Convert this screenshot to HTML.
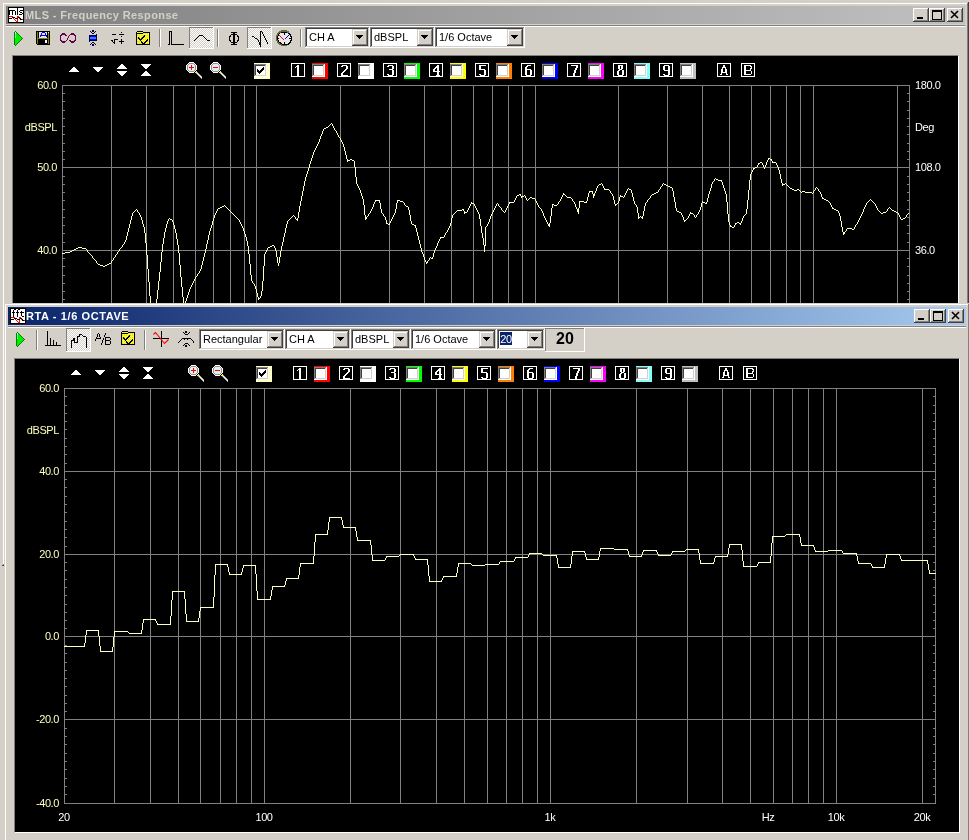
<!DOCTYPE html>
<html><head><meta charset="utf-8">
<style>
*{box-sizing:border-box}
html,body{margin:0;padding:0}
body{width:969px;height:840px;background:#d4d0c8;position:relative;overflow:hidden;font-family:"Liberation Sans",sans-serif;font-size:11px}
.a{position:absolute}
svg.a{overflow:visible}
.title{font-weight:bold;font-size:11px;line-height:18px;white-space:nowrap;transform:translateZ(0)}
.ctext{font-size:11px;color:#000;white-space:nowrap;transform:translateZ(0)}
.dither{background-color:#fff;background-image:linear-gradient(45deg,#d4d0c8 25%,transparent 25%,transparent 75%,#d4d0c8 75%),linear-gradient(45deg,#d4d0c8 25%,transparent 25%,transparent 75%,#d4d0c8 75%);background-size:2px 2px;background-position:0 0,1px 1px}
.lbl{font-size:12px;line-height:12px;white-space:nowrap;letter-spacing:-0.4px;transform:translateZ(0)}
</style></head><body>
<div class="a" style="left:3px;top:3px;width:964px;height:1px;background:#fff;"></div>
<div class="a" style="left:3px;top:3px;width:1px;height:561px;background:#fff;"></div>
<div class="a" style="left:3px;top:564px;width:1px;height:1px;background:#808080;"></div>
<div class="a" style="left:2px;top:565px;width:3px;height:1px;background:#404040;"></div>
<div class="a" style="left:967px;top:3px;width:1px;height:300px;background:#808080;"></div>
<div class="a" style="left:968px;top:2px;width:1px;height:301px;background:#404040;"></div>
<div class="a" style="left:6px;top:6px;width:959px;height:18px;background:linear-gradient(to right,#808080,#c0c0c0);"></div>
<div class="a title" style="left:26px;top:6px;color:#d4d0c8;letter-spacing:0.38px;margin-left:-1px">MLS - Frequency Response</div>
<svg class="a" style="left:8px;top:7px" width="16" height="16" shape-rendering="crispEdges"><rect x="0" y="0" width="16" height="1" fill="#000"/><rect x="0" y="1" width="1" height="1" fill="#000"/><rect x="1" y="1" width="8" height="1" fill="#fff"/><rect x="9" y="1" width="1" height="1" fill="#000"/><rect x="10" y="1" width="5" height="1" fill="#fff"/><rect x="15" y="1" width="1" height="1" fill="#000"/><rect x="0" y="2" width="1" height="1" fill="#000"/><rect x="1" y="2" width="8" height="1" fill="#fff"/><rect x="9" y="2" width="1" height="1" fill="#000"/><rect x="10" y="2" width="5" height="1" fill="#fff"/><rect x="15" y="2" width="1" height="1" fill="#000"/><rect x="0" y="3" width="7" height="1" fill="#000"/><rect x="7" y="3" width="2" height="1" fill="#fff"/><rect x="9" y="3" width="1" height="1" fill="#000"/><rect x="10" y="3" width="2" height="1" fill="#fff"/><rect x="12" y="3" width="4" height="1" fill="#000"/><rect x="0" y="4" width="2" height="1" fill="#000"/><rect x="2" y="4" width="2" height="1" fill="#fff"/><rect x="4" y="4" width="1" height="1" fill="#000"/><rect x="5" y="4" width="2" height="1" fill="#fff"/><rect x="7" y="4" width="1" height="1" fill="#000"/><rect x="8" y="4" width="1" height="1" fill="#fff"/><rect x="9" y="4" width="1" height="1" fill="#000"/><rect x="10" y="4" width="1" height="1" fill="#fff"/><rect x="11" y="4" width="1" height="1" fill="#000"/><rect x="12" y="4" width="3" height="1" fill="#fff"/><rect x="15" y="4" width="1" height="1" fill="#000"/><rect x="0" y="5" width="2" height="1" fill="#000"/><rect x="2" y="5" width="2" height="1" fill="#fff"/><rect x="4" y="5" width="1" height="1" fill="#000"/><rect x="5" y="5" width="2" height="1" fill="#fff"/><rect x="7" y="5" width="1" height="1" fill="#000"/><rect x="8" y="5" width="1" height="1" fill="#fff"/><rect x="9" y="5" width="1" height="1" fill="#000"/><rect x="10" y="5" width="2" height="1" fill="#fff"/><rect x="12" y="5" width="2" height="1" fill="#000"/><rect x="14" y="5" width="1" height="1" fill="#fff"/><rect x="15" y="5" width="1" height="1" fill="#000"/><rect x="0" y="6" width="2" height="1" fill="#000"/><rect x="2" y="6" width="2" height="1" fill="#fff"/><rect x="4" y="6" width="1" height="1" fill="#000"/><rect x="5" y="6" width="2" height="1" fill="#fff"/><rect x="7" y="6" width="1" height="1" fill="#000"/><rect x="8" y="6" width="1" height="1" fill="#fff"/><rect x="9" y="6" width="1" height="1" fill="#000"/><rect x="10" y="6" width="4" height="1" fill="#fff"/><rect x="14" y="6" width="2" height="1" fill="#000"/><rect x="0" y="7" width="2" height="1" fill="#000"/><rect x="2" y="7" width="2" height="1" fill="#fff"/><rect x="4" y="7" width="1" height="1" fill="#000"/><rect x="5" y="7" width="2" height="1" fill="#fff"/><rect x="7" y="7" width="1" height="1" fill="#000"/><rect x="8" y="7" width="1" height="1" fill="#fff"/><rect x="9" y="7" width="1" height="1" fill="#000"/><rect x="10" y="7" width="1" height="1" fill="#fff"/><rect x="11" y="7" width="3" height="1" fill="#000"/><rect x="14" y="7" width="1" height="1" fill="#fff"/><rect x="15" y="7" width="1" height="1" fill="#000"/><rect x="0" y="8" width="1" height="1" fill="#000"/><rect x="1" y="8" width="14" height="1" fill="#fff"/><rect x="15" y="8" width="1" height="1" fill="#000"/><rect x="0" y="9" width="1" height="1" fill="#000"/><rect x="1" y="9" width="4" height="1" fill="#ff0000"/><rect x="5" y="9" width="4" height="1" fill="#fff"/><rect x="9" y="9" width="2" height="1" fill="#ff0000"/><rect x="11" y="9" width="4" height="1" fill="#fff"/><rect x="15" y="9" width="1" height="1" fill="#000"/><rect x="0" y="10" width="1" height="1" fill="#000"/><rect x="1" y="10" width="3" height="1" fill="#fff"/><rect x="4" y="10" width="3" height="1" fill="#000"/><rect x="7" y="10" width="2" height="1" fill="#fff"/><rect x="9" y="10" width="1" height="1" fill="#ff0000"/><rect x="10" y="10" width="2" height="1" fill="#000"/><rect x="12" y="10" width="3" height="1" fill="#fff"/><rect x="15" y="10" width="1" height="1" fill="#000"/><rect x="0" y="11" width="4" height="1" fill="#000"/><rect x="4" y="11" width="1" height="1" fill="#fff"/><rect x="5" y="11" width="1" height="1" fill="#ff0000"/><rect x="6" y="11" width="1" height="1" fill="#fff"/><rect x="7" y="11" width="3" height="1" fill="#000"/><rect x="10" y="11" width="1" height="1" fill="#fff"/><rect x="11" y="11" width="1" height="1" fill="#ff0000"/><rect x="12" y="11" width="1" height="1" fill="#000"/><rect x="13" y="11" width="2" height="1" fill="#fff"/><rect x="15" y="11" width="1" height="1" fill="#000"/><rect x="0" y="12" width="1" height="1" fill="#000"/><rect x="1" y="12" width="5" height="1" fill="#fff"/><rect x="6" y="12" width="1" height="1" fill="#ff0000"/><rect x="7" y="12" width="2" height="1" fill="#fff"/><rect x="9" y="12" width="1" height="1" fill="#ff0000"/><rect x="10" y="12" width="2" height="1" fill="#fff"/><rect x="12" y="12" width="2" height="1" fill="#000"/><rect x="14" y="12" width="1" height="1" fill="#ff0000"/><rect x="15" y="12" width="1" height="1" fill="#000"/><rect x="0" y="13" width="1" height="1" fill="#000"/><rect x="1" y="13" width="6" height="1" fill="#fff"/><rect x="7" y="13" width="1" height="1" fill="#ff0000"/><rect x="8" y="13" width="1" height="1" fill="#fff"/><rect x="9" y="13" width="1" height="1" fill="#ff0000"/><rect x="10" y="13" width="5" height="1" fill="#fff"/><rect x="15" y="13" width="1" height="1" fill="#000"/><rect x="0" y="14" width="1" height="1" fill="#000"/><rect x="1" y="14" width="7" height="1" fill="#fff"/><rect x="8" y="14" width="2" height="1" fill="#ff0000"/><rect x="10" y="14" width="5" height="1" fill="#fff"/><rect x="15" y="14" width="1" height="1" fill="#000"/><rect x="0" y="15" width="16" height="1" fill="#000"/></svg>
<div class="a" style="left:913px;top:8px;width:16px;height:14px;background:#404040;"></div>
<div class="a" style="left:913px;top:8px;width:15px;height:13px;background:#fff;"></div>
<div class="a" style="left:914px;top:9px;width:14px;height:12px;background:#808080;"></div>
<div class="a" style="left:914px;top:9px;width:13px;height:11px;background:#d4d0c8;"></div>
<div class="a" style="left:929px;top:8px;width:16px;height:14px;background:#404040;"></div>
<div class="a" style="left:929px;top:8px;width:15px;height:13px;background:#fff;"></div>
<div class="a" style="left:930px;top:9px;width:14px;height:12px;background:#808080;"></div>
<div class="a" style="left:930px;top:9px;width:13px;height:11px;background:#d4d0c8;"></div>
<div class="a" style="left:947px;top:8px;width:16px;height:14px;background:#404040;"></div>
<div class="a" style="left:947px;top:8px;width:15px;height:13px;background:#fff;"></div>
<div class="a" style="left:948px;top:9px;width:14px;height:12px;background:#808080;"></div>
<div class="a" style="left:948px;top:9px;width:13px;height:11px;background:#d4d0c8;"></div>
<svg class="a" style="left:913px;top:8px" width="50" height="14" shape-rendering="crispEdges"><rect x="4" y="9" width="6" height="2" fill="#000"/><rect x="19" y="2" width="9" height="9" fill="none" stroke="#000" stroke-width="1" transform="translate(0.5 0.5)"/><rect x="19" y="3" width="9" height="1" fill="#000" transform="translate(0.5 0)"/></svg>
<svg class="a" style="left:947px;top:8px" width="16" height="14"><path d="M4 3 L11 10 M11 3 L4 10" stroke="#000" stroke-width="1.6" fill="none"/></svg>
<div class="a" style="left:6px;top:25px;width:959px;height:1px;background:#808080;"></div>
<div class="a" style="left:6px;top:26px;width:959px;height:1px;background:#fff;"></div>
<svg class="a" style="left:14px;top:31px" width="9" height="15" shape-rendering="crispEdges"><rect x="1" y="0" width="1" height="1" fill="#008000"/><rect x="0" y="1" width="1" height="1" fill="#008000"/><rect x="1" y="1" width="1" height="1" fill="#c0ffc0"/><rect x="2" y="1" width="1" height="1" fill="#008000"/><rect x="0" y="2" width="1" height="1" fill="#008000"/><rect x="1" y="2" width="1" height="1" fill="#c0ffc0"/><rect x="2" y="2" width="1" height="1" fill="#00f000"/><rect x="3" y="2" width="1" height="1" fill="#008000"/><rect x="0" y="3" width="1" height="1" fill="#008000"/><rect x="1" y="3" width="1" height="1" fill="#40ffb0"/><rect x="2" y="3" width="2" height="1" fill="#00f000"/><rect x="4" y="3" width="1" height="1" fill="#008000"/><rect x="0" y="4" width="1" height="1" fill="#008000"/><rect x="1" y="4" width="1" height="1" fill="#40ffb0"/><rect x="2" y="4" width="3" height="1" fill="#00f000"/><rect x="5" y="4" width="1" height="1" fill="#008000"/><rect x="0" y="5" width="1" height="1" fill="#008000"/><rect x="1" y="5" width="1" height="1" fill="#40ffb0"/><rect x="2" y="5" width="4" height="1" fill="#00f000"/><rect x="6" y="5" width="1" height="1" fill="#008000"/><rect x="0" y="6" width="1" height="1" fill="#008000"/><rect x="1" y="6" width="1" height="1" fill="#b0ff40"/><rect x="2" y="6" width="5" height="1" fill="#00f000"/><rect x="7" y="6" width="1" height="1" fill="#008000"/><rect x="0" y="7" width="1" height="1" fill="#008000"/><rect x="1" y="7" width="7" height="1" fill="#00f000"/><rect x="8" y="7" width="1" height="1" fill="#008000"/><rect x="0" y="8" width="1" height="1" fill="#008000"/><rect x="1" y="8" width="6" height="1" fill="#00f000"/><rect x="7" y="8" width="1" height="1" fill="#008000"/><rect x="0" y="9" width="1" height="1" fill="#008000"/><rect x="1" y="9" width="5" height="1" fill="#00f000"/><rect x="6" y="9" width="1" height="1" fill="#008000"/><rect x="0" y="10" width="1" height="1" fill="#008000"/><rect x="1" y="10" width="4" height="1" fill="#00f000"/><rect x="5" y="10" width="1" height="1" fill="#008000"/><rect x="0" y="11" width="1" height="1" fill="#008000"/><rect x="1" y="11" width="3" height="1" fill="#00f000"/><rect x="4" y="11" width="1" height="1" fill="#008000"/><rect x="0" y="12" width="1" height="1" fill="#008000"/><rect x="1" y="12" width="2" height="1" fill="#00f000"/><rect x="3" y="12" width="1" height="1" fill="#008000"/><rect x="0" y="13" width="1" height="1" fill="#008000"/><rect x="1" y="13" width="1" height="1" fill="#00f000"/><rect x="2" y="13" width="1" height="1" fill="#008000"/><rect x="1" y="14" width="1" height="1" fill="#008000"/></svg>
<svg class="a" style="left:36px;top:31px" width="14" height="14" shape-rendering="crispEdges"><rect x="0" y="0" width="14" height="1" fill="#000"/><rect x="0" y="1" width="1" height="1" fill="#000"/><rect x="1" y="1" width="1" height="1" fill="#808000"/><rect x="2" y="1" width="1" height="1" fill="#000"/><rect x="3" y="1" width="3" height="1" fill="#e8e8e0"/><rect x="6" y="1" width="3" height="1" fill="#0000ff"/><rect x="9" y="1" width="2" height="1" fill="#e8e8e0"/><rect x="11" y="1" width="1" height="1" fill="#000"/><rect x="12" y="1" width="1" height="1" fill="#fff"/><rect x="13" y="1" width="1" height="1" fill="#000"/><rect x="0" y="2" width="1" height="1" fill="#000"/><rect x="1" y="2" width="1" height="1" fill="#808000"/><rect x="2" y="2" width="1" height="1" fill="#000"/><rect x="3" y="2" width="2" height="1" fill="#e8e8e0"/><rect x="5" y="2" width="1" height="1" fill="#0000ff"/><rect x="6" y="2" width="3" height="1" fill="#e8e8e0"/><rect x="9" y="2" width="1" height="1" fill="#0000ff"/><rect x="10" y="2" width="1" height="1" fill="#e8e8e0"/><rect x="11" y="2" width="1" height="1" fill="#000"/><rect x="12" y="2" width="1" height="1" fill="#808000"/><rect x="13" y="2" width="1" height="1" fill="#000"/><rect x="0" y="3" width="1" height="1" fill="#000"/><rect x="1" y="3" width="1" height="1" fill="#808000"/><rect x="2" y="3" width="1" height="1" fill="#000"/><rect x="3" y="3" width="2" height="1" fill="#e8e8e0"/><rect x="5" y="3" width="1" height="1" fill="#0000ff"/><rect x="6" y="3" width="3" height="1" fill="#e8e8e0"/><rect x="9" y="3" width="1" height="1" fill="#0000ff"/><rect x="10" y="3" width="1" height="1" fill="#e8e8e0"/><rect x="11" y="3" width="1" height="1" fill="#000"/><rect x="12" y="3" width="1" height="1" fill="#808000"/><rect x="13" y="3" width="1" height="1" fill="#000"/><rect x="0" y="4" width="1" height="1" fill="#000"/><rect x="1" y="4" width="1" height="1" fill="#808000"/><rect x="2" y="4" width="1" height="1" fill="#000"/><rect x="3" y="4" width="1" height="1" fill="#e8e8e0"/><rect x="4" y="4" width="7" height="1" fill="#0000ff"/><rect x="11" y="4" width="1" height="1" fill="#000"/><rect x="12" y="4" width="1" height="1" fill="#808000"/><rect x="13" y="4" width="1" height="1" fill="#000"/><rect x="0" y="5" width="1" height="1" fill="#000"/><rect x="1" y="5" width="1" height="1" fill="#808000"/><rect x="2" y="5" width="1" height="1" fill="#000"/><rect x="3" y="5" width="1" height="1" fill="#e8e8e0"/><rect x="4" y="5" width="1" height="1" fill="#0000ff"/><rect x="5" y="5" width="5" height="1" fill="#e8e8e0"/><rect x="10" y="5" width="1" height="1" fill="#0000ff"/><rect x="11" y="5" width="1" height="1" fill="#000"/><rect x="12" y="5" width="1" height="1" fill="#808000"/><rect x="13" y="5" width="1" height="1" fill="#000"/><rect x="0" y="6" width="1" height="1" fill="#000"/><rect x="1" y="6" width="1" height="1" fill="#808000"/><rect x="2" y="6" width="1" height="1" fill="#000"/><rect x="3" y="6" width="8" height="1" fill="#e8e8e0"/><rect x="11" y="6" width="1" height="1" fill="#000"/><rect x="12" y="6" width="1" height="1" fill="#808000"/><rect x="13" y="6" width="1" height="1" fill="#000"/><rect x="0" y="7" width="1" height="1" fill="#000"/><rect x="1" y="7" width="12" height="1" fill="#808000"/><rect x="13" y="7" width="1" height="1" fill="#000"/><rect x="0" y="8" width="1" height="1" fill="#000"/><rect x="1" y="8" width="1" height="1" fill="#808000"/><rect x="2" y="8" width="10" height="1" fill="#000"/><rect x="12" y="8" width="1" height="1" fill="#808000"/><rect x="13" y="8" width="1" height="1" fill="#000"/><rect x="0" y="9" width="1" height="1" fill="#000"/><rect x="1" y="9" width="1" height="1" fill="#808000"/><rect x="2" y="9" width="7" height="1" fill="#000"/><rect x="9" y="9" width="2" height="1" fill="#fff"/><rect x="11" y="9" width="1" height="1" fill="#000"/><rect x="12" y="9" width="1" height="1" fill="#808000"/><rect x="13" y="9" width="1" height="1" fill="#000"/><rect x="0" y="10" width="1" height="1" fill="#000"/><rect x="1" y="10" width="1" height="1" fill="#808000"/><rect x="2" y="10" width="7" height="1" fill="#000"/><rect x="9" y="10" width="2" height="1" fill="#fff"/><rect x="11" y="10" width="1" height="1" fill="#000"/><rect x="12" y="10" width="1" height="1" fill="#808000"/><rect x="13" y="10" width="1" height="1" fill="#000"/><rect x="0" y="11" width="1" height="1" fill="#000"/><rect x="1" y="11" width="1" height="1" fill="#808000"/><rect x="2" y="11" width="7" height="1" fill="#000"/><rect x="9" y="11" width="2" height="1" fill="#fff"/><rect x="11" y="11" width="1" height="1" fill="#000"/><rect x="12" y="11" width="1" height="1" fill="#808000"/><rect x="13" y="11" width="1" height="1" fill="#000"/><rect x="0" y="12" width="1" height="1" fill="#000"/><rect x="1" y="12" width="1" height="1" fill="#808000"/><rect x="2" y="12" width="10" height="1" fill="#000"/><rect x="12" y="12" width="1" height="1" fill="#808000"/><rect x="13" y="12" width="1" height="1" fill="#000"/><rect x="1" y="13" width="13" height="1" fill="#000"/></svg>
<svg class="a" style="left:0;top:0" width="969" height="840" shape-rendering="crispEdges"><rect x="62" y="33" width="1" height="1" fill="#600050"/><rect x="63" y="33" width="1" height="1" fill="#600050"/><rect x="64" y="33" width="1" height="1" fill="#600050"/><rect x="61" y="34" width="1" height="1" fill="#600050"/><rect x="62" y="34" width="1" height="1" fill="#600050"/><rect x="63" y="34" width="1" height="1" fill="#600050"/><rect x="64" y="34" width="1" height="1" fill="#600050"/><rect x="65" y="34" width="1" height="1" fill="#600050"/><rect x="60" y="35" width="1" height="1" fill="#600050"/><rect x="61" y="35" width="1" height="1" fill="#600050"/><rect x="65" y="35" width="1" height="1" fill="#600050"/><rect x="66" y="35" width="1" height="1" fill="#600050"/><rect x="60" y="36" width="1" height="1" fill="#600050"/><rect x="60" y="37" width="1" height="1" fill="#600050"/><rect x="60" y="38" width="1" height="1" fill="#600050"/><rect x="60" y="39" width="1" height="1" fill="#600050"/><rect x="60" y="40" width="1" height="1" fill="#600050"/><rect x="61" y="40" width="1" height="1" fill="#600050"/><rect x="61" y="41" width="1" height="1" fill="#600050"/><rect x="62" y="41" width="1" height="1" fill="#600050"/><rect x="63" y="41" width="1" height="1" fill="#600050"/><rect x="64" y="41" width="1" height="1" fill="#600050"/><rect x="65" y="41" width="1" height="1" fill="#600050"/><rect x="62" y="42" width="1" height="1" fill="#600050"/><rect x="63" y="42" width="1" height="1" fill="#600050"/><rect x="64" y="42" width="1" height="1" fill="#600050"/><rect x="73" y="42" width="1" height="1" fill="#600050"/><rect x="72" y="42" width="1" height="1" fill="#600050"/><rect x="71" y="42" width="1" height="1" fill="#600050"/><rect x="74" y="41" width="1" height="1" fill="#600050"/><rect x="73" y="41" width="1" height="1" fill="#600050"/><rect x="72" y="41" width="1" height="1" fill="#600050"/><rect x="71" y="41" width="1" height="1" fill="#600050"/><rect x="70" y="41" width="1" height="1" fill="#600050"/><rect x="75" y="40" width="1" height="1" fill="#600050"/><rect x="74" y="40" width="1" height="1" fill="#600050"/><rect x="70" y="40" width="1" height="1" fill="#600050"/><rect x="69" y="40" width="1" height="1" fill="#600050"/><rect x="75" y="39" width="1" height="1" fill="#600050"/><rect x="75" y="38" width="1" height="1" fill="#600050"/><rect x="75" y="37" width="1" height="1" fill="#600050"/><rect x="75" y="36" width="1" height="1" fill="#600050"/><rect x="75" y="35" width="1" height="1" fill="#600050"/><rect x="74" y="35" width="1" height="1" fill="#600050"/><rect x="74" y="34" width="1" height="1" fill="#600050"/><rect x="73" y="34" width="1" height="1" fill="#600050"/><rect x="72" y="34" width="1" height="1" fill="#600050"/><rect x="71" y="34" width="1" height="1" fill="#600050"/><rect x="70" y="34" width="1" height="1" fill="#600050"/><rect x="73" y="33" width="1" height="1" fill="#600050"/><rect x="72" y="33" width="1" height="1" fill="#600050"/><rect x="71" y="33" width="1" height="1" fill="#600050"/></svg>
<svg class="a" style="left:0;top:0" width="969" height="840" shape-rendering="crispEdges"><rect x="66" y="40" width="1" height="1" fill="#700030"/><rect x="67" y="39" width="1" height="1" fill="#700030"/><rect x="67" y="38" width="1" height="1" fill="#700030"/><rect x="68" y="37" width="1" height="1" fill="#700030"/><rect x="68" y="36" width="1" height="1" fill="#700030"/><rect x="69" y="35" width="1" height="1" fill="#700030"/></svg>
<svg class="a" style="left:89px;top:30px" width="8" height="16" shape-rendering="crispEdges"><rect x="3" y="0" width="2" height="1" fill="#000040"/><rect x="1" y="1" width="1" height="1" fill="#000040"/><rect x="3" y="1" width="2" height="1" fill="#000040"/><rect x="6" y="1" width="1" height="1" fill="#000040"/><rect x="2" y="2" width="1" height="1" fill="#000040"/><rect x="5" y="2" width="1" height="1" fill="#000040"/><rect x="3" y="3" width="2" height="1" fill="#000040"/><rect x="7" y="4" width="1" height="1" fill="#000040"/><rect x="0" y="5" width="8" height="1" fill="#000040"/><rect x="0" y="6" width="1" height="1" fill="#000040"/><rect x="1" y="6" width="6" height="1" fill="#0000ff"/><rect x="7" y="6" width="1" height="1" fill="#000040"/><rect x="0" y="7" width="1" height="1" fill="#000040"/><rect x="1" y="7" width="6" height="1" fill="#3080ff"/><rect x="7" y="7" width="1" height="1" fill="#000040"/><rect x="0" y="8" width="1" height="1" fill="#000040"/><rect x="1" y="8" width="6" height="1" fill="#3080ff"/><rect x="7" y="8" width="1" height="1" fill="#000040"/><rect x="0" y="9" width="1" height="1" fill="#000040"/><rect x="1" y="9" width="6" height="1" fill="#0000ff"/><rect x="7" y="9" width="1" height="1" fill="#000040"/><rect x="0" y="10" width="8" height="1" fill="#000040"/><rect x="0" y="11" width="1" height="1" fill="#000040"/><rect x="3" y="12" width="2" height="1" fill="#000040"/><rect x="2" y="13" width="1" height="1" fill="#000040"/><rect x="5" y="13" width="1" height="1" fill="#000040"/><rect x="1" y="14" width="1" height="1" fill="#000040"/><rect x="3" y="14" width="2" height="1" fill="#000040"/><rect x="6" y="14" width="1" height="1" fill="#000040"/><rect x="3" y="15" width="2" height="1" fill="#000040"/></svg>
<svg class="a" style="left:111px;top:31px" width="14" height="14" shape-rendering="crispEdges" fill="#000">
<rect x="1" y="3" width="4" height="1"/>
<rect x="8" y="3" width="5" height="1"/><rect x="10" y="1" width="1" height="1"/><rect x="10" y="5" width="1" height="1"/>
<rect x="10" y="8" width="1" height="5"/><rect x="8" y="10" width="5" height="1"/>
<rect x="3" y="8" width="4" height="1"/><rect x="3" y="8" width="1" height="5"/><rect x="2" y="11" width="1" height="1"/><rect x="0" y="9" width="2" height="1"/><rect x="1" y="10" width="1" height="1"/>
</svg>
<svg class="a" style="left:136px;top:31px" width="14" height="14" shape-rendering="crispEdges"><rect x="1" y="0" width="6" height="1" fill="#000"/><rect x="0" y="1" width="1" height="1" fill="#000"/><rect x="1" y="1" width="6" height="1" fill="#ffff00"/><rect x="7" y="1" width="7" height="1" fill="#000"/><rect x="0" y="2" width="7" height="1" fill="#000"/><rect x="7" y="2" width="1" height="1" fill="#c8c8c0"/><rect x="8" y="2" width="1" height="1" fill="#ffff00"/><rect x="9" y="2" width="1" height="1" fill="#c8c8c0"/><rect x="10" y="2" width="1" height="1" fill="#ffff00"/><rect x="11" y="2" width="1" height="1" fill="#c8c8c0"/><rect x="12" y="2" width="1" height="1" fill="#ffff00"/><rect x="13" y="2" width="1" height="1" fill="#000"/><rect x="0" y="3" width="1" height="1" fill="#000"/><rect x="1" y="3" width="12" height="1" fill="#ffff00"/><rect x="13" y="3" width="1" height="1" fill="#000"/><rect x="0" y="4" width="1" height="1" fill="#000"/><rect x="1" y="4" width="1" height="1" fill="#c8c8c0"/><rect x="2" y="4" width="1" height="1" fill="#ffff00"/><rect x="3" y="4" width="1" height="1" fill="#c8c8c0"/><rect x="4" y="4" width="1" height="1" fill="#ffff00"/><rect x="5" y="4" width="1" height="1" fill="#c8c8c0"/><rect x="6" y="4" width="1" height="1" fill="#ffff00"/><rect x="7" y="4" width="1" height="1" fill="#c8c8c0"/><rect x="8" y="4" width="1" height="1" fill="#000"/><rect x="9" y="4" width="1" height="1" fill="#c8c8c0"/><rect x="10" y="4" width="1" height="1" fill="#ffff00"/><rect x="11" y="4" width="1" height="1" fill="#c8c8c0"/><rect x="12" y="4" width="1" height="1" fill="#ffff00"/><rect x="13" y="4" width="1" height="1" fill="#000"/><rect x="0" y="5" width="1" height="1" fill="#000"/><rect x="1" y="5" width="6" height="1" fill="#ffff00"/><rect x="7" y="5" width="2" height="1" fill="#000"/><rect x="9" y="5" width="4" height="1" fill="#ffff00"/><rect x="13" y="5" width="1" height="1" fill="#000"/><rect x="0" y="6" width="1" height="1" fill="#000"/><rect x="1" y="6" width="1" height="1" fill="#c8c8c0"/><rect x="2" y="6" width="1" height="1" fill="#000"/><rect x="3" y="6" width="1" height="1" fill="#c8c8c0"/><rect x="4" y="6" width="1" height="1" fill="#ffff00"/><rect x="5" y="6" width="1" height="1" fill="#c8c8c0"/><rect x="6" y="6" width="2" height="1" fill="#000"/><rect x="8" y="6" width="1" height="1" fill="#ffff00"/><rect x="9" y="6" width="1" height="1" fill="#c8c8c0"/><rect x="10" y="6" width="1" height="1" fill="#ffff00"/><rect x="11" y="6" width="1" height="1" fill="#c8c8c0"/><rect x="12" y="6" width="1" height="1" fill="#ffff00"/><rect x="13" y="6" width="1" height="1" fill="#000"/><rect x="0" y="7" width="1" height="1" fill="#000"/><rect x="1" y="7" width="1" height="1" fill="#ffff00"/><rect x="2" y="7" width="2" height="1" fill="#000"/><rect x="4" y="7" width="1" height="1" fill="#ffff00"/><rect x="5" y="7" width="2" height="1" fill="#000"/><rect x="7" y="7" width="6" height="1" fill="#ffff00"/><rect x="13" y="7" width="1" height="1" fill="#000"/><rect x="0" y="8" width="1" height="1" fill="#000"/><rect x="1" y="8" width="1" height="1" fill="#c8c8c0"/><rect x="2" y="8" width="1" height="1" fill="#ffff00"/><rect x="3" y="8" width="3" height="1" fill="#000"/><rect x="6" y="8" width="1" height="1" fill="#ffff00"/><rect x="7" y="8" width="1" height="1" fill="#c8c8c0"/><rect x="8" y="8" width="1" height="1" fill="#ffff00"/><rect x="9" y="8" width="1" height="1" fill="#c8c8c0"/><rect x="10" y="8" width="1" height="1" fill="#ffff00"/><rect x="11" y="8" width="1" height="1" fill="#000"/><rect x="12" y="8" width="1" height="1" fill="#ffff00"/><rect x="13" y="8" width="1" height="1" fill="#000"/><rect x="0" y="9" width="1" height="1" fill="#000"/><rect x="1" y="9" width="3" height="1" fill="#ffff00"/><rect x="4" y="9" width="1" height="1" fill="#000"/><rect x="5" y="9" width="5" height="1" fill="#ffff00"/><rect x="10" y="9" width="2" height="1" fill="#000"/><rect x="12" y="9" width="1" height="1" fill="#ffff00"/><rect x="13" y="9" width="1" height="1" fill="#000"/><rect x="0" y="10" width="1" height="1" fill="#000"/><rect x="1" y="10" width="1" height="1" fill="#c8c8c0"/><rect x="2" y="10" width="1" height="1" fill="#ffff00"/><rect x="3" y="10" width="1" height="1" fill="#c8c8c0"/><rect x="4" y="10" width="1" height="1" fill="#ffff00"/><rect x="5" y="10" width="1" height="1" fill="#000"/><rect x="6" y="10" width="1" height="1" fill="#ffff00"/><rect x="7" y="10" width="1" height="1" fill="#c8c8c0"/><rect x="8" y="10" width="1" height="1" fill="#ffff00"/><rect x="9" y="10" width="2" height="1" fill="#000"/><rect x="11" y="10" width="1" height="1" fill="#c8c8c0"/><rect x="12" y="10" width="1" height="1" fill="#ffff00"/><rect x="13" y="10" width="1" height="1" fill="#000"/><rect x="0" y="11" width="1" height="1" fill="#000"/><rect x="1" y="11" width="4" height="1" fill="#ffff00"/><rect x="5" y="11" width="2" height="1" fill="#000"/><rect x="7" y="11" width="1" height="1" fill="#ffff00"/><rect x="8" y="11" width="2" height="1" fill="#000"/><rect x="10" y="11" width="3" height="1" fill="#ffff00"/><rect x="13" y="11" width="1" height="1" fill="#000"/><rect x="0" y="12" width="1" height="1" fill="#000"/><rect x="1" y="12" width="1" height="1" fill="#c8c8c0"/><rect x="2" y="12" width="1" height="1" fill="#ffff00"/><rect x="3" y="12" width="1" height="1" fill="#c8c8c0"/><rect x="4" y="12" width="1" height="1" fill="#ffff00"/><rect x="5" y="12" width="1" height="1" fill="#c8c8c0"/><rect x="6" y="12" width="3" height="1" fill="#000"/><rect x="9" y="12" width="1" height="1" fill="#c8c8c0"/><rect x="10" y="12" width="1" height="1" fill="#ffff00"/><rect x="11" y="12" width="1" height="1" fill="#c8c8c0"/><rect x="12" y="12" width="1" height="1" fill="#ffff00"/><rect x="13" y="12" width="1" height="1" fill="#000"/><rect x="0" y="13" width="14" height="1" fill="#000"/></svg>
<div class="a" style="left:159px;top:29px;width:1px;height:18px;background:#808080;"></div>
<div class="a" style="left:160px;top:29px;width:1px;height:18px;background:#fff;"></div>
<svg class="a" style="left:0;top:0" width="969" height="840" shape-rendering="crispEdges"><rect x="168" y="44" width="1" height="1" fill="#000"/><rect x="169" y="31" width="1" height="1" fill="#000"/><rect x="169" y="32" width="1" height="1" fill="#000"/><rect x="169" y="33" width="1" height="1" fill="#000"/><rect x="169" y="34" width="1" height="1" fill="#000"/><rect x="169" y="35" width="1" height="1" fill="#000"/><rect x="169" y="36" width="1" height="1" fill="#000"/><rect x="169" y="37" width="1" height="1" fill="#000"/><rect x="169" y="38" width="1" height="1" fill="#000"/><rect x="169" y="39" width="1" height="1" fill="#000"/><rect x="169" y="40" width="1" height="1" fill="#000"/><rect x="169" y="41" width="1" height="1" fill="#000"/><rect x="169" y="42" width="1" height="1" fill="#000"/><rect x="169" y="43" width="1" height="1" fill="#000"/><rect x="169" y="44" width="1" height="1" fill="#000"/><rect x="170" y="31" width="1" height="1" fill="#000"/><rect x="171" y="31" width="1" height="1" fill="#000"/><rect x="171" y="32" width="1" height="1" fill="#000"/><rect x="171" y="33" width="1" height="1" fill="#000"/><rect x="171" y="34" width="1" height="1" fill="#000"/><rect x="171" y="35" width="1" height="1" fill="#000"/><rect x="171" y="36" width="1" height="1" fill="#000"/><rect x="171" y="37" width="1" height="1" fill="#000"/><rect x="171" y="38" width="1" height="1" fill="#000"/><rect x="171" y="39" width="1" height="1" fill="#000"/><rect x="171" y="40" width="1" height="1" fill="#000"/><rect x="171" y="41" width="1" height="1" fill="#000"/><rect x="171" y="42" width="1" height="1" fill="#000"/><rect x="171" y="43" width="1" height="1" fill="#000"/><rect x="171" y="44" width="1" height="1" fill="#000"/><rect x="171" y="44" width="1" height="1" fill="#000"/><rect x="172" y="44" width="1" height="1" fill="#000"/><rect x="173" y="44" width="1" height="1" fill="#000"/><rect x="174" y="44" width="1" height="1" fill="#000"/><rect x="175" y="44" width="1" height="1" fill="#000"/><rect x="176" y="44" width="1" height="1" fill="#000"/><rect x="177" y="44" width="1" height="1" fill="#000"/><rect x="178" y="44" width="1" height="1" fill="#000"/><rect x="179" y="44" width="1" height="1" fill="#000"/><rect x="180" y="44" width="1" height="1" fill="#000"/><rect x="181" y="44" width="1" height="1" fill="#000"/><rect x="182" y="44" width="1" height="1" fill="#000"/><rect x="183" y="44" width="1" height="1" fill="#000"/></svg>
<div class="a" style="left:189px;top:27px;width:25px;height:22px;background:#fff;"></div>
<div class="a" style="left:189px;top:27px;width:24px;height:21px;background:#808080;"></div>
<div class="a dither" style="left:190px;top:28px;width:23px;height:20px"></div>
<svg class="a" style="left:0;top:0" width="969" height="840" shape-rendering="crispEdges"><rect x="194" y="40" width="1" height="1" fill="#000"/><rect x="195" y="39" width="1" height="1" fill="#000"/><rect x="196" y="38" width="1" height="1" fill="#000"/><rect x="197" y="37" width="1" height="1" fill="#000"/><rect x="198" y="36" width="1" height="1" fill="#000"/><rect x="199" y="35" width="1" height="1" fill="#000"/><rect x="200" y="35" width="1" height="1" fill="#000"/><rect x="201" y="35" width="1" height="1" fill="#000"/><rect x="202" y="35" width="1" height="1" fill="#000"/><rect x="203" y="36" width="1" height="1" fill="#000"/><rect x="204" y="37" width="1" height="1" fill="#000"/><rect x="205" y="38" width="1" height="1" fill="#000"/><rect x="206" y="39" width="1" height="1" fill="#000"/><rect x="207" y="40" width="1" height="1" fill="#000"/><rect x="208" y="40" width="1" height="1" fill="#000"/><rect x="209" y="40" width="1" height="1" fill="#000"/></svg>
<div class="a" style="left:217px;top:29px;width:1px;height:18px;background:#808080;"></div>
<div class="a" style="left:218px;top:29px;width:1px;height:18px;background:#fff;"></div>
<svg class="a" style="left:229px;top:32px" width="10" height="14" shape-rendering="crispEdges" fill="#000">
<rect x="2" y="0" width="6" height="1"/><rect x="2" y="12" width="6" height="1"/>
<rect x="4" y="0" width="2" height="13"/>
<rect x="2" y="2" width="2" height="1"/><rect x="6" y="2" width="2" height="1"/>
<rect x="2" y="10" width="2" height="1"/><rect x="6" y="10" width="2" height="1"/>
<rect x="1" y="3" width="1" height="2"/><rect x="8" y="3" width="1" height="2"/>
<rect x="0" y="4" width="1" height="5"/><rect x="9" y="4" width="1" height="5"/>
<rect x="1" y="8" width="1" height="2"/><rect x="8" y="8" width="1" height="2"/>
</svg>
<div class="a" style="left:247px;top:27px;width:25px;height:22px;background:#fff;"></div>
<div class="a" style="left:247px;top:27px;width:24px;height:21px;background:#808080;"></div>
<div class="a dither" style="left:248px;top:28px;width:23px;height:20px"></div>
<svg class="a" style="left:0;top:0" width="969" height="840" shape-rendering="crispEdges"><rect x="252" y="36" width="1" height="1" fill="#000"/><rect x="253" y="36" width="1" height="1" fill="#000"/><rect x="254" y="37" width="1" height="1" fill="#000"/><rect x="255" y="38" width="1" height="1" fill="#000"/><rect x="256" y="38" width="1" height="1" fill="#000"/><rect x="257" y="39" width="1" height="1" fill="#000"/><rect x="258" y="40" width="1" height="1" fill="#000"/><rect x="258" y="41" width="1" height="1" fill="#000"/><rect x="259" y="42" width="1" height="1" fill="#000"/><rect x="259" y="43" width="1" height="1" fill="#000"/><rect x="259" y="44" width="1" height="1" fill="#000"/><rect x="260" y="31" width="1" height="1" fill="#000"/><rect x="260" y="32" width="1" height="1" fill="#000"/><rect x="260" y="33" width="1" height="1" fill="#000"/><rect x="260" y="34" width="1" height="1" fill="#000"/><rect x="260" y="35" width="1" height="1" fill="#000"/><rect x="260" y="36" width="1" height="1" fill="#000"/><rect x="260" y="37" width="1" height="1" fill="#000"/><rect x="260" y="38" width="1" height="1" fill="#000"/><rect x="260" y="39" width="1" height="1" fill="#000"/><rect x="260" y="40" width="1" height="1" fill="#000"/><rect x="260" y="41" width="1" height="1" fill="#000"/><rect x="260" y="42" width="1" height="1" fill="#000"/><rect x="260" y="43" width="1" height="1" fill="#000"/><rect x="260" y="44" width="1" height="1" fill="#000"/><rect x="260" y="45" width="1" height="1" fill="#000"/><rect x="260" y="46" width="1" height="1" fill="#000"/><rect x="261" y="31" width="1" height="1" fill="#000"/><rect x="262" y="32" width="1" height="1" fill="#000"/><rect x="262" y="33" width="1" height="1" fill="#000"/><rect x="263" y="34" width="1" height="1" fill="#000"/><rect x="263" y="35" width="1" height="1" fill="#000"/><rect x="264" y="36" width="1" height="1" fill="#000"/><rect x="264" y="37" width="1" height="1" fill="#000"/><rect x="265" y="38" width="1" height="1" fill="#000"/><rect x="265" y="39" width="1" height="1" fill="#000"/><rect x="266" y="40" width="1" height="1" fill="#000"/><rect x="266" y="41" width="1" height="1" fill="#000"/><rect x="267" y="42" width="1" height="1" fill="#000"/><rect x="267" y="43" width="1" height="1" fill="#000"/></svg>
<svg class="a" style="left:276px;top:30px" width="16" height="16" shape-rendering="crispEdges"><rect x="5" y="0" width="6" height="1" fill="#686848"/><rect x="3" y="1" width="10" height="1" fill="#686848"/><rect x="2" y="2" width="3" height="1" fill="#686848"/><rect x="5" y="2" width="6" height="1" fill="#000"/><rect x="11" y="2" width="2" height="1" fill="#686848"/><rect x="1" y="3" width="2" height="1" fill="#686848"/><rect x="3" y="3" width="1" height="1" fill="#000"/><rect x="4" y="3" width="4" height="1" fill="#e8e8e8"/><rect x="8" y="3" width="1" height="1" fill="#000"/><rect x="9" y="3" width="3" height="1" fill="#e8e8e8"/><rect x="12" y="3" width="2" height="1" fill="#000"/><rect x="1" y="4" width="1" height="1" fill="#686848"/><rect x="2" y="4" width="1" height="1" fill="#000"/><rect x="3" y="4" width="5" height="1" fill="#e8e8e8"/><rect x="8" y="4" width="1" height="1" fill="#000"/><rect x="9" y="4" width="4" height="1" fill="#e8e8e8"/><rect x="13" y="4" width="2" height="1" fill="#000"/><rect x="0" y="5" width="2" height="1" fill="#686848"/><rect x="2" y="5" width="1" height="1" fill="#000"/><rect x="3" y="5" width="1" height="1" fill="#ff0000"/><rect x="4" y="5" width="8" height="1" fill="#e8e8e8"/><rect x="12" y="5" width="1" height="1" fill="#0000ff"/><rect x="13" y="5" width="1" height="1" fill="#e8e8e8"/><rect x="14" y="5" width="1" height="1" fill="#000"/><rect x="0" y="6" width="1" height="1" fill="#686848"/><rect x="1" y="6" width="1" height="1" fill="#000"/><rect x="2" y="6" width="2" height="1" fill="#e8e8e8"/><rect x="4" y="6" width="1" height="1" fill="#ff0000"/><rect x="5" y="6" width="6" height="1" fill="#e8e8e8"/><rect x="11" y="6" width="1" height="1" fill="#0000ff"/><rect x="12" y="6" width="2" height="1" fill="#e8e8e8"/><rect x="14" y="6" width="2" height="1" fill="#000"/><rect x="0" y="7" width="1" height="1" fill="#686848"/><rect x="1" y="7" width="1" height="1" fill="#000"/><rect x="2" y="7" width="3" height="1" fill="#e8e8e8"/><rect x="5" y="7" width="1" height="1" fill="#ff0000"/><rect x="6" y="7" width="4" height="1" fill="#e8e8e8"/><rect x="10" y="7" width="1" height="1" fill="#0000ff"/><rect x="11" y="7" width="4" height="1" fill="#e8e8e8"/><rect x="15" y="7" width="1" height="1" fill="#000"/><rect x="0" y="8" width="1" height="1" fill="#686848"/><rect x="1" y="8" width="2" height="1" fill="#000"/><rect x="3" y="8" width="3" height="1" fill="#e8e8e8"/><rect x="6" y="8" width="1" height="1" fill="#ff0000"/><rect x="7" y="8" width="2" height="1" fill="#e8e8e8"/><rect x="9" y="8" width="1" height="1" fill="#0000ff"/><rect x="10" y="8" width="3" height="1" fill="#e8e8e8"/><rect x="13" y="8" width="3" height="1" fill="#000"/><rect x="0" y="9" width="1" height="1" fill="#686848"/><rect x="1" y="9" width="1" height="1" fill="#000"/><rect x="2" y="9" width="5" height="1" fill="#e8e8e8"/><rect x="7" y="9" width="1" height="1" fill="#ff0000"/><rect x="8" y="9" width="7" height="1" fill="#e8e8e8"/><rect x="15" y="9" width="1" height="1" fill="#000"/><rect x="0" y="10" width="2" height="1" fill="#686848"/><rect x="2" y="10" width="1" height="1" fill="#000"/><rect x="3" y="10" width="11" height="1" fill="#e8e8e8"/><rect x="14" y="10" width="2" height="1" fill="#000"/><rect x="1" y="11" width="1" height="1" fill="#686848"/><rect x="2" y="11" width="1" height="1" fill="#000"/><rect x="3" y="11" width="11" height="1" fill="#e8e8e8"/><rect x="14" y="11" width="1" height="1" fill="#000"/><rect x="1" y="12" width="2" height="1" fill="#686848"/><rect x="3" y="12" width="2" height="1" fill="#000"/><rect x="5" y="12" width="3" height="1" fill="#e8e8e8"/><rect x="8" y="12" width="1" height="1" fill="#000"/><rect x="9" y="12" width="4" height="1" fill="#e8e8e8"/><rect x="13" y="12" width="2" height="1" fill="#000"/><rect x="2" y="13" width="2" height="1" fill="#686848"/><rect x="4" y="13" width="2" height="1" fill="#000"/><rect x="6" y="13" width="2" height="1" fill="#e8e8e8"/><rect x="8" y="13" width="1" height="1" fill="#000"/><rect x="9" y="13" width="3" height="1" fill="#e8e8e8"/><rect x="12" y="13" width="2" height="1" fill="#000"/><rect x="3" y="14" width="3" height="1" fill="#686848"/><rect x="6" y="14" width="7" height="1" fill="#000"/><rect x="5" y="15" width="6" height="1" fill="#686848"/></svg>
<div class="a" style="left:300px;top:29px;width:1px;height:18px;background:#808080;"></div>
<div class="a" style="left:301px;top:29px;width:1px;height:18px;background:#fff;"></div>
<div class="a" style="left:305px;top:27px;width:65px;height:21px;background:#fff;"></div>
<div class="a" style="left:305px;top:27px;width:64px;height:20px;background:#808080;"></div>
<div class="a" style="left:306px;top:28px;width:63px;height:19px;background:#d4d0c8;"></div>
<div class="a" style="left:306px;top:28px;width:62px;height:18px;background:#404040;"></div>
<div class="a" style="left:307px;top:29px;width:61px;height:17px;background:#fff;"></div>
<div class="a" style="left:352px;top:29px;width:16px;height:17px;background:#404040;"></div>
<div class="a" style="left:352px;top:29px;width:15px;height:16px;background:#d4d0c8;"></div>
<div class="a" style="left:353px;top:30px;width:14px;height:15px;background:#808080;"></div>
<div class="a" style="left:353px;top:30px;width:13px;height:14px;background:#fff;"></div>
<div class="a" style="left:354px;top:31px;width:12px;height:13px;background:#d4d0c8;"></div>
<svg class="a" style="left:356px;top:35px" width="7" height="4" shape-rendering="crispEdges"><rect x="0" y="0" width="7" height="1"/><rect x="1" y="1" width="5" height="1"/><rect x="2" y="2" width="3" height="1"/><rect x="3" y="3" width="1" height="1"/></svg>
<div class="a ctext" style="left:309px;top:29px;line-height:17px">CH A</div>
<div class="a" style="left:370px;top:27px;width:65px;height:21px;background:#fff;"></div>
<div class="a" style="left:370px;top:27px;width:64px;height:20px;background:#808080;"></div>
<div class="a" style="left:371px;top:28px;width:63px;height:19px;background:#d4d0c8;"></div>
<div class="a" style="left:371px;top:28px;width:62px;height:18px;background:#404040;"></div>
<div class="a" style="left:372px;top:29px;width:61px;height:17px;background:#fff;"></div>
<div class="a" style="left:417px;top:29px;width:16px;height:17px;background:#404040;"></div>
<div class="a" style="left:417px;top:29px;width:15px;height:16px;background:#d4d0c8;"></div>
<div class="a" style="left:418px;top:30px;width:14px;height:15px;background:#808080;"></div>
<div class="a" style="left:418px;top:30px;width:13px;height:14px;background:#fff;"></div>
<div class="a" style="left:419px;top:31px;width:12px;height:13px;background:#d4d0c8;"></div>
<svg class="a" style="left:421px;top:35px" width="7" height="4" shape-rendering="crispEdges"><rect x="0" y="0" width="7" height="1"/><rect x="1" y="1" width="5" height="1"/><rect x="2" y="2" width="3" height="1"/><rect x="3" y="3" width="1" height="1"/></svg>
<div class="a ctext" style="left:374px;top:29px;line-height:17px">dBSPL</div>
<div class="a" style="left:435px;top:27px;width:90px;height:21px;background:#fff;"></div>
<div class="a" style="left:435px;top:27px;width:89px;height:20px;background:#808080;"></div>
<div class="a" style="left:436px;top:28px;width:88px;height:19px;background:#d4d0c8;"></div>
<div class="a" style="left:436px;top:28px;width:87px;height:18px;background:#404040;"></div>
<div class="a" style="left:437px;top:29px;width:86px;height:17px;background:#fff;"></div>
<div class="a" style="left:507px;top:29px;width:16px;height:17px;background:#404040;"></div>
<div class="a" style="left:507px;top:29px;width:15px;height:16px;background:#d4d0c8;"></div>
<div class="a" style="left:508px;top:30px;width:14px;height:15px;background:#808080;"></div>
<div class="a" style="left:508px;top:30px;width:13px;height:14px;background:#fff;"></div>
<div class="a" style="left:509px;top:31px;width:12px;height:13px;background:#d4d0c8;"></div>
<svg class="a" style="left:511px;top:35px" width="7" height="4" shape-rendering="crispEdges"><rect x="0" y="0" width="7" height="1"/><rect x="1" y="1" width="5" height="1"/><rect x="2" y="2" width="3" height="1"/><rect x="3" y="3" width="1" height="1"/></svg>
<div class="a ctext" style="left:439px;top:29px;line-height:17px">1/6 Octave</div>
<div class="a" style="left:12px;top:55px;width:947px;height:260px;background:#000;border-top:1px solid #808080;border-left:1px solid #808080;border-right:1px solid #fff;box-sizing:border-box"></div>
<svg class="a" style="left:0;top:0" width="969" height="840" shape-rendering="crispEdges"><defs><clipPath id="c56"><rect x="13" y="56" width="945" height="247"/></clipPath></defs><g clip-path="url(#c56)"><rect x="73" y="67" width="2" height="1" fill="#fff"/><rect x="72" y="68" width="4" height="1" fill="#fff"/><rect x="71" y="69" width="6" height="1" fill="#fff"/><rect x="70" y="70" width="8" height="1" fill="#fff"/><rect x="69" y="71" width="10" height="1" fill="#fff"/><rect x="93" y="67" width="10" height="1" fill="#fff"/><rect x="94" y="68" width="8" height="1" fill="#fff"/><rect x="95" y="69" width="6" height="1" fill="#fff"/><rect x="96" y="70" width="4" height="1" fill="#fff"/><rect x="97" y="71" width="2" height="1" fill="#fff"/><rect x="121" y="64" width="2" height="1" fill="#fff"/><rect x="120" y="65" width="4" height="1" fill="#fff"/><rect x="119" y="66" width="6" height="1" fill="#fff"/><rect x="118" y="67" width="8" height="1" fill="#fff"/><rect x="117" y="68" width="10" height="1" fill="#fff"/><rect x="117" y="71" width="10" height="1" fill="#fff"/><rect x="118" y="72" width="8" height="1" fill="#fff"/><rect x="119" y="73" width="6" height="1" fill="#fff"/><rect x="120" y="74" width="4" height="1" fill="#fff"/><rect x="121" y="75" width="2" height="1" fill="#fff"/><rect x="141" y="64" width="10" height="1" fill="#fff"/><rect x="142" y="65" width="8" height="1" fill="#fff"/><rect x="143" y="66" width="6" height="1" fill="#fff"/><rect x="144" y="67" width="4" height="1" fill="#fff"/><rect x="145" y="68" width="2" height="1" fill="#fff"/><rect x="145" y="71" width="2" height="1" fill="#fff"/><rect x="144" y="72" width="4" height="1" fill="#fff"/><rect x="143" y="73" width="6" height="1" fill="#fff"/><rect x="142" y="74" width="8" height="1" fill="#fff"/><rect x="141" y="75" width="10" height="1" fill="#fff"/><g transform="translate(184 60)"><path d="M5.5 2.5 L9.5 2.5 L12.5 5.5 L12.5 9.5 L9.5 12.5 L5.5 12.5 L2.5 9.5 L2.5 5.5 Z" fill="#e0f0f0" stroke="#fff" stroke-width="1"/><path d="M5.5 3.5 L9.5 3.5 L11.5 5.5 L11.5 9.5 L9.5 11.5 L5.5 11.5 L3.5 9.5 L3.5 5.5 Z" fill="none" stroke="#909090" stroke-width="1"/><rect x="5" y="7" width="5" height="1" fill="#ff0000"/><rect x="7" y="5" width="1" height="5" fill="#ff0000"/><rect x="12" y="12" width="1" height="1" fill="#ffffff"/><rect x="12" y="13" width="1" height="1" fill="#a0a0a0"/><rect x="13" y="12" width="1" height="1" fill="#a0a0a0"/><rect x="13" y="13" width="1" height="1" fill="#ffffff"/><rect x="13" y="14" width="1" height="1" fill="#a0a0a0"/><rect x="14" y="13" width="1" height="1" fill="#a0a0a0"/><rect x="14" y="14" width="1" height="1" fill="#ffffff"/><rect x="14" y="15" width="1" height="1" fill="#a0a0a0"/><rect x="15" y="14" width="1" height="1" fill="#a0a0a0"/><rect x="15" y="15" width="1" height="1" fill="#ffffff"/><rect x="15" y="16" width="1" height="1" fill="#a0a0a0"/><rect x="16" y="15" width="1" height="1" fill="#a0a0a0"/><rect x="16" y="16" width="1" height="1" fill="#ffffff"/><rect x="16" y="17" width="1" height="1" fill="#a0a0a0"/><rect x="17" y="16" width="1" height="1" fill="#a0a0a0"/><rect x="17" y="17" width="1" height="1" fill="#ffffff"/><rect x="17" y="18" width="1" height="1" fill="#a0a0a0"/><rect x="11" y="12" width="2" height="1" fill="#ffff00"/><rect x="12" y="11" width="1" height="2" fill="#ffff00"/></g><g transform="translate(208 60)"><path d="M5.5 2.5 L9.5 2.5 L12.5 5.5 L12.5 9.5 L9.5 12.5 L5.5 12.5 L2.5 9.5 L2.5 5.5 Z" fill="#e0f0f0" stroke="#fff" stroke-width="1"/><path d="M5.5 3.5 L9.5 3.5 L11.5 5.5 L11.5 9.5 L9.5 11.5 L5.5 11.5 L3.5 9.5 L3.5 5.5 Z" fill="none" stroke="#909090" stroke-width="1"/><rect x="5" y="7" width="5" height="1" fill="#ff0000"/><rect x="12" y="12" width="1" height="1" fill="#ffffff"/><rect x="12" y="13" width="1" height="1" fill="#a0a0a0"/><rect x="13" y="12" width="1" height="1" fill="#a0a0a0"/><rect x="13" y="13" width="1" height="1" fill="#ffffff"/><rect x="13" y="14" width="1" height="1" fill="#a0a0a0"/><rect x="14" y="13" width="1" height="1" fill="#a0a0a0"/><rect x="14" y="14" width="1" height="1" fill="#ffffff"/><rect x="14" y="15" width="1" height="1" fill="#a0a0a0"/><rect x="15" y="14" width="1" height="1" fill="#a0a0a0"/><rect x="15" y="15" width="1" height="1" fill="#ffffff"/><rect x="15" y="16" width="1" height="1" fill="#a0a0a0"/><rect x="16" y="15" width="1" height="1" fill="#a0a0a0"/><rect x="16" y="16" width="1" height="1" fill="#ffffff"/><rect x="16" y="17" width="1" height="1" fill="#a0a0a0"/><rect x="17" y="16" width="1" height="1" fill="#a0a0a0"/><rect x="17" y="17" width="1" height="1" fill="#ffffff"/><rect x="17" y="18" width="1" height="1" fill="#a0a0a0"/><rect x="11" y="12" width="2" height="1" fill="#ffff00"/><rect x="12" y="11" width="1" height="2" fill="#ffff00"/></g><rect x="254" y="63" width="16" height="16" fill="#ffffc0"/><rect x="254" y="64" width="13" height="13" fill="#fff"/><rect x="254" y="64" width="12" height="12" fill="#808080"/><rect x="255" y="65" width="11" height="11" fill="#d4d0c8"/><rect x="255" y="65" width="10" height="10" fill="#404040"/><rect x="256" y="66" width="9" height="9" fill="#fff"/><rect x="263" y="67" width="1" height="1" fill="#000"/><rect x="262" y="68" width="1" height="1" fill="#000"/><rect x="263" y="68" width="1" height="1" fill="#000"/><rect x="257" y="69" width="1" height="1" fill="#000"/><rect x="261" y="69" width="1" height="1" fill="#000"/><rect x="262" y="69" width="1" height="1" fill="#000"/><rect x="263" y="69" width="1" height="1" fill="#000"/><rect x="257" y="70" width="1" height="1" fill="#000"/><rect x="258" y="70" width="1" height="1" fill="#000"/><rect x="260" y="70" width="1" height="1" fill="#000"/><rect x="261" y="70" width="1" height="1" fill="#000"/><rect x="262" y="70" width="1" height="1" fill="#000"/><rect x="257" y="71" width="1" height="1" fill="#000"/><rect x="258" y="71" width="1" height="1" fill="#000"/><rect x="259" y="71" width="1" height="1" fill="#000"/><rect x="260" y="71" width="1" height="1" fill="#000"/><rect x="261" y="71" width="1" height="1" fill="#000"/><rect x="258" y="72" width="1" height="1" fill="#000"/><rect x="259" y="72" width="1" height="1" fill="#000"/><rect x="260" y="72" width="1" height="1" fill="#000"/><rect x="259" y="73" width="1" height="1" fill="#000"/><rect x="291.5" y="63.5" width="13" height="13" fill="none" stroke="#fff" stroke-width="1"/><path d="M297 65h2v1h-2zM296 66h3v1h-3zM295 67h1v1h-1zM297 67h2v1h-2zM297 68h2v1h-2zM297 69h2v1h-2zM297 70h2v1h-2zM297 71h2v1h-2zM297 72h2v1h-2zM297 73h2v1h-2zM297 74h2v1h-2zM297 75h2v1h-2z" fill="#fff"/><rect x="312" y="63" width="16" height="16" fill="#ff0000"/><rect x="312" y="64" width="13" height="13" fill="#fff"/><rect x="312" y="64" width="12" height="12" fill="#808080"/><rect x="313" y="65" width="11" height="11" fill="#d4d0c8"/><rect x="313" y="65" width="10" height="10" fill="#404040"/><rect x="314" y="66" width="9" height="9" fill="#fff"/><rect x="337.5" y="63.5" width="13" height="13" fill="none" stroke="#fff" stroke-width="1"/><path d="M342 65h5v1h-5zM341 66h2v1h-2zM346 66h2v1h-2zM346 67h2v1h-2zM346 68h2v1h-2zM345 69h2v1h-2zM344 70h2v1h-2zM343 71h2v1h-2zM342 72h2v1h-2zM341 73h2v1h-2zM341 74h2v1h-2zM341 75h7v1h-7z" fill="#fff"/><rect x="358" y="63" width="16" height="16" fill="#ffffff"/><rect x="358" y="64" width="13" height="13" fill="#fff"/><rect x="358" y="64" width="12" height="12" fill="#808080"/><rect x="359" y="65" width="11" height="11" fill="#d4d0c8"/><rect x="359" y="65" width="10" height="10" fill="#404040"/><rect x="360" y="66" width="9" height="9" fill="#fff"/><rect x="383.5" y="63.5" width="13" height="13" fill="none" stroke="#fff" stroke-width="1"/><path d="M388 65h5v1h-5zM387 66h2v1h-2zM392 66h2v1h-2zM392 67h2v1h-2zM392 68h2v1h-2zM389 69h4v1h-4zM392 70h2v1h-2zM392 71h2v1h-2zM392 72h2v1h-2zM392 73h2v1h-2zM387 74h2v1h-2zM392 74h2v1h-2zM388 75h5v1h-5z" fill="#fff"/><rect x="404" y="63" width="16" height="16" fill="#00ff00"/><rect x="404" y="64" width="13" height="13" fill="#fff"/><rect x="404" y="64" width="12" height="12" fill="#808080"/><rect x="405" y="65" width="11" height="11" fill="#d4d0c8"/><rect x="405" y="65" width="10" height="10" fill="#404040"/><rect x="406" y="66" width="9" height="9" fill="#fff"/><rect x="429.5" y="63.5" width="13" height="13" fill="none" stroke="#fff" stroke-width="1"/><path d="M437 65h2v1h-2zM436 66h3v1h-3zM435 67h4v1h-4zM434 68h2v1h-2zM437 68h2v1h-2zM433 69h2v1h-2zM437 69h2v1h-2zM433 70h2v1h-2zM437 70h2v1h-2zM433 71h7v1h-7zM437 72h2v1h-2zM437 73h2v1h-2zM437 74h2v1h-2zM436 75h4v1h-4z" fill="#fff"/><rect x="450" y="63" width="16" height="16" fill="#ffff00"/><rect x="450" y="64" width="13" height="13" fill="#fff"/><rect x="450" y="64" width="12" height="12" fill="#808080"/><rect x="451" y="65" width="11" height="11" fill="#d4d0c8"/><rect x="451" y="65" width="10" height="10" fill="#404040"/><rect x="452" y="66" width="9" height="9" fill="#fff"/><rect x="475.5" y="63.5" width="13" height="13" fill="none" stroke="#fff" stroke-width="1"/><path d="M479 65h7v1h-7zM479 66h2v1h-2zM479 67h2v1h-2zM479 68h2v1h-2zM479 69h6v1h-6zM484 70h2v1h-2zM484 71h2v1h-2zM484 72h2v1h-2zM484 73h2v1h-2zM479 74h2v1h-2zM484 74h2v1h-2zM480 75h5v1h-5z" fill="#fff"/><rect x="496" y="63" width="16" height="16" fill="#ff8000"/><rect x="496" y="64" width="13" height="13" fill="#fff"/><rect x="496" y="64" width="12" height="12" fill="#808080"/><rect x="497" y="65" width="11" height="11" fill="#d4d0c8"/><rect x="497" y="65" width="10" height="10" fill="#404040"/><rect x="498" y="66" width="9" height="9" fill="#fff"/><rect x="521.5" y="63.5" width="13" height="13" fill="none" stroke="#fff" stroke-width="1"/><path d="M527 65h4v1h-4zM526 66h2v1h-2zM525 67h2v1h-2zM525 68h2v1h-2zM525 69h6v1h-6zM525 70h2v1h-2zM530 70h2v1h-2zM525 71h2v1h-2zM530 71h2v1h-2zM525 72h2v1h-2zM530 72h2v1h-2zM525 73h2v1h-2zM530 73h2v1h-2zM525 74h2v1h-2zM530 74h2v1h-2zM526 75h5v1h-5z" fill="#fff"/><rect x="542" y="63" width="16" height="16" fill="#0000ff"/><rect x="542" y="64" width="13" height="13" fill="#fff"/><rect x="542" y="64" width="12" height="12" fill="#808080"/><rect x="543" y="65" width="11" height="11" fill="#d4d0c8"/><rect x="543" y="65" width="10" height="10" fill="#404040"/><rect x="544" y="66" width="9" height="9" fill="#fff"/><rect x="567.5" y="63.5" width="13" height="13" fill="none" stroke="#fff" stroke-width="1"/><path d="M571 65h7v1h-7zM576 66h2v1h-2zM576 67h2v1h-2zM575 68h2v1h-2zM575 69h2v1h-2zM574 70h2v1h-2zM574 71h2v1h-2zM574 72h2v1h-2zM573 73h2v1h-2zM573 74h2v1h-2zM573 75h2v1h-2z" fill="#fff"/><rect x="588" y="63" width="16" height="16" fill="#ff00ff"/><rect x="588" y="64" width="13" height="13" fill="#fff"/><rect x="588" y="64" width="12" height="12" fill="#808080"/><rect x="589" y="65" width="11" height="11" fill="#d4d0c8"/><rect x="589" y="65" width="10" height="10" fill="#404040"/><rect x="590" y="66" width="9" height="9" fill="#fff"/><rect x="613.5" y="63.5" width="13" height="13" fill="none" stroke="#fff" stroke-width="1"/><path d="M618 65h5v1h-5zM618 66h2v1h-2zM621 66h2v1h-2zM618 67h2v1h-2zM621 67h2v1h-2zM618 68h2v1h-2zM621 68h2v1h-2zM619 69h3v1h-3zM618 70h2v1h-2zM622 70h2v1h-2zM617 71h2v1h-2zM622 71h2v1h-2zM617 72h2v1h-2zM622 72h2v1h-2zM617 73h2v1h-2zM622 73h2v1h-2zM617 74h2v1h-2zM622 74h2v1h-2zM618 75h5v1h-5z" fill="#fff"/><rect x="634" y="63" width="16" height="16" fill="#80ffff"/><rect x="634" y="64" width="13" height="13" fill="#fff"/><rect x="634" y="64" width="12" height="12" fill="#808080"/><rect x="635" y="65" width="11" height="11" fill="#d4d0c8"/><rect x="635" y="65" width="10" height="10" fill="#404040"/><rect x="636" y="66" width="9" height="9" fill="#fff"/><rect x="659.5" y="63.5" width="13" height="13" fill="none" stroke="#fff" stroke-width="1"/><path d="M664 65h5v1h-5zM663 66h2v1h-2zM668 66h2v1h-2zM663 67h2v1h-2zM668 67h2v1h-2zM663 68h2v1h-2zM668 68h2v1h-2zM663 69h2v1h-2zM668 69h2v1h-2zM664 70h6v1h-6zM668 71h2v1h-2zM668 72h2v1h-2zM668 73h2v1h-2zM663 74h2v1h-2zM668 74h2v1h-2zM664 75h5v1h-5z" fill="#fff"/><rect x="680" y="63" width="16" height="16" fill="#c0c0c0"/><rect x="680" y="64" width="13" height="13" fill="#fff"/><rect x="680" y="64" width="12" height="12" fill="#808080"/><rect x="681" y="65" width="11" height="11" fill="#d4d0c8"/><rect x="681" y="65" width="10" height="10" fill="#404040"/><rect x="682" y="66" width="9" height="9" fill="#fff"/><rect x="717.5" y="63.5" width="13" height="13" fill="none" stroke="#fff" stroke-width="1"/><path d="M723 65h2v1h-2zM723 66h2v1h-2zM722 67h4v1h-4zM722 68h1v1h-1zM725 68h1v1h-1zM721 69h2v1h-2zM725 69h2v1h-2zM721 70h2v1h-2zM725 70h2v1h-2zM721 71h2v1h-2zM725 71h2v1h-2zM721 72h6v1h-6zM721 73h1v1h-1zM726 73h1v1h-1zM720 74h2v1h-2zM726 74h2v1h-2z" fill="#fff"/><rect x="741.5" y="63.5" width="13" height="13" fill="none" stroke="#fff" stroke-width="1"/><path d="M744 65h7v1h-7zM744 66h2v1h-2zM750 66h2v1h-2zM744 67h2v1h-2zM751 67h1v1h-1zM744 68h2v1h-2zM750 68h2v1h-2zM744 69h2v1h-2zM750 69h1v1h-1zM744 70h7v1h-7zM744 71h2v1h-2zM751 71h1v1h-1zM744 72h2v1h-2zM751 72h1v1h-1zM744 73h2v1h-2zM751 73h1v1h-1zM744 74h7v1h-7z" fill="#fff"/><rect x="62" y="85" width="1" height="248" fill="#808080"/><rect x="909" y="85" width="1" height="248" fill="#808080"/><rect x="62" y="85" width="848" height="1" fill="#808080"/><rect x="62" y="167" width="848" height="1" fill="#808080"/><rect x="62" y="250" width="848" height="1" fill="#808080"/><rect x="62" y="332" width="848" height="1" fill="#808080"/><rect x="111" y="85" width="1" height="248" fill="#808080"/><rect x="146" y="85" width="1" height="248" fill="#808080"/><rect x="173" y="85" width="1" height="248" fill="#808080"/><rect x="195" y="85" width="1" height="248" fill="#808080"/><rect x="213" y="85" width="1" height="248" fill="#808080"/><rect x="230" y="85" width="1" height="248" fill="#808080"/><rect x="244" y="85" width="1" height="248" fill="#808080"/><rect x="256" y="85" width="1" height="248" fill="#808080"/><rect x="340" y="85" width="1" height="248" fill="#808080"/><rect x="389" y="85" width="1" height="248" fill="#808080"/><rect x="424" y="85" width="1" height="248" fill="#808080"/><rect x="451" y="85" width="1" height="248" fill="#808080"/><rect x="473" y="85" width="1" height="248" fill="#808080"/><rect x="492" y="85" width="1" height="248" fill="#808080"/><rect x="508" y="85" width="1" height="248" fill="#808080"/><rect x="522" y="85" width="1" height="248" fill="#808080"/><rect x="535" y="85" width="1" height="248" fill="#808080"/><rect x="618" y="85" width="1" height="248" fill="#808080"/><rect x="667" y="85" width="1" height="248" fill="#808080"/><rect x="702" y="85" width="1" height="248" fill="#808080"/><rect x="729" y="85" width="1" height="248" fill="#808080"/><rect x="751" y="85" width="1" height="248" fill="#808080"/><rect x="770" y="85" width="1" height="248" fill="#808080"/><rect x="786" y="85" width="1" height="248" fill="#808080"/><rect x="800" y="85" width="1" height="248" fill="#808080"/><rect x="813" y="85" width="1" height="248" fill="#808080"/><rect x="897" y="85" width="1" height="248" fill="#808080"/><rect x="62" y="93" width="3" height="1" fill="#808080"/><rect x="907" y="93" width="3" height="1" fill="#808080"/><rect x="62" y="101" width="3" height="1" fill="#808080"/><rect x="907" y="101" width="3" height="1" fill="#808080"/><rect x="62" y="110" width="3" height="1" fill="#808080"/><rect x="907" y="110" width="3" height="1" fill="#808080"/><rect x="62" y="118" width="3" height="1" fill="#808080"/><rect x="907" y="118" width="3" height="1" fill="#808080"/><rect x="62" y="126" width="3" height="1" fill="#808080"/><rect x="907" y="126" width="3" height="1" fill="#808080"/><rect x="62" y="134" width="3" height="1" fill="#808080"/><rect x="907" y="134" width="3" height="1" fill="#808080"/><rect x="62" y="143" width="3" height="1" fill="#808080"/><rect x="907" y="143" width="3" height="1" fill="#808080"/><rect x="62" y="151" width="3" height="1" fill="#808080"/><rect x="907" y="151" width="3" height="1" fill="#808080"/><rect x="62" y="159" width="3" height="1" fill="#808080"/><rect x="907" y="159" width="3" height="1" fill="#808080"/><rect x="62" y="176" width="3" height="1" fill="#808080"/><rect x="907" y="176" width="3" height="1" fill="#808080"/><rect x="62" y="184" width="3" height="1" fill="#808080"/><rect x="907" y="184" width="3" height="1" fill="#808080"/><rect x="62" y="192" width="3" height="1" fill="#808080"/><rect x="907" y="192" width="3" height="1" fill="#808080"/><rect x="62" y="200" width="3" height="1" fill="#808080"/><rect x="907" y="200" width="3" height="1" fill="#808080"/><rect x="62" y="209" width="3" height="1" fill="#808080"/><rect x="907" y="209" width="3" height="1" fill="#808080"/><rect x="62" y="217" width="3" height="1" fill="#808080"/><rect x="907" y="217" width="3" height="1" fill="#808080"/><rect x="62" y="225" width="3" height="1" fill="#808080"/><rect x="907" y="225" width="3" height="1" fill="#808080"/><rect x="62" y="233" width="3" height="1" fill="#808080"/><rect x="907" y="233" width="3" height="1" fill="#808080"/><rect x="62" y="242" width="3" height="1" fill="#808080"/><rect x="907" y="242" width="3" height="1" fill="#808080"/><rect x="62" y="258" width="3" height="1" fill="#808080"/><rect x="907" y="258" width="3" height="1" fill="#808080"/><rect x="62" y="266" width="3" height="1" fill="#808080"/><rect x="907" y="266" width="3" height="1" fill="#808080"/><rect x="62" y="275" width="3" height="1" fill="#808080"/><rect x="907" y="275" width="3" height="1" fill="#808080"/><rect x="62" y="283" width="3" height="1" fill="#808080"/><rect x="907" y="283" width="3" height="1" fill="#808080"/><rect x="62" y="291" width="3" height="1" fill="#808080"/><rect x="907" y="291" width="3" height="1" fill="#808080"/><rect x="62" y="299" width="3" height="1" fill="#808080"/><rect x="907" y="299" width="3" height="1" fill="#808080"/><rect x="62" y="308" width="3" height="1" fill="#808080"/><rect x="907" y="308" width="3" height="1" fill="#808080"/><rect x="62" y="316" width="3" height="1" fill="#808080"/><rect x="907" y="316" width="3" height="1" fill="#808080"/><rect x="62" y="324" width="3" height="1" fill="#808080"/><rect x="907" y="324" width="3" height="1" fill="#808080"/><rect x="62" y="341" width="3" height="1" fill="#808080"/><rect x="907" y="341" width="3" height="1" fill="#808080"/><rect x="62" y="349" width="3" height="1" fill="#808080"/><rect x="907" y="349" width="3" height="1" fill="#808080"/><rect x="62" y="357" width="3" height="1" fill="#808080"/><rect x="907" y="357" width="3" height="1" fill="#808080"/><rect x="62" y="365" width="3" height="1" fill="#808080"/><rect x="907" y="365" width="3" height="1" fill="#808080"/><rect x="62" y="374" width="3" height="1" fill="#808080"/><rect x="907" y="374" width="3" height="1" fill="#808080"/><rect x="62" y="382" width="3" height="1" fill="#808080"/><rect x="907" y="382" width="3" height="1" fill="#808080"/><rect x="62" y="390" width="3" height="1" fill="#808080"/><rect x="907" y="390" width="3" height="1" fill="#808080"/><rect x="62" y="398" width="3" height="1" fill="#808080"/><rect x="907" y="398" width="3" height="1" fill="#808080"/><rect x="62" y="407" width="3" height="1" fill="#808080"/><rect x="907" y="407" width="3" height="1" fill="#808080"/><path d="M331 123h1v1h-1zM330 124h1v1h-1zM332 124h1v1h-1zM329 125h1v1h-1zM332 125h1v1h-1zM328 126h1v1h-1zM333 126h1v1h-1zM326 127h2v1h-2zM333 127h1v1h-1zM324 128h2v1h-2zM334 128h1v1h-1zM323 129h1v1h-1zM334 129h1v1h-1zM323 130h1v1h-1zM335 130h1v1h-1zM322 131h1v1h-1zM336 131h1v1h-1zM322 132h1v1h-1zM336 132h1v1h-1zM322 133h1v1h-1zM337 133h1v1h-1zM321 134h1v1h-1zM337 134h1v1h-1zM321 135h1v1h-1zM338 135h1v1h-1zM320 136h1v1h-1zM338 136h1v1h-1zM320 137h1v1h-1zM339 137h1v1h-1zM320 138h1v1h-1zM340 138h1v1h-1zM319 139h1v1h-1zM340 139h1v1h-1zM319 140h1v1h-1zM341 140h1v1h-1zM319 141h1v1h-1zM341 141h1v1h-1zM318 142h1v1h-1zM342 142h1v1h-1zM318 143h1v1h-1zM342 143h1v1h-1zM317 144h1v1h-1zM343 144h1v1h-1zM317 145h1v1h-1zM343 145h1v1h-1zM316 146h1v1h-1zM343 146h1v1h-1zM316 147h1v1h-1zM344 147h1v1h-1zM315 148h1v1h-1zM344 148h1v1h-1zM315 149h1v1h-1zM344 149h1v1h-1zM314 150h1v1h-1zM344 150h1v1h-1zM314 151h1v1h-1zM345 151h1v1h-1zM313 152h1v1h-1zM345 152h1v1h-1zM313 153h1v1h-1zM345 153h1v1h-1zM313 154h1v1h-1zM345 154h1v1h-1zM312 155h1v1h-1zM346 155h1v1h-1zM312 156h1v1h-1zM346 156h1v1h-1zM312 157h1v1h-1zM346 157h1v1h-1zM311 158h1v1h-1zM346 158h1v1h-1zM768 158h2v1h-2zM311 159h1v1h-1zM347 159h1v1h-1zM350 159h2v1h-2zM768 159h1v1h-1zM770 159h2v1h-2zM311 160h1v1h-1zM347 160h3v1h-3zM352 160h2v1h-2zM767 160h1v1h-1zM771 160h1v1h-1zM310 161h1v1h-1zM347 161h1v1h-1zM354 161h1v1h-1zM767 161h1v1h-1zM772 161h1v1h-1zM310 162h1v1h-1zM354 162h1v1h-1zM760 162h2v1h-2zM766 162h1v1h-1zM772 162h4v1h-4zM310 163h1v1h-1zM354 163h1v1h-1zM758 163h2v1h-2zM762 163h1v1h-1zM766 163h1v1h-1zM776 163h1v1h-1zM309 164h1v1h-1zM354 164h1v1h-1zM758 164h1v1h-1zM762 164h1v1h-1zM766 164h1v1h-1zM776 164h1v1h-1zM309 165h1v1h-1zM354 165h1v1h-1zM757 165h1v1h-1zM763 165h1v1h-1zM765 165h1v1h-1zM777 165h1v1h-1zM309 166h1v1h-1zM354 166h1v1h-1zM757 166h1v1h-1zM763 166h1v1h-1zM765 166h1v1h-1zM777 166h1v1h-1zM309 167h1v1h-1zM355 167h1v1h-1zM755 167h2v1h-2zM764 167h1v1h-1zM778 167h1v1h-1zM308 168h1v1h-1zM355 168h1v1h-1zM753 168h2v1h-2zM764 168h1v1h-1zM778 168h1v1h-1zM308 169h1v1h-1zM355 169h1v1h-1zM753 169h1v1h-1zM778 169h1v1h-1zM308 170h1v1h-1zM355 170h1v1h-1zM752 170h1v1h-1zM779 170h1v1h-1zM307 171h1v1h-1zM355 171h1v1h-1zM752 171h1v1h-1zM779 171h1v1h-1zM307 172h1v1h-1zM355 172h1v1h-1zM751 172h1v1h-1zM779 172h1v1h-1zM307 173h1v1h-1zM355 173h1v1h-1zM751 173h1v1h-1zM779 173h1v1h-1zM306 174h1v1h-1zM355 174h1v1h-1zM750 174h1v1h-1zM780 174h1v1h-1zM306 175h1v1h-1zM355 175h1v1h-1zM750 175h1v1h-1zM780 175h1v1h-1zM306 176h1v1h-1zM355 176h1v1h-1zM750 176h1v1h-1zM780 176h1v1h-1zM305 177h1v1h-1zM356 177h1v1h-1zM750 177h1v1h-1zM780 177h1v1h-1zM305 178h1v1h-1zM356 178h1v1h-1zM715 178h1v1h-1zM750 178h1v1h-1zM780 178h1v1h-1zM305 179h1v1h-1zM356 179h1v1h-1zM714 179h1v1h-1zM716 179h2v1h-2zM750 179h1v1h-1zM781 179h1v1h-1zM305 180h1v1h-1zM356 180h1v1h-1zM714 180h1v1h-1zM718 180h4v1h-4zM749 180h1v1h-1zM781 180h1v1h-1zM304 181h1v1h-1zM356 181h1v1h-1zM713 181h1v1h-1zM721 181h1v1h-1zM749 181h1v1h-1zM781 181h1v1h-1zM304 182h1v1h-1zM356 182h1v1h-1zM712 182h1v1h-1zM722 182h1v1h-1zM749 182h1v1h-1zM781 182h1v1h-1zM304 183h1v1h-1zM356 183h1v1h-1zM601 183h1v1h-1zM663 183h1v1h-1zM712 183h1v1h-1zM722 183h1v1h-1zM749 183h1v1h-1zM782 183h1v1h-1zM785 183h1v1h-1zM304 184h1v1h-1zM357 184h1v1h-1zM599 184h2v1h-2zM602 184h1v1h-1zM662 184h1v1h-1zM664 184h2v1h-2zM711 184h1v1h-1zM722 184h1v1h-1zM749 184h1v1h-1zM782 184h3v1h-3zM786 184h1v1h-1zM304 185h1v1h-1zM357 185h1v1h-1zM598 185h1v1h-1zM602 185h1v1h-1zM662 185h1v1h-1zM666 185h2v1h-2zM711 185h1v1h-1zM723 185h1v1h-1zM749 185h1v1h-1zM782 185h1v1h-1zM787 185h1v1h-1zM303 186h1v1h-1zM358 186h1v1h-1zM597 186h1v1h-1zM603 186h1v1h-1zM661 186h1v1h-1zM668 186h2v1h-2zM711 186h1v1h-1zM723 186h1v1h-1zM749 186h1v1h-1zM788 186h1v1h-1zM303 187h1v1h-1zM358 187h1v1h-1zM597 187h1v1h-1zM603 187h1v1h-1zM660 187h1v1h-1zM670 187h2v1h-2zM711 187h1v1h-1zM723 187h1v1h-1zM749 187h1v1h-1zM789 187h1v1h-1zM816 187h1v1h-1zM303 188h1v1h-1zM359 188h1v1h-1zM596 188h1v1h-1zM604 188h1v1h-1zM628 188h1v1h-1zM660 188h1v1h-1zM672 188h1v1h-1zM710 188h1v1h-1zM724 188h1v1h-1zM749 188h1v1h-1zM790 188h2v1h-2zM815 188h1v1h-1zM817 188h1v1h-1zM303 189h1v1h-1zM359 189h1v1h-1zM596 189h1v1h-1zM604 189h5v1h-5zM627 189h1v1h-1zM629 189h2v1h-2zM659 189h1v1h-1zM672 189h1v1h-1zM710 189h1v1h-1zM724 189h1v1h-1zM749 189h1v1h-1zM792 189h2v1h-2zM797 189h2v1h-2zM815 189h1v1h-1zM818 189h1v1h-1zM303 190h1v1h-1zM360 190h1v1h-1zM596 190h1v1h-1zM609 190h1v1h-1zM627 190h1v1h-1zM631 190h1v1h-1zM658 190h1v1h-1zM672 190h1v1h-1zM710 190h1v1h-1zM724 190h1v1h-1zM748 190h1v1h-1zM794 190h3v1h-3zM799 190h1v1h-1zM814 190h1v1h-1zM818 190h1v1h-1zM302 191h1v1h-1zM360 191h1v1h-1zM589 191h4v1h-4zM595 191h1v1h-1zM610 191h1v1h-1zM626 191h1v1h-1zM631 191h1v1h-1zM658 191h1v1h-1zM673 191h1v1h-1zM709 191h1v1h-1zM725 191h1v1h-1zM748 191h1v1h-1zM800 191h1v1h-1zM802 191h3v1h-3zM813 191h1v1h-1zM819 191h1v1h-1zM302 192h1v1h-1zM360 192h1v1h-1zM589 192h1v1h-1zM592 192h1v1h-1zM595 192h1v1h-1zM610 192h1v1h-1zM626 192h1v1h-1zM631 192h1v1h-1zM656 192h2v1h-2zM673 192h1v1h-1zM709 192h1v1h-1zM725 192h1v1h-1zM748 192h1v1h-1zM801 192h1v1h-1zM805 192h7v1h-7zM813 192h1v1h-1zM820 192h1v1h-1zM302 193h1v1h-1zM361 193h1v1h-1zM563 193h1v1h-1zM588 193h1v1h-1zM592 193h1v1h-1zM594 193h1v1h-1zM611 193h1v1h-1zM625 193h1v1h-1zM632 193h1v1h-1zM654 193h2v1h-2zM673 193h1v1h-1zM709 193h1v1h-1zM725 193h1v1h-1zM748 193h1v1h-1zM812 193h1v1h-1zM820 193h1v1h-1zM302 194h1v1h-1zM361 194h1v1h-1zM519 194h2v1h-2zM563 194h2v1h-2zM588 194h1v1h-1zM593 194h2v1h-2zM612 194h1v1h-1zM625 194h1v1h-1zM632 194h1v1h-1zM652 194h2v1h-2zM673 194h1v1h-1zM708 194h1v1h-1zM726 194h1v1h-1zM748 194h1v1h-1zM821 194h1v1h-1zM302 195h1v1h-1zM361 195h1v1h-1zM517 195h2v1h-2zM520 195h1v1h-1zM524 195h1v1h-1zM562 195h1v1h-1zM565 195h1v1h-1zM588 195h1v1h-1zM593 195h2v1h-2zM612 195h1v1h-1zM620 195h1v1h-1zM624 195h1v1h-1zM632 195h1v1h-1zM651 195h1v1h-1zM673 195h1v1h-1zM708 195h1v1h-1zM726 195h1v1h-1zM748 195h1v1h-1zM821 195h1v1h-1zM301 196h1v1h-1zM362 196h1v1h-1zM516 196h1v1h-1zM521 196h3v1h-3zM525 196h1v1h-1zM562 196h1v1h-1zM566 196h1v1h-1zM588 196h1v1h-1zM593 196h1v1h-1zM613 196h1v1h-1zM620 196h3v1h-3zM624 196h1v1h-1zM632 196h1v1h-1zM650 196h1v1h-1zM673 196h1v1h-1zM708 196h1v1h-1zM726 196h1v1h-1zM748 196h1v1h-1zM821 196h1v1h-1zM301 197h1v1h-1zM362 197h1v1h-1zM516 197h1v1h-1zM521 197h1v1h-1zM525 197h1v1h-1zM530 197h2v1h-2zM561 197h1v1h-1zM567 197h4v1h-4zM587 197h1v1h-1zM593 197h1v1h-1zM613 197h1v1h-1zM619 197h1v1h-1zM623 197h1v1h-1zM633 197h1v1h-1zM650 197h1v1h-1zM674 197h1v1h-1zM708 197h1v1h-1zM726 197h1v1h-1zM748 197h1v1h-1zM822 197h1v1h-1zM301 198h1v1h-1zM362 198h1v1h-1zM515 198h1v1h-1zM526 198h1v1h-1zM529 198h1v1h-1zM532 198h3v1h-3zM561 198h1v1h-1zM571 198h1v1h-1zM587 198h1v1h-1zM613 198h1v1h-1zM619 198h1v1h-1zM633 198h1v1h-1zM649 198h1v1h-1zM674 198h1v1h-1zM707 198h1v1h-1zM726 198h1v1h-1zM748 198h1v1h-1zM822 198h2v1h-2zM301 199h1v1h-1zM363 199h1v1h-1zM515 199h1v1h-1zM526 199h1v1h-1zM528 199h1v1h-1zM535 199h1v1h-1zM560 199h1v1h-1zM572 199h1v1h-1zM587 199h1v1h-1zM613 199h1v1h-1zM619 199h1v1h-1zM633 199h1v1h-1zM648 199h1v1h-1zM674 199h1v1h-1zM707 199h1v1h-1zM726 199h1v1h-1zM748 199h1v1h-1zM824 199h2v1h-2zM870 199h1v1h-1zM301 200h1v1h-1zM363 200h1v1h-1zM375 200h5v1h-5zM397 200h3v1h-3zM514 200h1v1h-1zM527 200h1v1h-1zM535 200h1v1h-1zM560 200h1v1h-1zM572 200h1v1h-1zM587 200h1v1h-1zM614 200h1v1h-1zM619 200h1v1h-1zM633 200h1v1h-1zM647 200h1v1h-1zM674 200h1v1h-1zM707 200h1v1h-1zM726 200h1v1h-1zM747 200h1v1h-1zM826 200h2v1h-2zM869 200h1v1h-1zM871 200h1v1h-1zM300 201h1v1h-1zM363 201h1v1h-1zM375 201h1v1h-1zM379 201h1v1h-1zM397 201h1v1h-1zM400 201h3v1h-3zM514 201h1v1h-1zM536 201h1v1h-1zM559 201h1v1h-1zM573 201h1v1h-1zM579 201h5v1h-5zM586 201h1v1h-1zM614 201h1v1h-1zM618 201h1v1h-1zM634 201h1v1h-1zM647 201h1v1h-1zM674 201h1v1h-1zM702 201h1v1h-1zM707 201h1v1h-1zM726 201h1v1h-1zM747 201h1v1h-1zM828 201h1v1h-1zM868 201h1v1h-1zM872 201h1v1h-1zM300 202h1v1h-1zM363 202h1v1h-1zM374 202h1v1h-1zM379 202h1v1h-1zM397 202h1v1h-1zM403 202h1v1h-1zM471 202h1v1h-1zM509 202h5v1h-5zM536 202h1v1h-1zM558 202h1v1h-1zM574 202h1v1h-1zM579 202h1v1h-1zM584 202h3v1h-3zM614 202h1v1h-1zM618 202h1v1h-1zM634 202h1v1h-1zM646 202h1v1h-1zM675 202h1v1h-1zM702 202h3v1h-3zM706 202h1v1h-1zM727 202h1v1h-1zM747 202h1v1h-1zM829 202h1v1h-1zM867 202h1v1h-1zM873 202h1v1h-1zM300 203h1v1h-1zM363 203h1v1h-1zM374 203h1v1h-1zM380 203h1v1h-1zM396 203h1v1h-1zM404 203h1v1h-1zM471 203h3v1h-3zM497 203h1v1h-1zM509 203h1v1h-1zM537 203h1v1h-1zM558 203h1v1h-1zM574 203h1v1h-1zM579 203h1v1h-1zM614 203h1v1h-1zM617 203h1v1h-1zM634 203h1v1h-1zM645 203h1v1h-1zM675 203h1v1h-1zM701 203h1v1h-1zM705 203h2v1h-2zM727 203h1v1h-1zM747 203h1v1h-1zM830 203h1v1h-1zM866 203h1v1h-1zM874 203h1v1h-1zM300 204h1v1h-1zM363 204h1v1h-1zM373 204h1v1h-1zM380 204h1v1h-1zM396 204h1v1h-1zM404 204h1v1h-1zM470 204h1v1h-1zM474 204h1v1h-1zM496 204h1v1h-1zM498 204h1v1h-1zM508 204h1v1h-1zM537 204h1v1h-1zM552 204h2v1h-2zM557 204h1v1h-1zM575 204h1v1h-1zM579 204h1v1h-1zM615 204h2v1h-2zM635 204h1v1h-1zM645 204h1v1h-1zM675 204h1v1h-1zM701 204h1v1h-1zM727 204h1v1h-1zM747 204h1v1h-1zM830 204h1v1h-1zM866 204h1v1h-1zM875 204h1v1h-1zM224 205h1v1h-1zM300 205h1v1h-1zM364 205h1v1h-1zM373 205h1v1h-1zM380 205h1v1h-1zM396 205h1v1h-1zM405 205h1v1h-1zM470 205h1v1h-1zM474 205h1v1h-1zM496 205h1v1h-1zM498 205h1v1h-1zM508 205h1v1h-1zM538 205h1v1h-1zM552 205h1v1h-1zM554 205h3v1h-3zM575 205h1v1h-1zM579 205h1v1h-1zM615 205h1v1h-1zM636 205h1v1h-1zM645 205h1v1h-1zM675 205h1v1h-1zM701 205h1v1h-1zM727 205h1v1h-1zM747 205h1v1h-1zM831 205h1v1h-1zM865 205h1v1h-1zM875 205h1v1h-1zM222 206h2v1h-2zM225 206h1v1h-1zM299 206h1v1h-1zM364 206h1v1h-1zM373 206h1v1h-1zM380 206h1v1h-1zM396 206h1v1h-1zM406 206h2v1h-2zM469 206h1v1h-1zM475 206h1v1h-1zM495 206h1v1h-1zM499 206h1v1h-1zM507 206h1v1h-1zM538 206h1v1h-1zM552 206h1v1h-1zM575 206h1v1h-1zM579 206h1v1h-1zM636 206h1v1h-1zM644 206h1v1h-1zM675 206h1v1h-1zM701 206h1v1h-1zM727 206h1v1h-1zM747 206h1v1h-1zM831 206h1v1h-1zM865 206h1v1h-1zM876 206h1v1h-1zM220 207h2v1h-2zM226 207h1v1h-1zM299 207h1v1h-1zM364 207h1v1h-1zM372 207h1v1h-1zM380 207h1v1h-1zM396 207h1v1h-1zM408 207h1v1h-1zM469 207h1v1h-1zM475 207h1v1h-1zM495 207h1v1h-1zM500 207h1v1h-1zM507 207h1v1h-1zM539 207h1v1h-1zM552 207h1v1h-1zM576 207h1v1h-1zM579 207h1v1h-1zM637 207h1v1h-1zM644 207h1v1h-1zM675 207h1v1h-1zM700 207h1v1h-1zM727 207h1v1h-1zM747 207h1v1h-1zM832 207h1v1h-1zM864 207h1v1h-1zM876 207h1v1h-1zM889 207h1v1h-1zM218 208h2v1h-2zM227 208h1v1h-1zM299 208h1v1h-1zM364 208h1v1h-1zM372 208h1v1h-1zM380 208h1v1h-1zM396 208h1v1h-1zM408 208h1v1h-1zM468 208h1v1h-1zM476 208h1v1h-1zM494 208h1v1h-1zM501 208h1v1h-1zM506 208h1v1h-1zM540 208h1v1h-1zM551 208h1v1h-1zM576 208h1v1h-1zM578 208h1v1h-1zM637 208h1v1h-1zM644 208h1v1h-1zM676 208h1v1h-1zM700 208h1v1h-1zM727 208h1v1h-1zM747 208h1v1h-1zM832 208h2v1h-2zM864 208h1v1h-1zM877 208h1v1h-1zM888 208h1v1h-1zM890 208h1v1h-1zM136 209h1v1h-1zM217 209h1v1h-1zM228 209h1v1h-1zM299 209h1v1h-1zM364 209h1v1h-1zM371 209h1v1h-1zM381 209h1v1h-1zM395 209h1v1h-1zM408 209h1v1h-1zM462 209h2v1h-2zM468 209h1v1h-1zM476 209h1v1h-1zM494 209h1v1h-1zM501 209h1v1h-1zM506 209h1v1h-1zM541 209h1v1h-1zM551 209h1v1h-1zM577 209h2v1h-2zM637 209h1v1h-1zM644 209h1v1h-1zM676 209h1v1h-1zM700 209h1v1h-1zM727 209h1v1h-1zM746 209h1v1h-1zM834 209h2v1h-2zM863 209h1v1h-1zM877 209h1v1h-1zM887 209h1v1h-1zM891 209h1v1h-1zM135 210h1v1h-1zM137 210h1v1h-1zM217 210h1v1h-1zM229 210h1v1h-1zM299 210h1v1h-1zM364 210h1v1h-1zM371 210h1v1h-1zM381 210h1v1h-1zM395 210h1v1h-1zM409 210h1v1h-1zM457 210h5v1h-5zM463 210h1v1h-1zM467 210h1v1h-1zM477 210h1v1h-1zM493 210h1v1h-1zM502 210h1v1h-1zM505 210h1v1h-1zM541 210h1v1h-1zM551 210h1v1h-1zM577 210h2v1h-2zM637 210h1v1h-1zM644 210h1v1h-1zM676 210h1v1h-1zM699 210h1v1h-1zM727 210h1v1h-1zM746 210h1v1h-1zM836 210h2v1h-2zM863 210h1v1h-1zM878 210h1v1h-1zM887 210h1v1h-1zM892 210h2v1h-2zM134 211h1v1h-1zM137 211h1v1h-1zM216 211h1v1h-1zM230 211h1v1h-1zM299 211h1v1h-1zM364 211h1v1h-1zM370 211h1v1h-1zM381 211h1v1h-1zM395 211h1v1h-1zM409 211h1v1h-1zM456 211h1v1h-1zM464 211h1v1h-1zM467 211h1v1h-1zM477 211h1v1h-1zM493 211h1v1h-1zM503 211h1v1h-1zM505 211h1v1h-1zM542 211h1v1h-1zM551 211h1v1h-1zM577 211h2v1h-2zM637 211h1v1h-1zM643 211h1v1h-1zM677 211h2v1h-2zM699 211h1v1h-1zM727 211h1v1h-1zM746 211h1v1h-1zM838 211h1v1h-1zM863 211h1v1h-1zM879 211h1v1h-1zM886 211h1v1h-1zM894 211h2v1h-2zM133 212h1v1h-1zM138 212h1v1h-1zM216 212h1v1h-1zM231 212h1v1h-1zM298 212h1v1h-1zM364 212h1v1h-1zM370 212h1v1h-1zM381 212h1v1h-1zM395 212h1v1h-1zM409 212h1v1h-1zM455 212h1v1h-1zM464 212h3v1h-3zM478 212h1v1h-1zM492 212h1v1h-1zM504 212h1v1h-1zM542 212h1v1h-1zM551 212h1v1h-1zM578 212h1v1h-1zM637 212h1v1h-1zM643 212h1v1h-1zM679 212h2v1h-2zM690 212h1v1h-1zM698 212h1v1h-1zM727 212h1v1h-1zM746 212h1v1h-1zM838 212h1v1h-1zM862 212h1v1h-1zM880 212h1v1h-1zM883 212h3v1h-3zM896 212h2v1h-2zM132 213h1v1h-1zM139 213h1v1h-1zM215 213h1v1h-1zM232 213h1v1h-1zM298 213h1v1h-1zM364 213h1v1h-1zM369 213h1v1h-1zM382 213h1v1h-1zM394 213h1v1h-1zM409 213h1v1h-1zM454 213h1v1h-1zM464 213h1v1h-1zM478 213h1v1h-1zM492 213h1v1h-1zM543 213h1v1h-1zM551 213h1v1h-1zM578 213h1v1h-1zM638 213h1v1h-1zM643 213h1v1h-1zM681 213h1v1h-1zM690 213h3v1h-3zM698 213h1v1h-1zM727 213h1v1h-1zM746 213h1v1h-1zM839 213h1v1h-1zM862 213h1v1h-1zM881 213h2v1h-2zM898 213h1v1h-1zM908 213h1v1h-1zM132 214h1v1h-1zM139 214h1v1h-1zM215 214h1v1h-1zM233 214h1v1h-1zM298 214h1v1h-1zM364 214h1v1h-1zM368 214h1v1h-1zM383 214h1v1h-1zM394 214h1v1h-1zM409 214h1v1h-1zM453 214h1v1h-1zM479 214h1v1h-1zM491 214h1v1h-1zM543 214h1v1h-1zM551 214h1v1h-1zM638 214h1v1h-1zM643 214h1v1h-1zM681 214h1v1h-1zM689 214h1v1h-1zM693 214h1v1h-1zM697 214h1v1h-1zM728 214h1v1h-1zM745 214h1v1h-1zM839 214h1v1h-1zM861 214h1v1h-1zM898 214h1v1h-1zM907 214h1v1h-1zM132 215h1v1h-1zM140 215h1v1h-1zM214 215h1v1h-1zM234 215h1v1h-1zM293 215h1v1h-1zM298 215h1v1h-1zM365 215h1v1h-1zM368 215h1v1h-1zM383 215h1v1h-1zM393 215h1v1h-1zM410 215h1v1h-1zM452 215h1v1h-1zM479 215h1v1h-1zM491 215h1v1h-1zM543 215h1v1h-1zM551 215h1v1h-1zM638 215h1v1h-1zM643 215h1v1h-1zM682 215h1v1h-1zM689 215h1v1h-1zM694 215h1v1h-1zM696 215h1v1h-1zM728 215h1v1h-1zM744 215h1v1h-1zM839 215h1v1h-1zM861 215h1v1h-1zM899 215h1v1h-1zM906 215h1v1h-1zM131 216h1v1h-1zM140 216h1v1h-1zM214 216h1v1h-1zM235 216h1v1h-1zM292 216h1v1h-1zM294 216h1v1h-1zM298 216h1v1h-1zM365 216h1v1h-1zM367 216h1v1h-1zM384 216h1v1h-1zM393 216h1v1h-1zM410 216h1v1h-1zM452 216h1v1h-1zM479 216h1v1h-1zM490 216h1v1h-1zM544 216h1v1h-1zM550 216h1v1h-1zM638 216h1v1h-1zM640 216h1v1h-1zM642 216h1v1h-1zM682 216h1v1h-1zM688 216h1v1h-1zM694 216h1v1h-1zM696 216h1v1h-1zM728 216h1v1h-1zM743 216h1v1h-1zM840 216h1v1h-1zM860 216h1v1h-1zM899 216h1v1h-1zM906 216h1v1h-1zM131 217h1v1h-1zM141 217h1v1h-1zM214 217h1v1h-1zM236 217h1v1h-1zM291 217h1v1h-1zM295 217h1v1h-1zM298 217h1v1h-1zM365 217h2v1h-2zM385 217h1v1h-1zM392 217h1v1h-1zM410 217h1v1h-1zM452 217h1v1h-1zM479 217h1v1h-1zM490 217h1v1h-1zM544 217h1v1h-1zM550 217h1v1h-1zM638 217h2v1h-2zM641 217h2v1h-2zM683 217h1v1h-1zM688 217h1v1h-1zM695 217h1v1h-1zM728 217h1v1h-1zM743 217h1v1h-1zM840 217h1v1h-1zM860 217h1v1h-1zM900 217h1v1h-1zM905 217h1v1h-1zM131 218h1v1h-1zM141 218h1v1h-1zM169 218h1v1h-1zM213 218h1v1h-1zM237 218h1v1h-1zM290 218h1v1h-1zM295 218h1v1h-1zM297 218h1v1h-1zM365 218h2v1h-2zM385 218h1v1h-1zM392 218h1v1h-1zM410 218h1v1h-1zM451 218h1v1h-1zM479 218h1v1h-1zM490 218h1v1h-1zM545 218h1v1h-1zM550 218h1v1h-1zM638 218h1v1h-1zM642 218h1v1h-1zM683 218h1v1h-1zM687 218h1v1h-1zM728 218h1v1h-1zM742 218h1v1h-1zM840 218h1v1h-1zM859 218h1v1h-1zM900 218h1v1h-1zM903 218h2v1h-2zM131 219h1v1h-1zM141 219h1v1h-1zM168 219h1v1h-1zM170 219h2v1h-2zM213 219h1v1h-1zM238 219h1v1h-1zM289 219h1v1h-1zM296 219h2v1h-2zM365 219h1v1h-1zM385 219h1v1h-1zM391 219h1v1h-1zM410 219h1v1h-1zM451 219h1v1h-1zM480 219h1v1h-1zM489 219h1v1h-1zM545 219h1v1h-1zM550 219h1v1h-1zM683 219h1v1h-1zM686 219h1v1h-1zM728 219h1v1h-1zM742 219h1v1h-1zM840 219h1v1h-1zM859 219h1v1h-1zM901 219h2v1h-2zM130 220h1v1h-1zM142 220h1v1h-1zM168 220h1v1h-1zM172 220h1v1h-1zM213 220h1v1h-1zM239 220h1v1h-1zM288 220h1v1h-1zM297 220h1v1h-1zM386 220h1v1h-1zM391 220h1v1h-1zM410 220h1v1h-1zM451 220h1v1h-1zM480 220h1v1h-1zM489 220h1v1h-1zM546 220h1v1h-1zM550 220h1v1h-1zM684 220h2v1h-2zM728 220h1v1h-1zM742 220h1v1h-1zM840 220h1v1h-1zM858 220h1v1h-1zM130 221h1v1h-1zM142 221h1v1h-1zM167 221h1v1h-1zM172 221h1v1h-1zM212 221h1v1h-1zM239 221h1v1h-1zM287 221h1v1h-1zM386 221h1v1h-1zM390 221h1v1h-1zM411 221h1v1h-1zM451 221h1v1h-1zM480 221h1v1h-1zM489 221h1v1h-1zM546 221h1v1h-1zM550 221h1v1h-1zM684 221h1v1h-1zM728 221h1v1h-1zM741 221h1v1h-1zM841 221h1v1h-1zM858 221h1v1h-1zM130 222h1v1h-1zM142 222h1v1h-1zM167 222h1v1h-1zM173 222h1v1h-1zM212 222h1v1h-1zM240 222h1v1h-1zM287 222h1v1h-1zM386 222h1v1h-1zM390 222h1v1h-1zM411 222h1v1h-1zM451 222h1v1h-1zM480 222h1v1h-1zM488 222h1v1h-1zM547 222h1v1h-1zM550 222h1v1h-1zM729 222h1v1h-1zM737 222h2v1h-2zM741 222h1v1h-1zM841 222h1v1h-1zM857 222h1v1h-1zM130 223h1v1h-1zM142 223h1v1h-1zM167 223h1v1h-1zM173 223h1v1h-1zM212 223h1v1h-1zM240 223h1v1h-1zM287 223h1v1h-1zM386 223h2v1h-2zM389 223h1v1h-1zM411 223h1v1h-1zM450 223h1v1h-1zM480 223h1v1h-1zM488 223h1v1h-1zM547 223h1v1h-1zM549 223h1v1h-1zM729 223h1v1h-1zM735 223h2v1h-2zM739 223h2v1h-2zM841 223h1v1h-1zM857 223h1v1h-1zM129 224h1v1h-1zM143 224h1v1h-1zM166 224h1v1h-1zM173 224h1v1h-1zM212 224h1v1h-1zM241 224h1v1h-1zM286 224h1v1h-1zM388 224h2v1h-2zM412 224h2v1h-2zM450 224h1v1h-1zM480 224h1v1h-1zM487 224h1v1h-1zM548 224h2v1h-2zM729 224h1v1h-1zM735 224h1v1h-1zM740 224h1v1h-1zM841 224h1v1h-1zM856 224h1v1h-1zM129 225h1v1h-1zM143 225h1v1h-1zM166 225h1v1h-1zM174 225h1v1h-1zM211 225h1v1h-1zM241 225h1v1h-1zM286 225h1v1h-1zM414 225h2v1h-2zM450 225h1v1h-1zM480 225h1v1h-1zM487 225h1v1h-1zM548 225h2v1h-2zM730 225h1v1h-1zM734 225h1v1h-1zM841 225h1v1h-1zM855 225h1v1h-1zM129 226h1v1h-1zM143 226h1v1h-1zM166 226h1v1h-1zM174 226h1v1h-1zM211 226h1v1h-1zM242 226h1v1h-1zM286 226h1v1h-1zM415 226h1v1h-1zM449 226h1v1h-1zM481 226h1v1h-1zM486 226h1v1h-1zM549 226h1v1h-1zM730 226h2v1h-2zM734 226h1v1h-1zM841 226h1v1h-1zM855 226h1v1h-1zM129 227h1v1h-1zM144 227h1v1h-1zM166 227h1v1h-1zM174 227h1v1h-1zM211 227h1v1h-1zM242 227h1v1h-1zM286 227h1v1h-1zM415 227h1v1h-1zM449 227h1v1h-1zM481 227h1v1h-1zM485 227h1v1h-1zM732 227h2v1h-2zM842 227h1v1h-1zM854 227h1v1h-1zM128 228h1v1h-1zM144 228h1v1h-1zM165 228h1v1h-1zM174 228h1v1h-1zM210 228h1v1h-1zM243 228h1v1h-1zM285 228h1v1h-1zM416 228h1v1h-1zM448 228h1v1h-1zM481 228h1v1h-1zM485 228h1v1h-1zM842 228h1v1h-1zM847 228h5v1h-5zM854 228h1v1h-1zM128 229h1v1h-1zM144 229h1v1h-1zM165 229h1v1h-1zM175 229h1v1h-1zM210 229h1v1h-1zM243 229h1v1h-1zM285 229h1v1h-1zM416 229h1v1h-1zM448 229h1v1h-1zM481 229h1v1h-1zM485 229h1v1h-1zM842 229h1v1h-1zM846 229h1v1h-1zM852 229h2v1h-2zM128 230h1v1h-1zM144 230h1v1h-1zM165 230h1v1h-1zM175 230h1v1h-1zM210 230h1v1h-1zM243 230h1v1h-1zM285 230h1v1h-1zM416 230h1v1h-1zM447 230h1v1h-1zM481 230h1v1h-1zM485 230h1v1h-1zM842 230h1v1h-1zM846 230h1v1h-1zM128 231h1v1h-1zM144 231h1v1h-1zM165 231h1v1h-1zM175 231h1v1h-1zM209 231h1v1h-1zM244 231h1v1h-1zM285 231h1v1h-1zM416 231h1v1h-1zM447 231h1v1h-1zM481 231h1v1h-1zM485 231h1v1h-1zM842 231h1v1h-1zM845 231h1v1h-1zM127 232h1v1h-1zM144 232h1v1h-1zM164 232h1v1h-1zM175 232h1v1h-1zM209 232h1v1h-1zM244 232h1v1h-1zM285 232h1v1h-1zM417 232h1v1h-1zM446 232h1v1h-1zM481 232h1v1h-1zM485 232h1v1h-1zM843 232h2v1h-2zM127 233h1v1h-1zM145 233h1v1h-1zM164 233h1v1h-1zM176 233h1v1h-1zM209 233h1v1h-1zM244 233h1v1h-1zM284 233h1v1h-1zM417 233h1v1h-1zM445 233h1v1h-1zM482 233h1v1h-1zM485 233h1v1h-1zM843 233h2v1h-2zM127 234h1v1h-1zM145 234h1v1h-1zM164 234h1v1h-1zM176 234h1v1h-1zM209 234h1v1h-1zM245 234h1v1h-1zM284 234h1v1h-1zM417 234h1v1h-1zM445 234h1v1h-1zM482 234h1v1h-1zM485 234h1v1h-1zM843 234h1v1h-1zM127 235h1v1h-1zM145 235h1v1h-1zM164 235h1v1h-1zM176 235h1v1h-1zM208 235h1v1h-1zM245 235h1v1h-1zM284 235h1v1h-1zM417 235h1v1h-1zM444 235h1v1h-1zM482 235h1v1h-1zM485 235h1v1h-1zM126 236h1v1h-1zM145 236h1v1h-1zM164 236h1v1h-1zM176 236h1v1h-1zM208 236h1v1h-1zM245 236h1v1h-1zM284 236h1v1h-1zM418 236h1v1h-1zM444 236h1v1h-1zM482 236h1v1h-1zM485 236h1v1h-1zM126 237h1v1h-1zM145 237h1v1h-1zM164 237h1v1h-1zM176 237h1v1h-1zM208 237h1v1h-1zM246 237h1v1h-1zM283 237h1v1h-1zM418 237h1v1h-1zM440 237h4v1h-4zM482 237h1v1h-1zM485 237h1v1h-1zM126 238h1v1h-1zM145 238h1v1h-1zM163 238h1v1h-1zM176 238h1v1h-1zM208 238h1v1h-1zM246 238h1v1h-1zM283 238h1v1h-1zM418 238h1v1h-1zM440 238h1v1h-1zM483 238h1v1h-1zM485 238h1v1h-1zM126 239h1v1h-1zM145 239h1v1h-1zM163 239h1v1h-1zM177 239h1v1h-1zM208 239h1v1h-1zM246 239h1v1h-1zM283 239h1v1h-1zM418 239h1v1h-1zM439 239h1v1h-1zM483 239h1v1h-1zM485 239h1v1h-1zM125 240h1v1h-1zM145 240h1v1h-1zM163 240h1v1h-1zM177 240h1v1h-1zM207 240h1v1h-1zM246 240h1v1h-1zM283 240h1v1h-1zM419 240h1v1h-1zM439 240h1v1h-1zM483 240h1v1h-1zM485 240h1v1h-1zM125 241h1v1h-1zM145 241h1v1h-1zM163 241h1v1h-1zM177 241h1v1h-1zM207 241h1v1h-1zM247 241h1v1h-1zM283 241h1v1h-1zM419 241h1v1h-1zM438 241h1v1h-1zM483 241h1v1h-1zM485 241h1v1h-1zM124 242h1v1h-1zM145 242h1v1h-1zM163 242h1v1h-1zM177 242h1v1h-1zM207 242h1v1h-1zM247 242h1v1h-1zM282 242h1v1h-1zM419 242h1v1h-1zM438 242h1v1h-1zM483 242h1v1h-1zM485 242h1v1h-1zM124 243h1v1h-1zM146 243h1v1h-1zM163 243h1v1h-1zM177 243h1v1h-1zM207 243h1v1h-1zM247 243h1v1h-1zM282 243h1v1h-1zM419 243h1v1h-1zM437 243h1v1h-1zM483 243h1v1h-1zM485 243h1v1h-1zM123 244h1v1h-1zM146 244h1v1h-1zM162 244h1v1h-1zM177 244h1v1h-1zM206 244h1v1h-1zM247 244h1v1h-1zM282 244h1v1h-1zM420 244h1v1h-1zM437 244h1v1h-1zM483 244h1v1h-1zM485 244h1v1h-1zM122 245h1v1h-1zM146 245h1v1h-1zM162 245h1v1h-1zM178 245h1v1h-1zM206 245h1v1h-1zM247 245h1v1h-1zM272 245h2v1h-2zM282 245h1v1h-1zM420 245h1v1h-1zM437 245h1v1h-1zM484 245h2v1h-2zM122 246h1v1h-1zM146 246h1v1h-1zM162 246h1v1h-1zM178 246h1v1h-1zM206 246h1v1h-1zM248 246h1v1h-1zM270 246h2v1h-2zM274 246h1v1h-1zM281 246h1v1h-1zM420 246h1v1h-1zM436 246h1v1h-1zM484 246h1v1h-1zM78 247h4v1h-4zM121 247h1v1h-1zM146 247h1v1h-1zM162 247h1v1h-1zM178 247h1v1h-1zM206 247h1v1h-1zM248 247h1v1h-1zM268 247h2v1h-2zM274 247h1v1h-1zM281 247h1v1h-1zM420 247h1v1h-1zM436 247h1v1h-1zM484 247h1v1h-1zM76 248h2v1h-2zM82 248h4v1h-4zM120 248h1v1h-1zM146 248h1v1h-1zM162 248h1v1h-1zM178 248h1v1h-1zM206 248h1v1h-1zM248 248h1v1h-1zM267 248h1v1h-1zM275 248h1v1h-1zM281 248h1v1h-1zM421 248h1v1h-1zM435 248h1v1h-1zM484 248h1v1h-1zM74 249h2v1h-2zM86 249h1v1h-1zM119 249h1v1h-1zM146 249h1v1h-1zM162 249h1v1h-1zM178 249h1v1h-1zM205 249h1v1h-1zM248 249h1v1h-1zM267 249h1v1h-1zM275 249h1v1h-1zM281 249h1v1h-1zM421 249h1v1h-1zM435 249h1v1h-1zM484 249h1v1h-1zM72 250h2v1h-2zM87 250h1v1h-1zM119 250h1v1h-1zM146 250h1v1h-1zM162 250h1v1h-1zM178 250h1v1h-1zM205 250h1v1h-1zM248 250h1v1h-1zM266 250h1v1h-1zM275 250h1v1h-1zM281 250h1v1h-1zM421 250h1v1h-1zM434 250h1v1h-1zM484 250h1v1h-1zM70 251h2v1h-2zM87 251h1v1h-1zM118 251h1v1h-1zM146 251h1v1h-1zM162 251h1v1h-1zM178 251h1v1h-1zM205 251h1v1h-1zM248 251h1v1h-1zM266 251h1v1h-1zM276 251h1v1h-1zM280 251h1v1h-1zM421 251h1v1h-1zM434 251h1v1h-1zM484 251h1v1h-1zM65 252h5v1h-5zM88 252h1v1h-1zM117 252h1v1h-1zM146 252h1v1h-1zM161 252h1v1h-1zM178 252h1v1h-1zM205 252h1v1h-1zM248 252h1v1h-1zM265 252h1v1h-1zM276 252h1v1h-1zM280 252h1v1h-1zM422 252h1v1h-1zM434 252h1v1h-1zM62 253h3v1h-3zM89 253h1v1h-1zM117 253h1v1h-1zM146 253h1v1h-1zM161 253h1v1h-1zM179 253h1v1h-1zM204 253h1v1h-1zM248 253h1v1h-1zM265 253h1v1h-1zM276 253h1v1h-1zM280 253h1v1h-1zM422 253h1v1h-1zM433 253h1v1h-1zM90 254h1v1h-1zM116 254h1v1h-1zM146 254h1v1h-1zM161 254h1v1h-1zM179 254h1v1h-1zM204 254h1v1h-1zM249 254h1v1h-1zM264 254h1v1h-1zM276 254h1v1h-1zM280 254h1v1h-1zM423 254h1v1h-1zM433 254h1v1h-1zM91 255h1v1h-1zM115 255h1v1h-1zM147 255h1v1h-1zM161 255h1v1h-1zM179 255h1v1h-1zM204 255h1v1h-1zM249 255h1v1h-1zM264 255h1v1h-1zM276 255h1v1h-1zM280 255h1v1h-1zM423 255h1v1h-1zM433 255h1v1h-1zM92 256h1v1h-1zM115 256h1v1h-1zM147 256h1v1h-1zM161 256h1v1h-1zM179 256h1v1h-1zM204 256h1v1h-1zM249 256h1v1h-1zM264 256h1v1h-1zM276 256h1v1h-1zM280 256h1v1h-1zM423 256h1v1h-1zM433 256h1v1h-1zM92 257h1v1h-1zM114 257h1v1h-1zM147 257h1v1h-1zM161 257h1v1h-1zM179 257h1v1h-1zM203 257h1v1h-1zM249 257h1v1h-1zM264 257h1v1h-1zM277 257h1v1h-1zM279 257h1v1h-1zM424 257h1v1h-1zM430 257h1v1h-1zM432 257h1v1h-1zM93 258h1v1h-1zM113 258h1v1h-1zM147 258h1v1h-1zM161 258h1v1h-1zM179 258h1v1h-1zM203 258h1v1h-1zM249 258h1v1h-1zM264 258h1v1h-1zM277 258h1v1h-1zM279 258h1v1h-1zM424 258h1v1h-1zM429 258h1v1h-1zM431 258h2v1h-2zM94 259h1v1h-1zM113 259h1v1h-1zM147 259h1v1h-1zM161 259h1v1h-1zM179 259h1v1h-1zM203 259h1v1h-1zM249 259h1v1h-1zM264 259h1v1h-1zM277 259h1v1h-1zM279 259h1v1h-1zM424 259h1v1h-1zM429 259h1v1h-1zM95 260h1v1h-1zM112 260h1v1h-1zM147 260h1v1h-1zM161 260h1v1h-1zM179 260h1v1h-1zM203 260h1v1h-1zM249 260h1v1h-1zM264 260h1v1h-1zM277 260h1v1h-1zM279 260h1v1h-1zM425 260h1v1h-1zM428 260h1v1h-1zM96 261h1v1h-1zM111 261h1v1h-1zM147 261h1v1h-1zM161 261h1v1h-1zM179 261h1v1h-1zM202 261h1v1h-1zM249 261h1v1h-1zM264 261h1v1h-1zM277 261h1v1h-1zM279 261h1v1h-1zM425 261h1v1h-1zM427 261h1v1h-1zM96 262h1v1h-1zM111 262h1v1h-1zM147 262h1v1h-1zM160 262h1v1h-1zM179 262h1v1h-1zM202 262h1v1h-1zM249 262h1v1h-1zM264 262h1v1h-1zM277 262h1v1h-1zM279 262h1v1h-1zM426 262h2v1h-2zM97 263h1v1h-1zM109 263h2v1h-2zM147 263h1v1h-1zM160 263h1v1h-1zM179 263h1v1h-1zM202 263h1v1h-1zM249 263h1v1h-1zM264 263h1v1h-1zM278 263h1v1h-1zM426 263h1v1h-1zM98 264h2v1h-2zM107 264h2v1h-2zM147 264h1v1h-1zM160 264h1v1h-1zM179 264h1v1h-1zM202 264h1v1h-1zM250 264h1v1h-1zM264 264h1v1h-1zM278 264h1v1h-1zM100 265h3v1h-3zM105 265h2v1h-2zM147 265h1v1h-1zM160 265h1v1h-1zM180 265h1v1h-1zM201 265h1v1h-1zM250 265h1v1h-1zM264 265h1v1h-1zM278 265h1v1h-1zM103 266h2v1h-2zM147 266h1v1h-1zM160 266h1v1h-1zM180 266h1v1h-1zM201 266h1v1h-1zM250 266h1v1h-1zM263 266h1v1h-1zM147 267h1v1h-1zM160 267h1v1h-1zM180 267h1v1h-1zM201 267h1v1h-1zM250 267h1v1h-1zM263 267h1v1h-1zM147 268h1v1h-1zM160 268h1v1h-1zM180 268h1v1h-1zM201 268h1v1h-1zM250 268h1v1h-1zM263 268h1v1h-1zM148 269h1v1h-1zM160 269h1v1h-1zM180 269h1v1h-1zM200 269h1v1h-1zM250 269h1v1h-1zM263 269h1v1h-1zM148 270h1v1h-1zM160 270h1v1h-1zM180 270h1v1h-1zM200 270h1v1h-1zM250 270h1v1h-1zM263 270h1v1h-1zM148 271h1v1h-1zM160 271h1v1h-1zM180 271h1v1h-1zM199 271h1v1h-1zM250 271h1v1h-1zM263 271h1v1h-1zM148 272h1v1h-1zM159 272h1v1h-1zM180 272h1v1h-1zM199 272h1v1h-1zM250 272h1v1h-1zM263 272h1v1h-1zM148 273h1v1h-1zM159 273h1v1h-1zM180 273h1v1h-1zM198 273h1v1h-1zM250 273h1v1h-1zM263 273h1v1h-1zM148 274h1v1h-1zM159 274h1v1h-1zM180 274h1v1h-1zM197 274h1v1h-1zM250 274h1v1h-1zM263 274h1v1h-1zM148 275h1v1h-1zM159 275h1v1h-1zM180 275h1v1h-1zM197 275h1v1h-1zM251 275h1v1h-1zM263 275h1v1h-1zM148 276h1v1h-1zM159 276h1v1h-1zM180 276h1v1h-1zM196 276h1v1h-1zM251 276h1v1h-1zM263 276h1v1h-1zM148 277h1v1h-1zM159 277h1v1h-1zM181 277h1v1h-1zM195 277h1v1h-1zM251 277h1v1h-1zM263 277h1v1h-1zM148 278h1v1h-1zM159 278h1v1h-1zM181 278h1v1h-1zM195 278h1v1h-1zM251 278h1v1h-1zM263 278h1v1h-1zM148 279h1v1h-1zM159 279h1v1h-1zM181 279h1v1h-1zM194 279h1v1h-1zM251 279h1v1h-1zM263 279h1v1h-1zM148 280h1v1h-1zM159 280h1v1h-1zM181 280h1v1h-1zM194 280h1v1h-1zM251 280h1v1h-1zM263 280h1v1h-1zM148 281h1v1h-1zM158 281h1v1h-1zM181 281h1v1h-1zM193 281h1v1h-1zM252 281h1v1h-1zM262 281h1v1h-1zM149 282h1v1h-1zM158 282h1v1h-1zM181 282h1v1h-1zM193 282h1v1h-1zM252 282h1v1h-1zM262 282h1v1h-1zM149 283h1v1h-1zM158 283h1v1h-1zM181 283h1v1h-1zM192 283h1v1h-1zM253 283h1v1h-1zM262 283h1v1h-1zM149 284h1v1h-1zM158 284h1v1h-1zM181 284h1v1h-1zM192 284h1v1h-1zM254 284h1v1h-1zM262 284h1v1h-1zM149 285h1v1h-1zM158 285h1v1h-1zM181 285h1v1h-1zM191 285h1v1h-1zM254 285h1v1h-1zM262 285h1v1h-1zM149 286h1v1h-1zM158 286h1v1h-1zM181 286h1v1h-1zM191 286h1v1h-1zM255 286h1v1h-1zM262 286h1v1h-1zM149 287h1v1h-1zM158 287h1v1h-1zM182 287h1v1h-1zM190 287h1v1h-1zM255 287h1v1h-1zM262 287h1v1h-1zM149 288h1v1h-1zM158 288h1v1h-1zM182 288h1v1h-1zM190 288h1v1h-1zM255 288h1v1h-1zM262 288h1v1h-1zM149 289h1v1h-1zM158 289h1v1h-1zM182 289h1v1h-1zM189 289h1v1h-1zM256 289h1v1h-1zM262 289h1v1h-1zM149 290h1v1h-1zM157 290h1v1h-1zM182 290h1v1h-1zM189 290h1v1h-1zM256 290h1v1h-1zM262 290h1v1h-1zM149 291h1v1h-1zM157 291h1v1h-1zM182 291h1v1h-1zM189 291h1v1h-1zM256 291h1v1h-1zM261 291h1v1h-1zM149 292h1v1h-1zM157 292h1v1h-1zM182 292h1v1h-1zM188 292h1v1h-1zM256 292h1v1h-1zM261 292h1v1h-1zM149 293h1v1h-1zM157 293h1v1h-1zM182 293h1v1h-1zM188 293h1v1h-1zM257 293h1v1h-1zM261 293h1v1h-1zM149 294h1v1h-1zM157 294h1v1h-1zM182 294h1v1h-1zM188 294h1v1h-1zM257 294h1v1h-1zM261 294h1v1h-1zM149 295h1v1h-1zM157 295h1v1h-1zM182 295h1v1h-1zM187 295h1v1h-1zM257 295h1v1h-1zM261 295h1v1h-1zM150 296h1v1h-1zM157 296h1v1h-1zM182 296h1v1h-1zM187 296h1v1h-1zM257 296h1v1h-1zM260 296h1v1h-1zM150 297h1v1h-1zM157 297h1v1h-1zM183 297h1v1h-1zM187 297h1v1h-1zM258 297h1v1h-1zM260 297h1v1h-1zM150 298h1v1h-1zM157 298h1v1h-1zM183 298h1v1h-1zM186 298h1v1h-1zM258 298h2v1h-2zM150 299h1v1h-1zM156 299h1v1h-1zM183 299h1v1h-1zM186 299h1v1h-1zM258 299h1v1h-1zM150 300h1v1h-1zM156 300h1v1h-1zM183 300h1v1h-1zM186 300h1v1h-1zM150 301h1v1h-1zM156 301h1v1h-1zM183 301h1v1h-1zM185 301h1v1h-1zM150 302h1v1h-1zM156 302h1v1h-1zM183 302h1v1h-1zM185 302h1v1h-1zM150 303h1v1h-1zM156 303h1v1h-1zM183 303h1v1h-1zM185 303h1v1h-1zM150 304h1v1h-1zM156 304h1v1h-1zM183 304h1v1h-1zM185 304h1v1h-1zM150 305h1v1h-1zM156 305h1v1h-1zM183 305h1v1h-1zM185 305h1v1h-1zM150 306h1v1h-1zM156 306h1v1h-1zM184 306h2v1h-2zM151 307h1v1h-1zM156 307h1v1h-1zM184 307h1v1h-1zM151 308h1v1h-1zM156 308h1v1h-1zM184 308h1v1h-1zM151 309h1v1h-1zM156 309h1v1h-1zM184 309h1v1h-1zM151 310h1v1h-1zM156 310h1v1h-1zM184 310h1v1h-1zM151 311h1v1h-1zM156 311h1v1h-1zM151 312h1v1h-1zM155 312h1v1h-1zM151 313h1v1h-1zM155 313h1v1h-1zM151 314h1v1h-1zM155 314h1v1h-1zM151 315h1v1h-1zM155 315h1v1h-1zM152 316h1v1h-1zM155 316h1v1h-1zM152 317h1v1h-1zM155 317h1v1h-1zM152 318h1v1h-1zM155 318h1v1h-1zM152 319h1v1h-1zM155 319h1v1h-1zM152 320h4v1h-4z" fill="#ffffc0"/></g></svg>
<div class="a lbl" style="right:912px;top:79px;color:#ffffc0;font-size:11px;line-height:12px">60.0</div>
<div class="a lbl" style="right:912px;top:121px;color:#ffffc0;font-size:11px;line-height:12px">dBSPL</div>
<div class="a lbl" style="right:912px;top:161px;color:#ffffc0;font-size:11px;line-height:12px">50.0</div>
<div class="a lbl" style="right:912px;top:244px;color:#ffffc0;font-size:11px;line-height:12px">40.0</div>
<div class="a lbl" style="left:915px;top:79px;color:#fff;font-size:11px;line-height:12px">180.0</div>
<div class="a lbl" style="left:915px;top:121px;color:#fff;font-size:11px;line-height:12px">Deg</div>
<div class="a lbl" style="left:915px;top:161px;color:#fff;font-size:11px;line-height:12px">108.0</div>
<div class="a lbl" style="left:915px;top:244px;color:#fff;font-size:11px;line-height:12px">36.0</div>
<div class="a" style="left:4px;top:303px;width:965px;height:537px;background:#d4d0c8;"></div>
<div class="a" style="left:5px;top:304px;width:964px;height:1px;background:#fff;"></div>
<div class="a" style="left:5px;top:304px;width:1px;height:536px;background:#fff;"></div>
<div class="a" style="left:968px;top:304px;width:1px;height:536px;background:#808080;"></div>
<div class="a" style="left:8px;top:307px;width:958px;height:18px;background:linear-gradient(to right,#0a246a,#a6caf0);"></div>
<div class="a title" style="left:27px;top:307px;color:#fff;letter-spacing:0.6px;margin-left:-1px">RTA - 1/6 OCTAVE</div>
<svg class="a" style="left:10px;top:308px" width="16" height="16" shape-rendering="crispEdges"><rect x="0" y="0" width="16" height="1" fill="#000"/><rect x="0" y="1" width="1" height="1" fill="#000"/><rect x="1" y="1" width="3" height="1" fill="#fff"/><rect x="4" y="1" width="2" height="1" fill="#000"/><rect x="6" y="1" width="2" height="1" fill="#fff"/><rect x="8" y="1" width="2" height="1" fill="#000"/><rect x="10" y="1" width="5" height="1" fill="#fff"/><rect x="15" y="1" width="1" height="1" fill="#000"/><rect x="0" y="2" width="1" height="1" fill="#000"/><rect x="1" y="2" width="2" height="1" fill="#fff"/><rect x="3" y="2" width="1" height="1" fill="#000"/><rect x="4" y="2" width="3" height="1" fill="#fff"/><rect x="7" y="2" width="1" height="1" fill="#000"/><rect x="8" y="2" width="7" height="1" fill="#fff"/><rect x="15" y="2" width="1" height="1" fill="#000"/><rect x="0" y="3" width="1" height="1" fill="#000"/><rect x="1" y="3" width="2" height="1" fill="#fff"/><rect x="3" y="3" width="1" height="1" fill="#000"/><rect x="4" y="3" width="3" height="1" fill="#fff"/><rect x="7" y="3" width="1" height="1" fill="#000"/><rect x="8" y="3" width="3" height="1" fill="#fff"/><rect x="11" y="3" width="1" height="1" fill="#000"/><rect x="12" y="3" width="3" height="1" fill="#fff"/><rect x="15" y="3" width="1" height="1" fill="#000"/><rect x="0" y="4" width="1" height="1" fill="#000"/><rect x="1" y="4" width="1" height="1" fill="#fff"/><rect x="2" y="4" width="3" height="1" fill="#000"/><rect x="5" y="4" width="1" height="1" fill="#fff"/><rect x="6" y="4" width="3" height="1" fill="#000"/><rect x="9" y="4" width="1" height="1" fill="#fff"/><rect x="10" y="4" width="4" height="1" fill="#000"/><rect x="14" y="4" width="1" height="1" fill="#fff"/><rect x="15" y="4" width="1" height="1" fill="#000"/><rect x="0" y="5" width="1" height="1" fill="#000"/><rect x="1" y="5" width="2" height="1" fill="#fff"/><rect x="3" y="5" width="1" height="1" fill="#000"/><rect x="4" y="5" width="3" height="1" fill="#fff"/><rect x="7" y="5" width="1" height="1" fill="#000"/><rect x="8" y="5" width="3" height="1" fill="#fff"/><rect x="11" y="5" width="1" height="1" fill="#000"/><rect x="12" y="5" width="3" height="1" fill="#fff"/><rect x="15" y="5" width="1" height="1" fill="#000"/><rect x="0" y="6" width="1" height="1" fill="#000"/><rect x="1" y="6" width="2" height="1" fill="#fff"/><rect x="3" y="6" width="1" height="1" fill="#000"/><rect x="4" y="6" width="3" height="1" fill="#fff"/><rect x="7" y="6" width="1" height="1" fill="#000"/><rect x="8" y="6" width="3" height="1" fill="#fff"/><rect x="11" y="6" width="1" height="1" fill="#000"/><rect x="12" y="6" width="3" height="1" fill="#fff"/><rect x="15" y="6" width="1" height="1" fill="#000"/><rect x="0" y="7" width="1" height="1" fill="#000"/><rect x="1" y="7" width="2" height="1" fill="#fff"/><rect x="3" y="7" width="1" height="1" fill="#000"/><rect x="4" y="7" width="3" height="1" fill="#fff"/><rect x="7" y="7" width="1" height="1" fill="#000"/><rect x="8" y="7" width="3" height="1" fill="#fff"/><rect x="11" y="7" width="1" height="1" fill="#000"/><rect x="12" y="7" width="3" height="1" fill="#fff"/><rect x="15" y="7" width="1" height="1" fill="#000"/><rect x="0" y="8" width="1" height="1" fill="#000"/><rect x="1" y="8" width="2" height="1" fill="#fff"/><rect x="3" y="8" width="1" height="1" fill="#000"/><rect x="4" y="8" width="3" height="1" fill="#fff"/><rect x="7" y="8" width="1" height="1" fill="#000"/><rect x="8" y="8" width="4" height="1" fill="#fff"/><rect x="12" y="8" width="2" height="1" fill="#000"/><rect x="14" y="8" width="1" height="1" fill="#fff"/><rect x="15" y="8" width="1" height="1" fill="#000"/><rect x="0" y="9" width="1" height="1" fill="#000"/><rect x="1" y="9" width="4" height="1" fill="#ff0000"/><rect x="5" y="9" width="4" height="1" fill="#fff"/><rect x="9" y="9" width="2" height="1" fill="#ff0000"/><rect x="11" y="9" width="4" height="1" fill="#fff"/><rect x="15" y="9" width="1" height="1" fill="#000"/><rect x="0" y="10" width="1" height="1" fill="#000"/><rect x="1" y="10" width="3" height="1" fill="#fff"/><rect x="4" y="10" width="3" height="1" fill="#000"/><rect x="7" y="10" width="2" height="1" fill="#fff"/><rect x="9" y="10" width="1" height="1" fill="#ff0000"/><rect x="10" y="10" width="2" height="1" fill="#000"/><rect x="12" y="10" width="3" height="1" fill="#fff"/><rect x="15" y="10" width="1" height="1" fill="#000"/><rect x="0" y="11" width="4" height="1" fill="#000"/><rect x="4" y="11" width="1" height="1" fill="#fff"/><rect x="5" y="11" width="1" height="1" fill="#ff0000"/><rect x="6" y="11" width="1" height="1" fill="#fff"/><rect x="7" y="11" width="3" height="1" fill="#000"/><rect x="10" y="11" width="1" height="1" fill="#fff"/><rect x="11" y="11" width="1" height="1" fill="#ff0000"/><rect x="12" y="11" width="1" height="1" fill="#000"/><rect x="13" y="11" width="2" height="1" fill="#fff"/><rect x="15" y="11" width="1" height="1" fill="#000"/><rect x="0" y="12" width="1" height="1" fill="#000"/><rect x="1" y="12" width="5" height="1" fill="#fff"/><rect x="6" y="12" width="1" height="1" fill="#ff0000"/><rect x="7" y="12" width="2" height="1" fill="#fff"/><rect x="9" y="12" width="1" height="1" fill="#ff0000"/><rect x="10" y="12" width="2" height="1" fill="#fff"/><rect x="12" y="12" width="2" height="1" fill="#000"/><rect x="14" y="12" width="1" height="1" fill="#ff0000"/><rect x="15" y="12" width="1" height="1" fill="#000"/><rect x="0" y="13" width="1" height="1" fill="#000"/><rect x="1" y="13" width="6" height="1" fill="#fff"/><rect x="7" y="13" width="1" height="1" fill="#ff0000"/><rect x="8" y="13" width="1" height="1" fill="#fff"/><rect x="9" y="13" width="1" height="1" fill="#ff0000"/><rect x="10" y="13" width="5" height="1" fill="#fff"/><rect x="15" y="13" width="1" height="1" fill="#000"/><rect x="0" y="14" width="1" height="1" fill="#000"/><rect x="1" y="14" width="7" height="1" fill="#fff"/><rect x="8" y="14" width="2" height="1" fill="#ff0000"/><rect x="10" y="14" width="5" height="1" fill="#fff"/><rect x="15" y="14" width="1" height="1" fill="#000"/><rect x="0" y="15" width="16" height="1" fill="#000"/></svg>
<div class="a" style="left:914px;top:309px;width:16px;height:14px;background:#404040;"></div>
<div class="a" style="left:914px;top:309px;width:15px;height:13px;background:#fff;"></div>
<div class="a" style="left:915px;top:310px;width:14px;height:12px;background:#808080;"></div>
<div class="a" style="left:915px;top:310px;width:13px;height:11px;background:#d4d0c8;"></div>
<div class="a" style="left:930px;top:309px;width:16px;height:14px;background:#404040;"></div>
<div class="a" style="left:930px;top:309px;width:15px;height:13px;background:#fff;"></div>
<div class="a" style="left:931px;top:310px;width:14px;height:12px;background:#808080;"></div>
<div class="a" style="left:931px;top:310px;width:13px;height:11px;background:#d4d0c8;"></div>
<div class="a" style="left:948px;top:309px;width:16px;height:14px;background:#404040;"></div>
<div class="a" style="left:948px;top:309px;width:15px;height:13px;background:#fff;"></div>
<div class="a" style="left:949px;top:310px;width:14px;height:12px;background:#808080;"></div>
<div class="a" style="left:949px;top:310px;width:13px;height:11px;background:#d4d0c8;"></div>
<svg class="a" style="left:914px;top:309px" width="50" height="14" shape-rendering="crispEdges"><rect x="4" y="9" width="6" height="2" fill="#000"/><rect x="19" y="2" width="9" height="9" fill="none" stroke="#000" stroke-width="1" transform="translate(0.5 0.5)"/><rect x="19" y="3" width="9" height="1" fill="#000" transform="translate(0.5 0)"/></svg>
<svg class="a" style="left:948px;top:309px" width="16" height="14"><path d="M4 3 L11 10 M11 3 L4 10" stroke="#000" stroke-width="1.6" fill="none"/></svg>
<div class="a" style="left:8px;top:326px;width:958px;height:1px;background:#808080;"></div>
<div class="a" style="left:8px;top:327px;width:958px;height:1px;background:#fff;"></div>
<svg class="a" style="left:16px;top:332px" width="9" height="15" shape-rendering="crispEdges"><rect x="1" y="0" width="1" height="1" fill="#008000"/><rect x="0" y="1" width="1" height="1" fill="#008000"/><rect x="1" y="1" width="1" height="1" fill="#c0ffc0"/><rect x="2" y="1" width="1" height="1" fill="#008000"/><rect x="0" y="2" width="1" height="1" fill="#008000"/><rect x="1" y="2" width="1" height="1" fill="#c0ffc0"/><rect x="2" y="2" width="1" height="1" fill="#00f000"/><rect x="3" y="2" width="1" height="1" fill="#008000"/><rect x="0" y="3" width="1" height="1" fill="#008000"/><rect x="1" y="3" width="1" height="1" fill="#40ffb0"/><rect x="2" y="3" width="2" height="1" fill="#00f000"/><rect x="4" y="3" width="1" height="1" fill="#008000"/><rect x="0" y="4" width="1" height="1" fill="#008000"/><rect x="1" y="4" width="1" height="1" fill="#40ffb0"/><rect x="2" y="4" width="3" height="1" fill="#00f000"/><rect x="5" y="4" width="1" height="1" fill="#008000"/><rect x="0" y="5" width="1" height="1" fill="#008000"/><rect x="1" y="5" width="1" height="1" fill="#40ffb0"/><rect x="2" y="5" width="4" height="1" fill="#00f000"/><rect x="6" y="5" width="1" height="1" fill="#008000"/><rect x="0" y="6" width="1" height="1" fill="#008000"/><rect x="1" y="6" width="1" height="1" fill="#b0ff40"/><rect x="2" y="6" width="5" height="1" fill="#00f000"/><rect x="7" y="6" width="1" height="1" fill="#008000"/><rect x="0" y="7" width="1" height="1" fill="#008000"/><rect x="1" y="7" width="7" height="1" fill="#00f000"/><rect x="8" y="7" width="1" height="1" fill="#008000"/><rect x="0" y="8" width="1" height="1" fill="#008000"/><rect x="1" y="8" width="6" height="1" fill="#00f000"/><rect x="7" y="8" width="1" height="1" fill="#008000"/><rect x="0" y="9" width="1" height="1" fill="#008000"/><rect x="1" y="9" width="5" height="1" fill="#00f000"/><rect x="6" y="9" width="1" height="1" fill="#008000"/><rect x="0" y="10" width="1" height="1" fill="#008000"/><rect x="1" y="10" width="4" height="1" fill="#00f000"/><rect x="5" y="10" width="1" height="1" fill="#008000"/><rect x="0" y="11" width="1" height="1" fill="#008000"/><rect x="1" y="11" width="3" height="1" fill="#00f000"/><rect x="4" y="11" width="1" height="1" fill="#008000"/><rect x="0" y="12" width="1" height="1" fill="#008000"/><rect x="1" y="12" width="2" height="1" fill="#00f000"/><rect x="3" y="12" width="1" height="1" fill="#008000"/><rect x="0" y="13" width="1" height="1" fill="#008000"/><rect x="1" y="13" width="1" height="1" fill="#00f000"/><rect x="2" y="13" width="1" height="1" fill="#008000"/><rect x="1" y="14" width="1" height="1" fill="#008000"/></svg>
<div class="a" style="left:36px;top:330px;width:1px;height:20px;background:#808080;"></div>
<div class="a" style="left:37px;top:330px;width:1px;height:20px;background:#fff;"></div>
<svg class="a" style="left:45px;top:331px" width="16" height="15" shape-rendering="crispEdges" fill="#000">
<rect x="0" y="14" width="16" height="1"/><rect x="2" y="0" width="1" height="14"/><rect x="5" y="7" width="1" height="7"/><rect x="8" y="9" width="1" height="5"/><rect x="11" y="11" width="1" height="3"/>
</svg>
<div class="a" style="left:66px;top:328px;width:25px;height:24px;background:#fff;"></div>
<div class="a" style="left:66px;top:328px;width:24px;height:23px;background:#808080;"></div>
<div class="a dither" style="left:67px;top:329px;width:23px;height:22px"></div>
<svg class="a" style="left:0;top:0" width="969" height="840" shape-rendering="crispEdges"><rect x="71" y="340" width="1" height="1" fill="#000"/><rect x="71" y="341" width="1" height="1" fill="#000"/><rect x="71" y="342" width="1" height="1" fill="#000"/><rect x="71" y="343" width="1" height="1" fill="#000"/><rect x="71" y="344" width="1" height="1" fill="#000"/><rect x="71" y="345" width="1" height="1" fill="#000"/><rect x="71" y="346" width="1" height="1" fill="#000"/><rect x="71" y="347" width="1" height="1" fill="#000"/><rect x="71" y="340" width="1" height="1" fill="#000"/><rect x="72" y="340" width="1" height="1" fill="#000"/><rect x="73" y="340" width="1" height="1" fill="#000"/><rect x="73" y="338" width="1" height="1" fill="#000"/><rect x="73" y="339" width="1" height="1" fill="#000"/><rect x="73" y="340" width="1" height="1" fill="#000"/><rect x="73" y="338" width="1" height="1" fill="#000"/><rect x="74" y="338" width="1" height="1" fill="#000"/><rect x="74" y="338" width="1" height="1" fill="#000"/><rect x="74" y="339" width="1" height="1" fill="#000"/><rect x="74" y="340" width="1" height="1" fill="#000"/><rect x="74" y="341" width="1" height="1" fill="#000"/><rect x="74" y="342" width="1" height="1" fill="#000"/><rect x="74" y="342" width="1" height="1" fill="#000"/><rect x="75" y="342" width="1" height="1" fill="#000"/><rect x="76" y="342" width="1" height="1" fill="#000"/><rect x="77" y="342" width="1" height="1" fill="#000"/><rect x="77" y="336" width="1" height="1" fill="#000"/><rect x="77" y="337" width="1" height="1" fill="#000"/><rect x="77" y="338" width="1" height="1" fill="#000"/><rect x="77" y="339" width="1" height="1" fill="#000"/><rect x="77" y="340" width="1" height="1" fill="#000"/><rect x="77" y="341" width="1" height="1" fill="#000"/><rect x="77" y="342" width="1" height="1" fill="#000"/><rect x="77" y="336" width="1" height="1" fill="#000"/><rect x="78" y="336" width="1" height="1" fill="#000"/><rect x="79" y="336" width="1" height="1" fill="#000"/><rect x="79" y="334" width="1" height="1" fill="#000"/><rect x="79" y="335" width="1" height="1" fill="#000"/><rect x="79" y="336" width="1" height="1" fill="#000"/><rect x="79" y="334" width="1" height="1" fill="#000"/><rect x="80" y="334" width="1" height="1" fill="#000"/><rect x="81" y="334" width="1" height="1" fill="#000"/><rect x="82" y="335" width="1" height="1" fill="#000"/><rect x="83" y="336" width="1" height="1" fill="#000"/><rect x="84" y="336" width="1" height="1" fill="#000"/><rect x="85" y="336" width="1" height="1" fill="#000"/><rect x="86" y="337" width="1" height="1" fill="#000"/><rect x="86" y="338" width="1" height="1" fill="#000"/><rect x="86" y="339" width="1" height="1" fill="#000"/><rect x="86" y="340" width="1" height="1" fill="#000"/><rect x="86" y="341" width="1" height="1" fill="#000"/><rect x="86" y="342" width="1" height="1" fill="#000"/><rect x="86" y="343" width="1" height="1" fill="#000"/><rect x="86" y="344" width="1" height="1" fill="#000"/><rect x="86" y="345" width="1" height="1" fill="#000"/><rect x="86" y="346" width="1" height="1" fill="#000"/><rect x="86" y="347" width="1" height="1" fill="#000"/></svg>
<svg class="a" style="left:0;top:0" width="969" height="840" shape-rendering="crispEdges"><rect x="98" y="333" width="1" height="1" fill="#000"/><rect x="97" y="334" width="1" height="1" fill="#000"/><rect x="99" y="334" width="1" height="1" fill="#000"/><rect x="97" y="335" width="1" height="1" fill="#000"/><rect x="99" y="335" width="1" height="1" fill="#000"/><rect x="97" y="336" width="1" height="1" fill="#000"/><rect x="99" y="336" width="1" height="1" fill="#000"/><rect x="96" y="337" width="1" height="1" fill="#000"/><rect x="100" y="337" width="1" height="1" fill="#000"/><rect x="96" y="338" width="1" height="1" fill="#000"/><rect x="97" y="338" width="1" height="1" fill="#000"/><rect x="98" y="338" width="1" height="1" fill="#000"/><rect x="99" y="338" width="1" height="1" fill="#000"/><rect x="100" y="338" width="1" height="1" fill="#000"/><rect x="95" y="339" width="1" height="1" fill="#000"/><rect x="95" y="340" width="1" height="1" fill="#000"/><rect x="105" y="333" width="1" height="1" fill="#000"/><rect x="105" y="334" width="1" height="1" fill="#000"/><rect x="104" y="335" width="1" height="1" fill="#000"/><rect x="104" y="336" width="1" height="1" fill="#000"/><rect x="103" y="338" width="1" height="1" fill="#000"/><rect x="103" y="339" width="1" height="1" fill="#000"/><rect x="102" y="340" width="1" height="1" fill="#000"/><rect x="102" y="341" width="1" height="1" fill="#000"/><rect x="102" y="342" width="1" height="1" fill="#000"/><rect x="101" y="343" width="1" height="1" fill="#000"/><rect x="101" y="344" width="1" height="1" fill="#000"/><rect x="105" y="337" width="1" height="1" fill="#000"/><rect x="106" y="337" width="1" height="1" fill="#000"/><rect x="107" y="337" width="1" height="1" fill="#000"/><rect x="108" y="337" width="1" height="1" fill="#000"/><rect x="109" y="337" width="1" height="1" fill="#000"/><rect x="105" y="340" width="1" height="1" fill="#000"/><rect x="106" y="340" width="1" height="1" fill="#000"/><rect x="107" y="340" width="1" height="1" fill="#000"/><rect x="108" y="340" width="1" height="1" fill="#000"/><rect x="109" y="340" width="1" height="1" fill="#000"/><rect x="105" y="344" width="1" height="1" fill="#000"/><rect x="106" y="344" width="1" height="1" fill="#000"/><rect x="107" y="344" width="1" height="1" fill="#000"/><rect x="108" y="344" width="1" height="1" fill="#000"/><rect x="109" y="344" width="1" height="1" fill="#000"/><rect x="105" y="337" width="1" height="1" fill="#000"/><rect x="105" y="338" width="1" height="1" fill="#000"/><rect x="105" y="339" width="1" height="1" fill="#000"/><rect x="105" y="340" width="1" height="1" fill="#000"/><rect x="105" y="341" width="1" height="1" fill="#000"/><rect x="105" y="342" width="1" height="1" fill="#000"/><rect x="105" y="343" width="1" height="1" fill="#000"/><rect x="105" y="344" width="1" height="1" fill="#000"/><rect x="110" y="338" width="1" height="1" fill="#000"/><rect x="110" y="339" width="1" height="1" fill="#000"/><rect x="110" y="341" width="1" height="1" fill="#000"/><rect x="110" y="342" width="1" height="1" fill="#000"/><rect x="110" y="343" width="1" height="1" fill="#000"/></svg>
<svg class="a" style="left:121px;top:331px" width="14" height="14" shape-rendering="crispEdges"><rect x="1" y="0" width="6" height="1" fill="#000"/><rect x="0" y="1" width="1" height="1" fill="#000"/><rect x="1" y="1" width="6" height="1" fill="#ffff00"/><rect x="7" y="1" width="7" height="1" fill="#000"/><rect x="0" y="2" width="7" height="1" fill="#000"/><rect x="7" y="2" width="1" height="1" fill="#c8c8c0"/><rect x="8" y="2" width="1" height="1" fill="#ffff00"/><rect x="9" y="2" width="1" height="1" fill="#c8c8c0"/><rect x="10" y="2" width="1" height="1" fill="#ffff00"/><rect x="11" y="2" width="1" height="1" fill="#c8c8c0"/><rect x="12" y="2" width="1" height="1" fill="#ffff00"/><rect x="13" y="2" width="1" height="1" fill="#000"/><rect x="0" y="3" width="1" height="1" fill="#000"/><rect x="1" y="3" width="12" height="1" fill="#ffff00"/><rect x="13" y="3" width="1" height="1" fill="#000"/><rect x="0" y="4" width="1" height="1" fill="#000"/><rect x="1" y="4" width="1" height="1" fill="#c8c8c0"/><rect x="2" y="4" width="1" height="1" fill="#ffff00"/><rect x="3" y="4" width="1" height="1" fill="#c8c8c0"/><rect x="4" y="4" width="1" height="1" fill="#ffff00"/><rect x="5" y="4" width="1" height="1" fill="#c8c8c0"/><rect x="6" y="4" width="1" height="1" fill="#ffff00"/><rect x="7" y="4" width="1" height="1" fill="#c8c8c0"/><rect x="8" y="4" width="1" height="1" fill="#000"/><rect x="9" y="4" width="1" height="1" fill="#c8c8c0"/><rect x="10" y="4" width="1" height="1" fill="#ffff00"/><rect x="11" y="4" width="1" height="1" fill="#c8c8c0"/><rect x="12" y="4" width="1" height="1" fill="#ffff00"/><rect x="13" y="4" width="1" height="1" fill="#000"/><rect x="0" y="5" width="1" height="1" fill="#000"/><rect x="1" y="5" width="6" height="1" fill="#ffff00"/><rect x="7" y="5" width="2" height="1" fill="#000"/><rect x="9" y="5" width="4" height="1" fill="#ffff00"/><rect x="13" y="5" width="1" height="1" fill="#000"/><rect x="0" y="6" width="1" height="1" fill="#000"/><rect x="1" y="6" width="1" height="1" fill="#c8c8c0"/><rect x="2" y="6" width="1" height="1" fill="#000"/><rect x="3" y="6" width="1" height="1" fill="#c8c8c0"/><rect x="4" y="6" width="1" height="1" fill="#ffff00"/><rect x="5" y="6" width="1" height="1" fill="#c8c8c0"/><rect x="6" y="6" width="2" height="1" fill="#000"/><rect x="8" y="6" width="1" height="1" fill="#ffff00"/><rect x="9" y="6" width="1" height="1" fill="#c8c8c0"/><rect x="10" y="6" width="1" height="1" fill="#ffff00"/><rect x="11" y="6" width="1" height="1" fill="#c8c8c0"/><rect x="12" y="6" width="1" height="1" fill="#ffff00"/><rect x="13" y="6" width="1" height="1" fill="#000"/><rect x="0" y="7" width="1" height="1" fill="#000"/><rect x="1" y="7" width="1" height="1" fill="#ffff00"/><rect x="2" y="7" width="2" height="1" fill="#000"/><rect x="4" y="7" width="1" height="1" fill="#ffff00"/><rect x="5" y="7" width="2" height="1" fill="#000"/><rect x="7" y="7" width="6" height="1" fill="#ffff00"/><rect x="13" y="7" width="1" height="1" fill="#000"/><rect x="0" y="8" width="1" height="1" fill="#000"/><rect x="1" y="8" width="1" height="1" fill="#c8c8c0"/><rect x="2" y="8" width="1" height="1" fill="#ffff00"/><rect x="3" y="8" width="3" height="1" fill="#000"/><rect x="6" y="8" width="1" height="1" fill="#ffff00"/><rect x="7" y="8" width="1" height="1" fill="#c8c8c0"/><rect x="8" y="8" width="1" height="1" fill="#ffff00"/><rect x="9" y="8" width="1" height="1" fill="#c8c8c0"/><rect x="10" y="8" width="1" height="1" fill="#ffff00"/><rect x="11" y="8" width="1" height="1" fill="#000"/><rect x="12" y="8" width="1" height="1" fill="#ffff00"/><rect x="13" y="8" width="1" height="1" fill="#000"/><rect x="0" y="9" width="1" height="1" fill="#000"/><rect x="1" y="9" width="3" height="1" fill="#ffff00"/><rect x="4" y="9" width="1" height="1" fill="#000"/><rect x="5" y="9" width="5" height="1" fill="#ffff00"/><rect x="10" y="9" width="2" height="1" fill="#000"/><rect x="12" y="9" width="1" height="1" fill="#ffff00"/><rect x="13" y="9" width="1" height="1" fill="#000"/><rect x="0" y="10" width="1" height="1" fill="#000"/><rect x="1" y="10" width="1" height="1" fill="#c8c8c0"/><rect x="2" y="10" width="1" height="1" fill="#ffff00"/><rect x="3" y="10" width="1" height="1" fill="#c8c8c0"/><rect x="4" y="10" width="1" height="1" fill="#ffff00"/><rect x="5" y="10" width="1" height="1" fill="#000"/><rect x="6" y="10" width="1" height="1" fill="#ffff00"/><rect x="7" y="10" width="1" height="1" fill="#c8c8c0"/><rect x="8" y="10" width="1" height="1" fill="#ffff00"/><rect x="9" y="10" width="2" height="1" fill="#000"/><rect x="11" y="10" width="1" height="1" fill="#c8c8c0"/><rect x="12" y="10" width="1" height="1" fill="#ffff00"/><rect x="13" y="10" width="1" height="1" fill="#000"/><rect x="0" y="11" width="1" height="1" fill="#000"/><rect x="1" y="11" width="4" height="1" fill="#ffff00"/><rect x="5" y="11" width="2" height="1" fill="#000"/><rect x="7" y="11" width="1" height="1" fill="#ffff00"/><rect x="8" y="11" width="2" height="1" fill="#000"/><rect x="10" y="11" width="3" height="1" fill="#ffff00"/><rect x="13" y="11" width="1" height="1" fill="#000"/><rect x="0" y="12" width="1" height="1" fill="#000"/><rect x="1" y="12" width="1" height="1" fill="#c8c8c0"/><rect x="2" y="12" width="1" height="1" fill="#ffff00"/><rect x="3" y="12" width="1" height="1" fill="#c8c8c0"/><rect x="4" y="12" width="1" height="1" fill="#ffff00"/><rect x="5" y="12" width="1" height="1" fill="#c8c8c0"/><rect x="6" y="12" width="3" height="1" fill="#000"/><rect x="9" y="12" width="1" height="1" fill="#c8c8c0"/><rect x="10" y="12" width="1" height="1" fill="#ffff00"/><rect x="11" y="12" width="1" height="1" fill="#c8c8c0"/><rect x="12" y="12" width="1" height="1" fill="#ffff00"/><rect x="13" y="12" width="1" height="1" fill="#000"/><rect x="0" y="13" width="14" height="1" fill="#000"/></svg>
<div class="a" style="left:144px;top:330px;width:1px;height:20px;background:#808080;"></div>
<div class="a" style="left:145px;top:330px;width:1px;height:20px;background:#fff;"></div>
<svg class="a" style="left:0;top:0" width="969" height="840" shape-rendering="crispEdges"><rect x="161" y="331" width="1" height="1" fill="#000"/><rect x="161" y="332" width="1" height="1" fill="#000"/><rect x="161" y="333" width="1" height="1" fill="#000"/><rect x="161" y="334" width="1" height="1" fill="#000"/><rect x="161" y="335" width="1" height="1" fill="#000"/><rect x="161" y="336" width="1" height="1" fill="#000"/><rect x="161" y="337" width="1" height="1" fill="#000"/><rect x="161" y="338" width="1" height="1" fill="#000"/><rect x="161" y="339" width="1" height="1" fill="#000"/><rect x="161" y="340" width="1" height="1" fill="#000"/><rect x="161" y="341" width="1" height="1" fill="#000"/><rect x="161" y="342" width="1" height="1" fill="#000"/><rect x="161" y="343" width="1" height="1" fill="#000"/><rect x="161" y="344" width="1" height="1" fill="#000"/><rect x="161" y="345" width="1" height="1" fill="#000"/><rect x="161" y="346" width="1" height="1" fill="#000"/><rect x="153" y="338" width="1" height="1" fill="#000"/><rect x="154" y="338" width="1" height="1" fill="#000"/><rect x="155" y="338" width="1" height="1" fill="#000"/><rect x="156" y="338" width="1" height="1" fill="#000"/><rect x="157" y="338" width="1" height="1" fill="#000"/><rect x="158" y="338" width="1" height="1" fill="#000"/><rect x="159" y="338" width="1" height="1" fill="#000"/><rect x="160" y="338" width="1" height="1" fill="#000"/><rect x="161" y="338" width="1" height="1" fill="#000"/><rect x="162" y="338" width="1" height="1" fill="#000"/><rect x="163" y="338" width="1" height="1" fill="#000"/><rect x="164" y="338" width="1" height="1" fill="#000"/><rect x="165" y="338" width="1" height="1" fill="#000"/><rect x="166" y="338" width="1" height="1" fill="#000"/><rect x="167" y="338" width="1" height="1" fill="#000"/><rect x="168" y="338" width="1" height="1" fill="#000"/></svg>
<svg class="a" style="left:0;top:0" width="969" height="840"><path d="M153.5 334.5 L155.5 332.5 L164.5 343.5 L168.5 339.5" fill="none" stroke="#ff0000" stroke-width="1.1"/></svg>
<svg class="a" style="left:0;top:0" width="969" height="840" shape-rendering="crispEdges"><rect x="185" y="331" width="1" height="1" fill="#000"/><rect x="186" y="331" width="1" height="1" fill="#000"/><rect x="185" y="332" width="1" height="1" fill="#000"/><rect x="186" y="332" width="1" height="1" fill="#000"/><rect x="183" y="332" width="1" height="1" fill="#000"/><rect x="189" y="332" width="1" height="1" fill="#000"/><rect x="184" y="333" width="1" height="1" fill="#000"/><rect x="188" y="333" width="1" height="1" fill="#000"/><rect x="185" y="334" width="1" height="1" fill="#000"/><rect x="186" y="334" width="1" height="1" fill="#000"/><rect x="187" y="334" width="1" height="1" fill="#000"/><rect x="185" y="343" width="1" height="1" fill="#000"/><rect x="186" y="343" width="1" height="1" fill="#000"/><rect x="187" y="343" width="1" height="1" fill="#000"/><rect x="184" y="344" width="1" height="1" fill="#000"/><rect x="188" y="344" width="1" height="1" fill="#000"/><rect x="183" y="345" width="1" height="1" fill="#000"/><rect x="189" y="345" width="1" height="1" fill="#000"/><rect x="185" y="345" width="1" height="1" fill="#000"/><rect x="186" y="345" width="1" height="1" fill="#000"/><rect x="185" y="346" width="1" height="1" fill="#000"/><rect x="186" y="346" width="1" height="1" fill="#000"/><rect x="178" y="342" width="1" height="1" fill="#000"/><rect x="179" y="341" width="1" height="1" fill="#000"/><rect x="180" y="340" width="1" height="1" fill="#000"/><rect x="181" y="339" width="1" height="1" fill="#000"/><rect x="182" y="338" width="1" height="1" fill="#000"/><rect x="183" y="338" width="1" height="1" fill="#000"/><rect x="184" y="338" width="1" height="1" fill="#000"/><rect x="185" y="338" width="1" height="1" fill="#000"/><rect x="186" y="338" width="1" height="1" fill="#000"/><rect x="187" y="338" width="1" height="1" fill="#000"/><rect x="188" y="338" width="1" height="1" fill="#000"/><rect x="189" y="338" width="1" height="1" fill="#000"/><rect x="190" y="338" width="1" height="1" fill="#000"/><rect x="184" y="339" width="1" height="1" fill="#000"/><rect x="187" y="339" width="1" height="1" fill="#000"/><rect x="191" y="339" width="1" height="1" fill="#000"/><rect x="192" y="340" width="1" height="1" fill="#000"/><rect x="193" y="341" width="1" height="1" fill="#000"/><rect x="193" y="342" width="1" height="1" fill="#000"/></svg>
<div class="a" style="left:199px;top:329px;width:86px;height:21px;background:#fff;"></div>
<div class="a" style="left:199px;top:329px;width:85px;height:20px;background:#808080;"></div>
<div class="a" style="left:200px;top:330px;width:84px;height:19px;background:#d4d0c8;"></div>
<div class="a" style="left:200px;top:330px;width:83px;height:18px;background:#404040;"></div>
<div class="a" style="left:201px;top:331px;width:82px;height:17px;background:#fff;"></div>
<div class="a" style="left:267px;top:331px;width:16px;height:17px;background:#404040;"></div>
<div class="a" style="left:267px;top:331px;width:15px;height:16px;background:#d4d0c8;"></div>
<div class="a" style="left:268px;top:332px;width:14px;height:15px;background:#808080;"></div>
<div class="a" style="left:268px;top:332px;width:13px;height:14px;background:#fff;"></div>
<div class="a" style="left:269px;top:333px;width:12px;height:13px;background:#d4d0c8;"></div>
<svg class="a" style="left:271px;top:337px" width="7" height="4" shape-rendering="crispEdges"><rect x="0" y="0" width="7" height="1"/><rect x="1" y="1" width="5" height="1"/><rect x="2" y="2" width="3" height="1"/><rect x="3" y="3" width="1" height="1"/></svg>
<div class="a ctext" style="left:203px;top:331px;line-height:17px">Rectangular</div>
<div class="a" style="left:285px;top:329px;width:66px;height:21px;background:#fff;"></div>
<div class="a" style="left:285px;top:329px;width:65px;height:20px;background:#808080;"></div>
<div class="a" style="left:286px;top:330px;width:64px;height:19px;background:#d4d0c8;"></div>
<div class="a" style="left:286px;top:330px;width:63px;height:18px;background:#404040;"></div>
<div class="a" style="left:287px;top:331px;width:62px;height:17px;background:#fff;"></div>
<div class="a" style="left:333px;top:331px;width:16px;height:17px;background:#404040;"></div>
<div class="a" style="left:333px;top:331px;width:15px;height:16px;background:#d4d0c8;"></div>
<div class="a" style="left:334px;top:332px;width:14px;height:15px;background:#808080;"></div>
<div class="a" style="left:334px;top:332px;width:13px;height:14px;background:#fff;"></div>
<div class="a" style="left:335px;top:333px;width:12px;height:13px;background:#d4d0c8;"></div>
<svg class="a" style="left:337px;top:337px" width="7" height="4" shape-rendering="crispEdges"><rect x="0" y="0" width="7" height="1"/><rect x="1" y="1" width="5" height="1"/><rect x="2" y="2" width="3" height="1"/><rect x="3" y="3" width="1" height="1"/></svg>
<div class="a ctext" style="left:289px;top:331px;line-height:17px">CH A</div>
<div class="a" style="left:351px;top:329px;width:60px;height:21px;background:#fff;"></div>
<div class="a" style="left:351px;top:329px;width:59px;height:20px;background:#808080;"></div>
<div class="a" style="left:352px;top:330px;width:58px;height:19px;background:#d4d0c8;"></div>
<div class="a" style="left:352px;top:330px;width:57px;height:18px;background:#404040;"></div>
<div class="a" style="left:353px;top:331px;width:56px;height:17px;background:#fff;"></div>
<div class="a" style="left:393px;top:331px;width:16px;height:17px;background:#404040;"></div>
<div class="a" style="left:393px;top:331px;width:15px;height:16px;background:#d4d0c8;"></div>
<div class="a" style="left:394px;top:332px;width:14px;height:15px;background:#808080;"></div>
<div class="a" style="left:394px;top:332px;width:13px;height:14px;background:#fff;"></div>
<div class="a" style="left:395px;top:333px;width:12px;height:13px;background:#d4d0c8;"></div>
<svg class="a" style="left:397px;top:337px" width="7" height="4" shape-rendering="crispEdges"><rect x="0" y="0" width="7" height="1"/><rect x="1" y="1" width="5" height="1"/><rect x="2" y="2" width="3" height="1"/><rect x="3" y="3" width="1" height="1"/></svg>
<div class="a ctext" style="left:355px;top:331px;line-height:17px">dBSPL</div>
<div class="a" style="left:411px;top:329px;width:86px;height:21px;background:#fff;"></div>
<div class="a" style="left:411px;top:329px;width:85px;height:20px;background:#808080;"></div>
<div class="a" style="left:412px;top:330px;width:84px;height:19px;background:#d4d0c8;"></div>
<div class="a" style="left:412px;top:330px;width:83px;height:18px;background:#404040;"></div>
<div class="a" style="left:413px;top:331px;width:82px;height:17px;background:#fff;"></div>
<div class="a" style="left:479px;top:331px;width:16px;height:17px;background:#404040;"></div>
<div class="a" style="left:479px;top:331px;width:15px;height:16px;background:#d4d0c8;"></div>
<div class="a" style="left:480px;top:332px;width:14px;height:15px;background:#808080;"></div>
<div class="a" style="left:480px;top:332px;width:13px;height:14px;background:#fff;"></div>
<div class="a" style="left:481px;top:333px;width:12px;height:13px;background:#d4d0c8;"></div>
<svg class="a" style="left:483px;top:337px" width="7" height="4" shape-rendering="crispEdges"><rect x="0" y="0" width="7" height="1"/><rect x="1" y="1" width="5" height="1"/><rect x="2" y="2" width="3" height="1"/><rect x="3" y="3" width="1" height="1"/></svg>
<div class="a ctext" style="left:415px;top:331px;line-height:17px">1/6 Octave</div>
<div class="a" style="left:497px;top:329px;width:48px;height:21px;background:#fff;"></div>
<div class="a" style="left:497px;top:329px;width:47px;height:20px;background:#808080;"></div>
<div class="a" style="left:498px;top:330px;width:46px;height:19px;background:#d4d0c8;"></div>
<div class="a" style="left:498px;top:330px;width:45px;height:18px;background:#404040;"></div>
<div class="a" style="left:499px;top:331px;width:44px;height:17px;background:#fff;"></div>
<div class="a" style="left:527px;top:331px;width:16px;height:17px;background:#404040;"></div>
<div class="a" style="left:527px;top:331px;width:15px;height:16px;background:#d4d0c8;"></div>
<div class="a" style="left:528px;top:332px;width:14px;height:15px;background:#808080;"></div>
<div class="a" style="left:528px;top:332px;width:13px;height:14px;background:#fff;"></div>
<div class="a" style="left:529px;top:333px;width:12px;height:13px;background:#d4d0c8;"></div>
<svg class="a" style="left:531px;top:337px" width="7" height="4" shape-rendering="crispEdges"><rect x="0" y="0" width="7" height="1"/><rect x="1" y="1" width="5" height="1"/><rect x="2" y="2" width="3" height="1"/><rect x="3" y="3" width="1" height="1"/></svg>
<div class="a" style="left:500px;top:332px;width:12px;height:13px;background:#0a246a;"></div>
<div class="a ctext" style="left:500px;width:12px;text-align:center;top:331px;line-height:17px;color:#fff;letter-spacing:-0.3px">20</div>
<div class="a" style="left:545px;top:328px;width:40px;height:24px;background:#fff;"></div>
<div class="a" style="left:545px;top:328px;width:39px;height:23px;background:#808080;"></div>
<div class="a" style="left:546px;top:329px;width:38px;height:22px;background:#d4d0c8;"></div>
<div class="a" style="left:546px;top:329px;width:38px;height:22px;line-height:20px;text-align:center;font-weight:bold;font-size:16px;color:#000;transform:translateZ(0)">20</div>
<div class="a" style="left:14px;top:358px;width:946px;height:475px;background:#000;border-top:1px solid #808080;border-left:1px solid #808080;border-right:1px solid #fff;border-bottom:1px solid #fff;box-sizing:border-box"></div>
<svg class="a" style="left:0;top:0" width="969" height="840" shape-rendering="crispEdges"><defs><clipPath id="c359"><rect x="15" y="359" width="944" height="473"/></clipPath></defs><g clip-path="url(#c359)"><rect x="75" y="370" width="2" height="1" fill="#fff"/><rect x="74" y="371" width="4" height="1" fill="#fff"/><rect x="73" y="372" width="6" height="1" fill="#fff"/><rect x="72" y="373" width="8" height="1" fill="#fff"/><rect x="71" y="374" width="10" height="1" fill="#fff"/><rect x="95" y="370" width="10" height="1" fill="#fff"/><rect x="96" y="371" width="8" height="1" fill="#fff"/><rect x="97" y="372" width="6" height="1" fill="#fff"/><rect x="98" y="373" width="4" height="1" fill="#fff"/><rect x="99" y="374" width="2" height="1" fill="#fff"/><rect x="123" y="367" width="2" height="1" fill="#fff"/><rect x="122" y="368" width="4" height="1" fill="#fff"/><rect x="121" y="369" width="6" height="1" fill="#fff"/><rect x="120" y="370" width="8" height="1" fill="#fff"/><rect x="119" y="371" width="10" height="1" fill="#fff"/><rect x="119" y="374" width="10" height="1" fill="#fff"/><rect x="120" y="375" width="8" height="1" fill="#fff"/><rect x="121" y="376" width="6" height="1" fill="#fff"/><rect x="122" y="377" width="4" height="1" fill="#fff"/><rect x="123" y="378" width="2" height="1" fill="#fff"/><rect x="143" y="367" width="10" height="1" fill="#fff"/><rect x="144" y="368" width="8" height="1" fill="#fff"/><rect x="145" y="369" width="6" height="1" fill="#fff"/><rect x="146" y="370" width="4" height="1" fill="#fff"/><rect x="147" y="371" width="2" height="1" fill="#fff"/><rect x="147" y="374" width="2" height="1" fill="#fff"/><rect x="146" y="375" width="4" height="1" fill="#fff"/><rect x="145" y="376" width="6" height="1" fill="#fff"/><rect x="144" y="377" width="8" height="1" fill="#fff"/><rect x="143" y="378" width="10" height="1" fill="#fff"/><g transform="translate(186 363)"><path d="M5.5 2.5 L9.5 2.5 L12.5 5.5 L12.5 9.5 L9.5 12.5 L5.5 12.5 L2.5 9.5 L2.5 5.5 Z" fill="#e0f0f0" stroke="#fff" stroke-width="1"/><path d="M5.5 3.5 L9.5 3.5 L11.5 5.5 L11.5 9.5 L9.5 11.5 L5.5 11.5 L3.5 9.5 L3.5 5.5 Z" fill="none" stroke="#909090" stroke-width="1"/><rect x="5" y="7" width="5" height="1" fill="#ff0000"/><rect x="7" y="5" width="1" height="5" fill="#ff0000"/><rect x="12" y="12" width="1" height="1" fill="#ffffff"/><rect x="12" y="13" width="1" height="1" fill="#a0a0a0"/><rect x="13" y="12" width="1" height="1" fill="#a0a0a0"/><rect x="13" y="13" width="1" height="1" fill="#ffffff"/><rect x="13" y="14" width="1" height="1" fill="#a0a0a0"/><rect x="14" y="13" width="1" height="1" fill="#a0a0a0"/><rect x="14" y="14" width="1" height="1" fill="#ffffff"/><rect x="14" y="15" width="1" height="1" fill="#a0a0a0"/><rect x="15" y="14" width="1" height="1" fill="#a0a0a0"/><rect x="15" y="15" width="1" height="1" fill="#ffffff"/><rect x="15" y="16" width="1" height="1" fill="#a0a0a0"/><rect x="16" y="15" width="1" height="1" fill="#a0a0a0"/><rect x="16" y="16" width="1" height="1" fill="#ffffff"/><rect x="16" y="17" width="1" height="1" fill="#a0a0a0"/><rect x="17" y="16" width="1" height="1" fill="#a0a0a0"/><rect x="17" y="17" width="1" height="1" fill="#ffffff"/><rect x="17" y="18" width="1" height="1" fill="#a0a0a0"/><rect x="11" y="12" width="2" height="1" fill="#ffff00"/><rect x="12" y="11" width="1" height="2" fill="#ffff00"/></g><g transform="translate(210 363)"><path d="M5.5 2.5 L9.5 2.5 L12.5 5.5 L12.5 9.5 L9.5 12.5 L5.5 12.5 L2.5 9.5 L2.5 5.5 Z" fill="#e0f0f0" stroke="#fff" stroke-width="1"/><path d="M5.5 3.5 L9.5 3.5 L11.5 5.5 L11.5 9.5 L9.5 11.5 L5.5 11.5 L3.5 9.5 L3.5 5.5 Z" fill="none" stroke="#909090" stroke-width="1"/><rect x="5" y="7" width="5" height="1" fill="#ff0000"/><rect x="12" y="12" width="1" height="1" fill="#ffffff"/><rect x="12" y="13" width="1" height="1" fill="#a0a0a0"/><rect x="13" y="12" width="1" height="1" fill="#a0a0a0"/><rect x="13" y="13" width="1" height="1" fill="#ffffff"/><rect x="13" y="14" width="1" height="1" fill="#a0a0a0"/><rect x="14" y="13" width="1" height="1" fill="#a0a0a0"/><rect x="14" y="14" width="1" height="1" fill="#ffffff"/><rect x="14" y="15" width="1" height="1" fill="#a0a0a0"/><rect x="15" y="14" width="1" height="1" fill="#a0a0a0"/><rect x="15" y="15" width="1" height="1" fill="#ffffff"/><rect x="15" y="16" width="1" height="1" fill="#a0a0a0"/><rect x="16" y="15" width="1" height="1" fill="#a0a0a0"/><rect x="16" y="16" width="1" height="1" fill="#ffffff"/><rect x="16" y="17" width="1" height="1" fill="#a0a0a0"/><rect x="17" y="16" width="1" height="1" fill="#a0a0a0"/><rect x="17" y="17" width="1" height="1" fill="#ffffff"/><rect x="17" y="18" width="1" height="1" fill="#a0a0a0"/><rect x="11" y="12" width="2" height="1" fill="#ffff00"/><rect x="12" y="11" width="1" height="2" fill="#ffff00"/></g><rect x="256" y="366" width="16" height="16" fill="#ffffc0"/><rect x="256" y="367" width="13" height="13" fill="#fff"/><rect x="256" y="367" width="12" height="12" fill="#808080"/><rect x="257" y="368" width="11" height="11" fill="#d4d0c8"/><rect x="257" y="368" width="10" height="10" fill="#404040"/><rect x="258" y="369" width="9" height="9" fill="#fff"/><rect x="265" y="370" width="1" height="1" fill="#000"/><rect x="264" y="371" width="1" height="1" fill="#000"/><rect x="265" y="371" width="1" height="1" fill="#000"/><rect x="259" y="372" width="1" height="1" fill="#000"/><rect x="263" y="372" width="1" height="1" fill="#000"/><rect x="264" y="372" width="1" height="1" fill="#000"/><rect x="265" y="372" width="1" height="1" fill="#000"/><rect x="259" y="373" width="1" height="1" fill="#000"/><rect x="260" y="373" width="1" height="1" fill="#000"/><rect x="262" y="373" width="1" height="1" fill="#000"/><rect x="263" y="373" width="1" height="1" fill="#000"/><rect x="264" y="373" width="1" height="1" fill="#000"/><rect x="259" y="374" width="1" height="1" fill="#000"/><rect x="260" y="374" width="1" height="1" fill="#000"/><rect x="261" y="374" width="1" height="1" fill="#000"/><rect x="262" y="374" width="1" height="1" fill="#000"/><rect x="263" y="374" width="1" height="1" fill="#000"/><rect x="260" y="375" width="1" height="1" fill="#000"/><rect x="261" y="375" width="1" height="1" fill="#000"/><rect x="262" y="375" width="1" height="1" fill="#000"/><rect x="261" y="376" width="1" height="1" fill="#000"/><rect x="293.5" y="366.5" width="13" height="13" fill="none" stroke="#fff" stroke-width="1"/><path d="M299 368h2v1h-2zM298 369h3v1h-3zM297 370h1v1h-1zM299 370h2v1h-2zM299 371h2v1h-2zM299 372h2v1h-2zM299 373h2v1h-2zM299 374h2v1h-2zM299 375h2v1h-2zM299 376h2v1h-2zM299 377h2v1h-2zM299 378h2v1h-2z" fill="#fff"/><rect x="314" y="366" width="16" height="16" fill="#ff0000"/><rect x="314" y="367" width="13" height="13" fill="#fff"/><rect x="314" y="367" width="12" height="12" fill="#808080"/><rect x="315" y="368" width="11" height="11" fill="#d4d0c8"/><rect x="315" y="368" width="10" height="10" fill="#404040"/><rect x="316" y="369" width="9" height="9" fill="#fff"/><rect x="339.5" y="366.5" width="13" height="13" fill="none" stroke="#fff" stroke-width="1"/><path d="M344 368h5v1h-5zM343 369h2v1h-2zM348 369h2v1h-2zM348 370h2v1h-2zM348 371h2v1h-2zM347 372h2v1h-2zM346 373h2v1h-2zM345 374h2v1h-2zM344 375h2v1h-2zM343 376h2v1h-2zM343 377h2v1h-2zM343 378h7v1h-7z" fill="#fff"/><rect x="360" y="366" width="16" height="16" fill="#ffffff"/><rect x="360" y="367" width="13" height="13" fill="#fff"/><rect x="360" y="367" width="12" height="12" fill="#808080"/><rect x="361" y="368" width="11" height="11" fill="#d4d0c8"/><rect x="361" y="368" width="10" height="10" fill="#404040"/><rect x="362" y="369" width="9" height="9" fill="#fff"/><rect x="385.5" y="366.5" width="13" height="13" fill="none" stroke="#fff" stroke-width="1"/><path d="M390 368h5v1h-5zM389 369h2v1h-2zM394 369h2v1h-2zM394 370h2v1h-2zM394 371h2v1h-2zM391 372h4v1h-4zM394 373h2v1h-2zM394 374h2v1h-2zM394 375h2v1h-2zM394 376h2v1h-2zM389 377h2v1h-2zM394 377h2v1h-2zM390 378h5v1h-5z" fill="#fff"/><rect x="406" y="366" width="16" height="16" fill="#00ff00"/><rect x="406" y="367" width="13" height="13" fill="#fff"/><rect x="406" y="367" width="12" height="12" fill="#808080"/><rect x="407" y="368" width="11" height="11" fill="#d4d0c8"/><rect x="407" y="368" width="10" height="10" fill="#404040"/><rect x="408" y="369" width="9" height="9" fill="#fff"/><rect x="431.5" y="366.5" width="13" height="13" fill="none" stroke="#fff" stroke-width="1"/><path d="M439 368h2v1h-2zM438 369h3v1h-3zM437 370h4v1h-4zM436 371h2v1h-2zM439 371h2v1h-2zM435 372h2v1h-2zM439 372h2v1h-2zM435 373h2v1h-2zM439 373h2v1h-2zM435 374h7v1h-7zM439 375h2v1h-2zM439 376h2v1h-2zM439 377h2v1h-2zM438 378h4v1h-4z" fill="#fff"/><rect x="452" y="366" width="16" height="16" fill="#ffff00"/><rect x="452" y="367" width="13" height="13" fill="#fff"/><rect x="452" y="367" width="12" height="12" fill="#808080"/><rect x="453" y="368" width="11" height="11" fill="#d4d0c8"/><rect x="453" y="368" width="10" height="10" fill="#404040"/><rect x="454" y="369" width="9" height="9" fill="#fff"/><rect x="477.5" y="366.5" width="13" height="13" fill="none" stroke="#fff" stroke-width="1"/><path d="M481 368h7v1h-7zM481 369h2v1h-2zM481 370h2v1h-2zM481 371h2v1h-2zM481 372h6v1h-6zM486 373h2v1h-2zM486 374h2v1h-2zM486 375h2v1h-2zM486 376h2v1h-2zM481 377h2v1h-2zM486 377h2v1h-2zM482 378h5v1h-5z" fill="#fff"/><rect x="498" y="366" width="16" height="16" fill="#ff8000"/><rect x="498" y="367" width="13" height="13" fill="#fff"/><rect x="498" y="367" width="12" height="12" fill="#808080"/><rect x="499" y="368" width="11" height="11" fill="#d4d0c8"/><rect x="499" y="368" width="10" height="10" fill="#404040"/><rect x="500" y="369" width="9" height="9" fill="#fff"/><rect x="523.5" y="366.5" width="13" height="13" fill="none" stroke="#fff" stroke-width="1"/><path d="M529 368h4v1h-4zM528 369h2v1h-2zM527 370h2v1h-2zM527 371h2v1h-2zM527 372h6v1h-6zM527 373h2v1h-2zM532 373h2v1h-2zM527 374h2v1h-2zM532 374h2v1h-2zM527 375h2v1h-2zM532 375h2v1h-2zM527 376h2v1h-2zM532 376h2v1h-2zM527 377h2v1h-2zM532 377h2v1h-2zM528 378h5v1h-5z" fill="#fff"/><rect x="544" y="366" width="16" height="16" fill="#0000ff"/><rect x="544" y="367" width="13" height="13" fill="#fff"/><rect x="544" y="367" width="12" height="12" fill="#808080"/><rect x="545" y="368" width="11" height="11" fill="#d4d0c8"/><rect x="545" y="368" width="10" height="10" fill="#404040"/><rect x="546" y="369" width="9" height="9" fill="#fff"/><rect x="569.5" y="366.5" width="13" height="13" fill="none" stroke="#fff" stroke-width="1"/><path d="M573 368h7v1h-7zM578 369h2v1h-2zM578 370h2v1h-2zM577 371h2v1h-2zM577 372h2v1h-2zM576 373h2v1h-2zM576 374h2v1h-2zM576 375h2v1h-2zM575 376h2v1h-2zM575 377h2v1h-2zM575 378h2v1h-2z" fill="#fff"/><rect x="590" y="366" width="16" height="16" fill="#ff00ff"/><rect x="590" y="367" width="13" height="13" fill="#fff"/><rect x="590" y="367" width="12" height="12" fill="#808080"/><rect x="591" y="368" width="11" height="11" fill="#d4d0c8"/><rect x="591" y="368" width="10" height="10" fill="#404040"/><rect x="592" y="369" width="9" height="9" fill="#fff"/><rect x="615.5" y="366.5" width="13" height="13" fill="none" stroke="#fff" stroke-width="1"/><path d="M620 368h5v1h-5zM620 369h2v1h-2zM623 369h2v1h-2zM620 370h2v1h-2zM623 370h2v1h-2zM620 371h2v1h-2zM623 371h2v1h-2zM621 372h3v1h-3zM620 373h2v1h-2zM624 373h2v1h-2zM619 374h2v1h-2zM624 374h2v1h-2zM619 375h2v1h-2zM624 375h2v1h-2zM619 376h2v1h-2zM624 376h2v1h-2zM619 377h2v1h-2zM624 377h2v1h-2zM620 378h5v1h-5z" fill="#fff"/><rect x="636" y="366" width="16" height="16" fill="#80ffff"/><rect x="636" y="367" width="13" height="13" fill="#fff"/><rect x="636" y="367" width="12" height="12" fill="#808080"/><rect x="637" y="368" width="11" height="11" fill="#d4d0c8"/><rect x="637" y="368" width="10" height="10" fill="#404040"/><rect x="638" y="369" width="9" height="9" fill="#fff"/><rect x="661.5" y="366.5" width="13" height="13" fill="none" stroke="#fff" stroke-width="1"/><path d="M666 368h5v1h-5zM665 369h2v1h-2zM670 369h2v1h-2zM665 370h2v1h-2zM670 370h2v1h-2zM665 371h2v1h-2zM670 371h2v1h-2zM665 372h2v1h-2zM670 372h2v1h-2zM666 373h6v1h-6zM670 374h2v1h-2zM670 375h2v1h-2zM670 376h2v1h-2zM665 377h2v1h-2zM670 377h2v1h-2zM666 378h5v1h-5z" fill="#fff"/><rect x="682" y="366" width="16" height="16" fill="#c0c0c0"/><rect x="682" y="367" width="13" height="13" fill="#fff"/><rect x="682" y="367" width="12" height="12" fill="#808080"/><rect x="683" y="368" width="11" height="11" fill="#d4d0c8"/><rect x="683" y="368" width="10" height="10" fill="#404040"/><rect x="684" y="369" width="9" height="9" fill="#fff"/><rect x="719.5" y="366.5" width="13" height="13" fill="none" stroke="#fff" stroke-width="1"/><path d="M725 368h2v1h-2zM725 369h2v1h-2zM724 370h4v1h-4zM724 371h1v1h-1zM727 371h1v1h-1zM723 372h2v1h-2zM727 372h2v1h-2zM723 373h2v1h-2zM727 373h2v1h-2zM723 374h2v1h-2zM727 374h2v1h-2zM723 375h6v1h-6zM723 376h1v1h-1zM728 376h1v1h-1zM722 377h2v1h-2zM728 377h2v1h-2z" fill="#fff"/><rect x="743.5" y="366.5" width="13" height="13" fill="none" stroke="#fff" stroke-width="1"/><path d="M746 368h7v1h-7zM746 369h2v1h-2zM752 369h2v1h-2zM746 370h2v1h-2zM753 370h1v1h-1zM746 371h2v1h-2zM752 371h2v1h-2zM746 372h2v1h-2zM752 372h1v1h-1zM746 373h7v1h-7zM746 374h2v1h-2zM753 374h1v1h-1zM746 375h2v1h-2zM753 375h1v1h-1zM746 376h2v1h-2zM753 376h1v1h-1zM746 377h7v1h-7z" fill="#fff"/><rect x="64" y="388" width="1" height="416" fill="#808080"/><rect x="935" y="388" width="1" height="416" fill="#808080"/><rect x="64" y="388" width="872" height="1" fill="#808080"/><rect x="64" y="471" width="872" height="1" fill="#808080"/><rect x="64" y="554" width="872" height="1" fill="#808080"/><rect x="64" y="636" width="872" height="1" fill="#808080"/><rect x="64" y="719" width="872" height="1" fill="#808080"/><rect x="64" y="803" width="872" height="1" fill="#808080"/><rect x="114" y="388" width="1" height="416" fill="#808080"/><rect x="150" y="388" width="1" height="416" fill="#808080"/><rect x="178" y="388" width="1" height="416" fill="#808080"/><rect x="200" y="388" width="1" height="416" fill="#808080"/><rect x="220" y="388" width="1" height="416" fill="#808080"/><rect x="236" y="388" width="1" height="416" fill="#808080"/><rect x="251" y="388" width="1" height="416" fill="#808080"/><rect x="264" y="388" width="1" height="416" fill="#808080"/><rect x="350" y="388" width="1" height="416" fill="#808080"/><rect x="400" y="388" width="1" height="416" fill="#808080"/><rect x="436" y="388" width="1" height="416" fill="#808080"/><rect x="464" y="388" width="1" height="416" fill="#808080"/><rect x="487" y="388" width="1" height="416" fill="#808080"/><rect x="506" y="388" width="1" height="416" fill="#808080"/><rect x="522" y="388" width="1" height="416" fill="#808080"/><rect x="537" y="388" width="1" height="416" fill="#808080"/><rect x="550" y="388" width="1" height="416" fill="#808080"/><rect x="636" y="388" width="1" height="416" fill="#808080"/><rect x="687" y="388" width="1" height="416" fill="#808080"/><rect x="722" y="388" width="1" height="416" fill="#808080"/><rect x="750" y="388" width="1" height="416" fill="#808080"/><rect x="773" y="388" width="1" height="416" fill="#808080"/><rect x="792" y="388" width="1" height="416" fill="#808080"/><rect x="808" y="388" width="1" height="416" fill="#808080"/><rect x="823" y="388" width="1" height="416" fill="#808080"/><rect x="836" y="388" width="1" height="416" fill="#808080"/><rect x="922" y="388" width="1" height="416" fill="#808080"/><rect x="64" y="396" width="3" height="1" fill="#808080"/><rect x="933" y="396" width="3" height="1" fill="#808080"/><rect x="64" y="405" width="3" height="1" fill="#808080"/><rect x="933" y="405" width="3" height="1" fill="#808080"/><rect x="64" y="413" width="3" height="1" fill="#808080"/><rect x="933" y="413" width="3" height="1" fill="#808080"/><rect x="64" y="421" width="3" height="1" fill="#808080"/><rect x="933" y="421" width="3" height="1" fill="#808080"/><rect x="64" y="429" width="3" height="1" fill="#808080"/><rect x="933" y="429" width="3" height="1" fill="#808080"/><rect x="64" y="438" width="3" height="1" fill="#808080"/><rect x="933" y="438" width="3" height="1" fill="#808080"/><rect x="64" y="446" width="3" height="1" fill="#808080"/><rect x="933" y="446" width="3" height="1" fill="#808080"/><rect x="64" y="454" width="3" height="1" fill="#808080"/><rect x="933" y="454" width="3" height="1" fill="#808080"/><rect x="64" y="463" width="3" height="1" fill="#808080"/><rect x="933" y="463" width="3" height="1" fill="#808080"/><rect x="64" y="479" width="3" height="1" fill="#808080"/><rect x="933" y="479" width="3" height="1" fill="#808080"/><rect x="64" y="487" width="3" height="1" fill="#808080"/><rect x="933" y="487" width="3" height="1" fill="#808080"/><rect x="64" y="496" width="3" height="1" fill="#808080"/><rect x="933" y="496" width="3" height="1" fill="#808080"/><rect x="64" y="504" width="3" height="1" fill="#808080"/><rect x="933" y="504" width="3" height="1" fill="#808080"/><rect x="64" y="512" width="3" height="1" fill="#808080"/><rect x="933" y="512" width="3" height="1" fill="#808080"/><rect x="64" y="521" width="3" height="1" fill="#808080"/><rect x="933" y="521" width="3" height="1" fill="#808080"/><rect x="64" y="529" width="3" height="1" fill="#808080"/><rect x="933" y="529" width="3" height="1" fill="#808080"/><rect x="64" y="537" width="3" height="1" fill="#808080"/><rect x="933" y="537" width="3" height="1" fill="#808080"/><rect x="64" y="546" width="3" height="1" fill="#808080"/><rect x="933" y="546" width="3" height="1" fill="#808080"/><rect x="64" y="562" width="3" height="1" fill="#808080"/><rect x="933" y="562" width="3" height="1" fill="#808080"/><rect x="64" y="570" width="3" height="1" fill="#808080"/><rect x="933" y="570" width="3" height="1" fill="#808080"/><rect x="64" y="579" width="3" height="1" fill="#808080"/><rect x="933" y="579" width="3" height="1" fill="#808080"/><rect x="64" y="587" width="3" height="1" fill="#808080"/><rect x="933" y="587" width="3" height="1" fill="#808080"/><rect x="64" y="595" width="3" height="1" fill="#808080"/><rect x="933" y="595" width="3" height="1" fill="#808080"/><rect x="64" y="604" width="3" height="1" fill="#808080"/><rect x="933" y="604" width="3" height="1" fill="#808080"/><rect x="64" y="612" width="3" height="1" fill="#808080"/><rect x="933" y="612" width="3" height="1" fill="#808080"/><rect x="64" y="620" width="3" height="1" fill="#808080"/><rect x="933" y="620" width="3" height="1" fill="#808080"/><rect x="64" y="628" width="3" height="1" fill="#808080"/><rect x="933" y="628" width="3" height="1" fill="#808080"/><rect x="64" y="645" width="3" height="1" fill="#808080"/><rect x="933" y="645" width="3" height="1" fill="#808080"/><rect x="64" y="653" width="3" height="1" fill="#808080"/><rect x="933" y="653" width="3" height="1" fill="#808080"/><rect x="64" y="662" width="3" height="1" fill="#808080"/><rect x="933" y="662" width="3" height="1" fill="#808080"/><rect x="64" y="670" width="3" height="1" fill="#808080"/><rect x="933" y="670" width="3" height="1" fill="#808080"/><rect x="64" y="678" width="3" height="1" fill="#808080"/><rect x="933" y="678" width="3" height="1" fill="#808080"/><rect x="64" y="686" width="3" height="1" fill="#808080"/><rect x="933" y="686" width="3" height="1" fill="#808080"/><rect x="64" y="695" width="3" height="1" fill="#808080"/><rect x="933" y="695" width="3" height="1" fill="#808080"/><rect x="64" y="703" width="3" height="1" fill="#808080"/><rect x="933" y="703" width="3" height="1" fill="#808080"/><rect x="64" y="711" width="3" height="1" fill="#808080"/><rect x="933" y="711" width="3" height="1" fill="#808080"/><rect x="64" y="728" width="3" height="1" fill="#808080"/><rect x="933" y="728" width="3" height="1" fill="#808080"/><rect x="64" y="736" width="3" height="1" fill="#808080"/><rect x="933" y="736" width="3" height="1" fill="#808080"/><rect x="64" y="744" width="3" height="1" fill="#808080"/><rect x="933" y="744" width="3" height="1" fill="#808080"/><rect x="64" y="753" width="3" height="1" fill="#808080"/><rect x="933" y="753" width="3" height="1" fill="#808080"/><rect x="64" y="761" width="3" height="1" fill="#808080"/><rect x="933" y="761" width="3" height="1" fill="#808080"/><rect x="64" y="769" width="3" height="1" fill="#808080"/><rect x="933" y="769" width="3" height="1" fill="#808080"/><rect x="64" y="778" width="3" height="1" fill="#808080"/><rect x="933" y="778" width="3" height="1" fill="#808080"/><rect x="64" y="786" width="3" height="1" fill="#808080"/><rect x="933" y="786" width="3" height="1" fill="#808080"/><rect x="64" y="794" width="3" height="1" fill="#808080"/><rect x="933" y="794" width="3" height="1" fill="#808080"/><path d="M329 517h13v1h-13zM329 518h1v1h-1zM341 518h1v1h-1zM329 519h1v1h-1zM341 519h1v1h-1zM329 520h1v1h-1zM342 520h1v1h-1zM329 521h1v1h-1zM342 521h1v1h-1zM328 522h1v1h-1zM342 522h1v1h-1zM328 523h1v1h-1zM342 523h1v1h-1zM328 524h1v1h-1zM342 524h1v1h-1zM328 525h1v1h-1zM343 525h1v1h-1zM328 526h1v1h-1zM343 526h1v1h-1zM328 527h1v1h-1zM343 527h13v1h-13zM328 528h1v1h-1zM355 528h1v1h-1zM328 529h1v1h-1zM355 529h1v1h-1zM327 530h1v1h-1zM355 530h1v1h-1zM327 531h1v1h-1zM356 531h1v1h-1zM327 532h1v1h-1zM356 532h1v1h-1zM327 533h1v1h-1zM356 533h1v1h-1zM315 534h13v1h-13zM356 534h1v1h-1zM786 534h14v1h-14zM315 535h1v1h-1zM356 535h1v1h-1zM785 535h1v1h-1zM799 535h1v1h-1zM315 536h1v1h-1zM356 536h1v1h-1zM772 536h13v1h-13zM799 536h1v1h-1zM315 537h1v1h-1zM357 537h1v1h-1zM772 537h1v1h-1zM800 537h1v1h-1zM315 538h1v1h-1zM357 538h1v1h-1zM772 538h1v1h-1zM800 538h1v1h-1zM315 539h1v1h-1zM357 539h1v1h-1zM772 539h1v1h-1zM800 539h1v1h-1zM315 540h1v1h-1zM357 540h14v1h-14zM772 540h1v1h-1zM800 540h1v1h-1zM315 541h1v1h-1zM370 541h1v1h-1zM772 541h1v1h-1zM800 541h1v1h-1zM314 542h1v1h-1zM370 542h1v1h-1zM772 542h1v1h-1zM800 542h1v1h-1zM314 543h1v1h-1zM370 543h1v1h-1zM771 543h1v1h-1zM801 543h1v1h-1zM314 544h1v1h-1zM370 544h1v1h-1zM729 544h13v1h-13zM771 544h1v1h-1zM801 544h1v1h-1zM314 545h1v1h-1zM371 545h1v1h-1zM729 545h1v1h-1zM741 545h1v1h-1zM771 545h1v1h-1zM801 545h13v1h-13zM314 546h1v1h-1zM371 546h1v1h-1zM729 546h1v1h-1zM741 546h1v1h-1zM771 546h1v1h-1zM813 546h1v1h-1zM314 547h1v1h-1zM371 547h1v1h-1zM729 547h1v1h-1zM741 547h1v1h-1zM771 547h1v1h-1zM814 547h1v1h-1zM314 548h1v1h-1zM371 548h1v1h-1zM600 548h14v1h-14zM728 548h1v1h-1zM741 548h1v1h-1zM771 548h1v1h-1zM814 548h1v1h-1zM314 549h1v1h-1zM371 549h1v1h-1zM600 549h1v1h-1zM614 549h14v1h-14zM686 549h13v1h-13zM728 549h1v1h-1zM741 549h1v1h-1zM771 549h1v1h-1zM814 549h1v1h-1zM314 550h1v1h-1zM371 550h1v1h-1zM600 550h1v1h-1zM627 550h1v1h-1zM643 550h14v1h-14zM685 550h1v1h-1zM698 550h1v1h-1zM728 550h1v1h-1zM742 550h1v1h-1zM771 550h1v1h-1zM815 550h1v1h-1zM828 550h14v1h-14zM314 551h1v1h-1zM371 551h1v1h-1zM572 551h13v1h-13zM599 551h1v1h-1zM628 551h1v1h-1zM643 551h1v1h-1zM656 551h1v1h-1zM672 551h13v1h-13zM698 551h1v1h-1zM728 551h1v1h-1zM742 551h1v1h-1zM771 551h1v1h-1zM815 551h13v1h-13zM842 551h1v1h-1zM314 552h1v1h-1zM371 552h1v1h-1zM572 552h1v1h-1zM584 552h1v1h-1zM599 552h1v1h-1zM628 552h1v1h-1zM642 552h1v1h-1zM657 552h1v1h-1zM672 552h1v1h-1zM698 552h1v1h-1zM728 552h1v1h-1zM742 552h1v1h-1zM771 552h1v1h-1zM842 552h1v1h-1zM314 553h1v1h-1zM371 553h1v1h-1zM529 553h13v1h-13zM572 553h1v1h-1zM585 553h1v1h-1zM599 553h1v1h-1zM628 553h1v1h-1zM642 553h1v1h-1zM657 553h1v1h-1zM671 553h1v1h-1zM699 553h1v1h-1zM728 553h1v1h-1zM742 553h1v1h-1zM771 553h1v1h-1zM843 553h14v1h-14zM314 554h1v1h-1zM371 554h1v1h-1zM400 554h14v1h-14zM529 554h1v1h-1zM542 554h1v1h-1zM572 554h1v1h-1zM585 554h1v1h-1zM599 554h1v1h-1zM628 554h1v1h-1zM642 554h1v1h-1zM658 554h1v1h-1zM671 554h1v1h-1zM699 554h1v1h-1zM727 554h1v1h-1zM742 554h1v1h-1zM771 554h1v1h-1zM856 554h1v1h-1zM886 554h14v1h-14zM314 555h1v1h-1zM372 555h1v1h-1zM399 555h1v1h-1zM413 555h1v1h-1zM528 555h1v1h-1zM543 555h14v1h-14zM572 555h1v1h-1zM585 555h1v1h-1zM599 555h1v1h-1zM629 555h1v1h-1zM641 555h1v1h-1zM658 555h13v1h-13zM699 555h1v1h-1zM727 555h1v1h-1zM742 555h1v1h-1zM771 555h1v1h-1zM856 555h1v1h-1zM886 555h1v1h-1zM899 555h1v1h-1zM313 556h1v1h-1zM372 556h1v1h-1zM386 556h13v1h-13zM414 556h1v1h-1zM528 556h1v1h-1zM556 556h1v1h-1zM571 556h1v1h-1zM585 556h1v1h-1zM599 556h1v1h-1zM629 556h13v1h-13zM699 556h1v1h-1zM715 556h13v1h-13zM742 556h1v1h-1zM770 556h1v1h-1zM857 556h1v1h-1zM886 556h1v1h-1zM900 556h1v1h-1zM313 557h1v1h-1zM372 557h1v1h-1zM386 557h1v1h-1zM414 557h1v1h-1zM515 557h13v1h-13zM556 557h1v1h-1zM571 557h1v1h-1zM586 557h1v1h-1zM598 557h1v1h-1zM699 557h1v1h-1zM715 557h1v1h-1zM742 557h1v1h-1zM770 557h1v1h-1zM857 557h1v1h-1zM886 557h1v1h-1zM900 557h1v1h-1zM313 558h1v1h-1zM372 558h1v1h-1zM385 558h1v1h-1zM415 558h1v1h-1zM515 558h1v1h-1zM557 558h1v1h-1zM571 558h1v1h-1zM586 558h1v1h-1zM598 558h1v1h-1zM699 558h1v1h-1zM714 558h1v1h-1zM742 558h1v1h-1zM770 558h1v1h-1zM857 558h1v1h-1zM885 558h1v1h-1zM900 558h1v1h-1zM313 559h1v1h-1zM372 559h1v1h-1zM385 559h1v1h-1zM415 559h13v1h-13zM514 559h1v1h-1zM557 559h1v1h-1zM571 559h1v1h-1zM586 559h13v1h-13zM699 559h1v1h-1zM714 559h1v1h-1zM742 559h1v1h-1zM770 559h1v1h-1zM857 559h1v1h-1zM885 559h1v1h-1zM901 559h1v1h-1zM313 560h1v1h-1zM372 560h13v1h-13zM427 560h1v1h-1zM514 560h1v1h-1zM557 560h1v1h-1zM571 560h1v1h-1zM700 560h1v1h-1zM714 560h1v1h-1zM742 560h1v1h-1zM770 560h1v1h-1zM857 560h1v1h-1zM885 560h1v1h-1zM901 560h27v1h-27zM313 561h1v1h-1zM427 561h1v1h-1zM500 561h14v1h-14zM557 561h1v1h-1zM571 561h1v1h-1zM700 561h1v1h-1zM714 561h1v1h-1zM743 561h1v1h-1zM770 561h1v1h-1zM858 561h1v1h-1zM885 561h1v1h-1zM927 561h1v1h-1zM313 562h1v1h-1zM427 562h1v1h-1zM499 562h1v1h-1zM557 562h1v1h-1zM571 562h1v1h-1zM700 562h1v1h-1zM713 562h1v1h-1zM743 562h1v1h-1zM758 562h13v1h-13zM858 562h1v1h-1zM885 562h1v1h-1zM927 562h1v1h-1zM300 563h14v1h-14zM427 563h1v1h-1zM458 563h13v1h-13zM499 563h1v1h-1zM557 563h1v1h-1zM571 563h1v1h-1zM700 563h14v1h-14zM743 563h1v1h-1zM758 563h1v1h-1zM858 563h13v1h-13zM885 563h1v1h-1zM927 563h1v1h-1zM215 564h13v1h-13zM300 564h1v1h-1zM427 564h1v1h-1zM458 564h1v1h-1zM471 564h1v1h-1zM485 564h14v1h-14zM558 564h1v1h-1zM570 564h1v1h-1zM743 564h1v1h-1zM757 564h1v1h-1zM871 564h1v1h-1zM884 564h1v1h-1zM928 564h1v1h-1zM215 565h1v1h-1zM227 565h1v1h-1zM243 565h13v1h-13zM300 565h1v1h-1zM428 565h1v1h-1zM458 565h1v1h-1zM472 565h13v1h-13zM558 565h1v1h-1zM570 565h1v1h-1zM743 565h1v1h-1zM757 565h1v1h-1zM871 565h1v1h-1zM884 565h1v1h-1zM928 565h1v1h-1zM215 566h1v1h-1zM227 566h1v1h-1zM243 566h1v1h-1zM255 566h1v1h-1zM300 566h1v1h-1zM428 566h1v1h-1zM458 566h1v1h-1zM558 566h1v1h-1zM570 566h1v1h-1zM743 566h14v1h-14zM872 566h1v1h-1zM884 566h1v1h-1zM928 566h1v1h-1zM215 567h1v1h-1zM228 567h1v1h-1zM243 567h1v1h-1zM255 567h1v1h-1zM299 567h1v1h-1zM428 567h1v1h-1zM457 567h1v1h-1zM558 567h13v1h-13zM872 567h13v1h-13zM928 567h1v1h-1zM215 568h1v1h-1zM228 568h1v1h-1zM242 568h1v1h-1zM255 568h1v1h-1zM299 568h1v1h-1zM428 568h1v1h-1zM457 568h1v1h-1zM928 568h1v1h-1zM215 569h1v1h-1zM228 569h1v1h-1zM242 569h1v1h-1zM255 569h1v1h-1zM299 569h1v1h-1zM428 569h1v1h-1zM457 569h1v1h-1zM928 569h1v1h-1zM215 570h1v1h-1zM228 570h1v1h-1zM242 570h1v1h-1zM255 570h1v1h-1zM299 570h1v1h-1zM428 570h1v1h-1zM457 570h1v1h-1zM929 570h1v1h-1zM215 571h1v1h-1zM228 571h1v1h-1zM242 571h1v1h-1zM255 571h1v1h-1zM299 571h1v1h-1zM428 571h1v1h-1zM457 571h1v1h-1zM929 571h1v1h-1zM215 572h1v1h-1zM229 572h1v1h-1zM241 572h1v1h-1zM255 572h1v1h-1zM299 572h1v1h-1zM428 572h1v1h-1zM457 572h1v1h-1zM929 572h1v1h-1zM215 573h1v1h-1zM229 573h1v1h-1zM241 573h1v1h-1zM255 573h1v1h-1zM299 573h1v1h-1zM428 573h1v1h-1zM456 573h1v1h-1zM929 573h7v1h-7zM215 574h1v1h-1zM229 574h13v1h-13zM256 574h1v1h-1zM299 574h1v1h-1zM428 574h1v1h-1zM456 574h1v1h-1zM214 575h1v1h-1zM256 575h1v1h-1zM298 575h1v1h-1zM428 575h1v1h-1zM456 575h1v1h-1zM214 576h1v1h-1zM256 576h1v1h-1zM298 576h1v1h-1zM429 576h1v1h-1zM443 576h14v1h-14zM214 577h1v1h-1zM256 577h1v1h-1zM298 577h1v1h-1zM429 577h1v1h-1zM443 577h1v1h-1zM214 578h1v1h-1zM256 578h1v1h-1zM286 578h13v1h-13zM429 578h1v1h-1zM442 578h1v1h-1zM214 579h1v1h-1zM256 579h1v1h-1zM286 579h1v1h-1zM429 579h1v1h-1zM442 579h1v1h-1zM214 580h1v1h-1zM256 580h1v1h-1zM286 580h1v1h-1zM429 580h1v1h-1zM441 580h1v1h-1zM214 581h1v1h-1zM256 581h1v1h-1zM285 581h1v1h-1zM429 581h13v1h-13zM214 582h1v1h-1zM256 582h1v1h-1zM285 582h1v1h-1zM214 583h1v1h-1zM256 583h1v1h-1zM285 583h1v1h-1zM214 584h1v1h-1zM256 584h1v1h-1zM285 584h1v1h-1zM214 585h1v1h-1zM256 585h1v1h-1zM284 585h1v1h-1zM214 586h1v1h-1zM256 586h1v1h-1zM272 586h13v1h-13zM214 587h1v1h-1zM256 587h1v1h-1zM272 587h1v1h-1zM214 588h1v1h-1zM256 588h1v1h-1zM272 588h1v1h-1zM214 589h1v1h-1zM256 589h1v1h-1zM272 589h1v1h-1zM214 590h1v1h-1zM256 590h1v1h-1zM271 590h1v1h-1zM172 591h13v1h-13zM214 591h1v1h-1zM257 591h1v1h-1zM271 591h1v1h-1zM172 592h1v1h-1zM184 592h1v1h-1zM214 592h1v1h-1zM257 592h1v1h-1zM271 592h1v1h-1zM172 593h1v1h-1zM184 593h1v1h-1zM214 593h1v1h-1zM257 593h1v1h-1zM271 593h1v1h-1zM172 594h1v1h-1zM184 594h1v1h-1zM214 594h1v1h-1zM257 594h1v1h-1zM271 594h1v1h-1zM172 595h1v1h-1zM184 595h1v1h-1zM214 595h1v1h-1zM257 595h1v1h-1zM271 595h1v1h-1zM172 596h1v1h-1zM184 596h1v1h-1zM214 596h1v1h-1zM257 596h1v1h-1zM270 596h1v1h-1zM172 597h1v1h-1zM184 597h1v1h-1zM213 597h1v1h-1zM257 597h1v1h-1zM270 597h1v1h-1zM172 598h1v1h-1zM184 598h1v1h-1zM213 598h1v1h-1zM257 598h1v1h-1zM270 598h1v1h-1zM172 599h1v1h-1zM185 599h1v1h-1zM213 599h1v1h-1zM257 599h14v1h-14zM171 600h1v1h-1zM185 600h1v1h-1zM213 600h1v1h-1zM171 601h1v1h-1zM185 601h1v1h-1zM213 601h1v1h-1zM171 602h1v1h-1zM185 602h1v1h-1zM213 602h1v1h-1zM171 603h1v1h-1zM185 603h1v1h-1zM213 603h1v1h-1zM171 604h1v1h-1zM185 604h1v1h-1zM213 604h1v1h-1zM171 605h1v1h-1zM185 605h1v1h-1zM213 605h1v1h-1zM171 606h1v1h-1zM185 606h1v1h-1zM213 606h1v1h-1zM171 607h1v1h-1zM185 607h1v1h-1zM200 607h14v1h-14zM171 608h1v1h-1zM185 608h1v1h-1zM200 608h1v1h-1zM171 609h1v1h-1zM185 609h1v1h-1zM200 609h1v1h-1zM171 610h1v1h-1zM185 610h1v1h-1zM200 610h1v1h-1zM171 611h1v1h-1zM185 611h1v1h-1zM199 611h1v1h-1zM171 612h1v1h-1zM185 612h1v1h-1zM199 612h1v1h-1zM171 613h1v1h-1zM185 613h1v1h-1zM199 613h1v1h-1zM171 614h1v1h-1zM186 614h1v1h-1zM199 614h1v1h-1zM171 615h1v1h-1zM186 615h1v1h-1zM199 615h1v1h-1zM170 616h1v1h-1zM186 616h1v1h-1zM199 616h1v1h-1zM170 617h1v1h-1zM186 617h1v1h-1zM199 617h1v1h-1zM170 618h1v1h-1zM186 618h1v1h-1zM198 618h1v1h-1zM143 619h13v1h-13zM170 619h1v1h-1zM186 619h1v1h-1zM198 619h1v1h-1zM143 620h1v1h-1zM155 620h1v1h-1zM170 620h1v1h-1zM186 620h1v1h-1zM198 620h1v1h-1zM143 621h1v1h-1zM156 621h1v1h-1zM170 621h1v1h-1zM186 621h13v1h-13zM143 622h1v1h-1zM156 622h1v1h-1zM170 622h1v1h-1zM142 623h1v1h-1zM157 623h1v1h-1zM170 623h1v1h-1zM142 624h1v1h-1zM157 624h14v1h-14zM142 625h1v1h-1zM142 626h1v1h-1zM142 627h1v1h-1zM142 628h1v1h-1zM142 629h1v1h-1zM86 630h13v1h-13zM141 630h1v1h-1zM86 631h1v1h-1zM98 631h1v1h-1zM114 631h14v1h-14zM141 631h1v1h-1zM86 632h1v1h-1zM98 632h1v1h-1zM114 632h1v1h-1zM128 632h1v1h-1zM141 632h1v1h-1zM86 633h1v1h-1zM98 633h1v1h-1zM114 633h1v1h-1zM129 633h13v1h-13zM86 634h1v1h-1zM98 634h1v1h-1zM114 634h1v1h-1zM85 635h1v1h-1zM98 635h1v1h-1zM114 635h1v1h-1zM85 636h1v1h-1zM99 636h1v1h-1zM114 636h1v1h-1zM85 637h1v1h-1zM99 637h1v1h-1zM113 637h1v1h-1zM85 638h1v1h-1zM99 638h1v1h-1zM113 638h1v1h-1zM85 639h1v1h-1zM99 639h1v1h-1zM113 639h1v1h-1zM85 640h1v1h-1zM99 640h1v1h-1zM113 640h1v1h-1zM85 641h1v1h-1zM99 641h1v1h-1zM113 641h1v1h-1zM85 642h1v1h-1zM99 642h1v1h-1zM113 642h1v1h-1zM84 643h1v1h-1zM99 643h1v1h-1zM113 643h1v1h-1zM84 644h1v1h-1zM99 644h1v1h-1zM113 644h1v1h-1zM84 645h1v1h-1zM99 645h1v1h-1zM113 645h1v1h-1zM64 646h21v1h-21zM100 646h1v1h-1zM113 646h1v1h-1zM100 647h1v1h-1zM112 647h1v1h-1zM100 648h1v1h-1zM112 648h1v1h-1zM100 649h1v1h-1zM112 649h1v1h-1zM100 650h1v1h-1zM112 650h1v1h-1zM100 651h13v1h-13z" fill="#ffffc0"/></g></svg>
<div class="a lbl" style="right:910px;top:382px;color:#ffffc0;font-size:11px;line-height:12px">60.0</div>
<div class="a lbl" style="right:910px;top:465px;color:#ffffc0;font-size:11px;line-height:12px">40.0</div>
<div class="a lbl" style="right:910px;top:548px;color:#ffffc0;font-size:11px;line-height:12px">20.0</div>
<div class="a lbl" style="right:910px;top:630px;color:#ffffc0;font-size:11px;line-height:12px">0.0</div>
<div class="a lbl" style="right:910px;top:713px;color:#ffffc0;font-size:11px;line-height:12px">-20.0</div>
<div class="a lbl" style="right:910px;top:797px;color:#ffffc0;font-size:11px;line-height:12px">-40.0</div>
<div class="a lbl" style="right:910px;top:424px;color:#ffffc0;font-size:11px;line-height:12px">dBSPL</div>
<div class="a lbl" style="left:14px;width:100px;text-align:center;top:811px;color:#fff;font-size:11px;line-height:12px">20</div>
<div class="a lbl" style="left:214px;width:100px;text-align:center;top:811px;color:#fff;font-size:11px;line-height:12px">100</div>
<div class="a lbl" style="left:500px;width:100px;text-align:center;top:811px;color:#fff;font-size:11px;line-height:12px">1k</div>
<div class="a lbl" style="left:718px;width:100px;text-align:center;top:811px;color:#fff;font-size:11px;line-height:12px">Hz</div>
<div class="a lbl" style="left:786px;width:100px;text-align:center;top:811px;color:#fff;font-size:11px;line-height:12px">10k</div>
<div class="a lbl" style="left:872px;width:100px;text-align:center;top:811px;color:#fff;font-size:11px;line-height:12px">20k</div>
</body></html>
